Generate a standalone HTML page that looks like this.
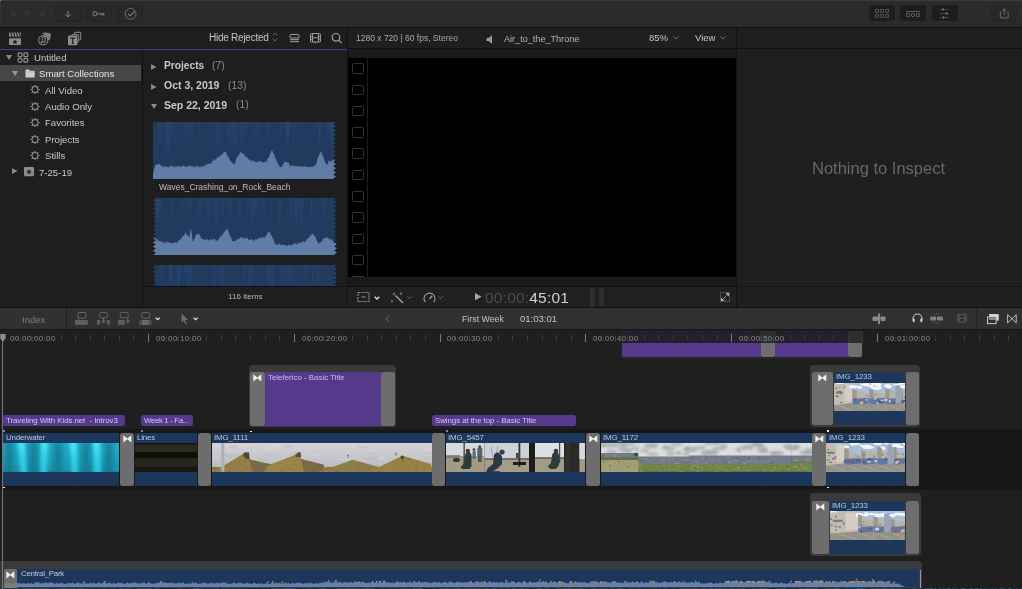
<!DOCTYPE html>
<html><head><meta charset="utf-8">
<style>
*{margin:0;padding:0;box-sizing:border-box}
html,body{width:1022px;height:589px;overflow:hidden;background:#1e1e1e;font-family:"Liberation Sans",sans-serif;color:#c8c8c8}
.a{position:absolute}
.t{position:absolute;white-space:nowrap;line-height:1;will-change:transform}
svg{position:absolute;overflow:visible}
</style></head><body>

<div class="a" style="left:0px;top:0px;width:1022px;height:27px;background:#2b2b2b;border-top:1px solid #3a3a3a"></div>
<div class="a" style="left:0px;top:27px;width:1022px;height:1px;background:#0e0e0e;"></div>
<div class="a" style="left:0px;top:0px;width:1px;height:27px;background:#333;"></div>
<div class="a" style="left:0px;top:0px;width:1px;height:1px;background:#8a70d8;"></div>
<div class="a" style="left:9px;top:9px;width:9px;height:9px;background:#333;border-radius:50%;border:1px solid #282828"></div>
<div class="a" style="left:23px;top:9px;width:9px;height:9px;background:#333;border-radius:50%;border:1px solid #282828"></div>
<div class="a" style="left:37.5px;top:9px;width:9px;height:9px;background:#333;border-radius:50%;border:1px solid #282828"></div>
<div class="a" style="left:55px;top:5px;width:26px;height:17px;background:#282828;border-radius:3px;border:1px solid #232323"></div>
<div class="a" style="left:86px;top:5px;width:26px;height:17px;background:#282828;border-radius:3px;border:1px solid #232323"></div>
<div class="a" style="left:117px;top:5px;width:26px;height:17px;background:#282828;border-radius:3px;border:1px solid #232323"></div>
<svg style="left:55px;top:5px;" width="26" height="17" viewBox="0 0 26 17"><path d="M13 6v6M10.3 9.4l2.7 2.7 2.7-2.7" stroke="#858585" stroke-width="1" fill="none"/></svg>
<svg style="left:86px;top:5px;" width="26" height="17" viewBox="0 0 26 17"><circle cx="9" cy="8.8" r="2.1" stroke="#858585" stroke-width="1" fill="none"/><path d="M11.1 8.8h7.2M15.3 8.8v2M17.8 8.8v2" stroke="#858585" stroke-width="1" fill="none"/></svg>
<svg style="left:117px;top:5px;" width="26" height="17" viewBox="0 0 26 17"><circle cx="13.6" cy="8.8" r="5.4" stroke="#6e6e6e" stroke-width="1" fill="none"/><path d="M11.2 8.8l2 2 4.3-4.3" stroke="#858585" stroke-width="1.1" fill="none"/></svg>
<div class="a" style="left:869px;top:5px;width:26px;height:16px;background:#1d1d1d;border-radius:3px"></div>
<div class="a" style="left:900px;top:5px;width:26px;height:16px;background:#1d1d1d;border-radius:3px"></div>
<div class="a" style="left:932px;top:5px;width:26px;height:16px;background:#1d1d1d;border-radius:3px"></div>
<div class="a" style="left:991px;top:5px;width:26px;height:17px;background:#282828;border-radius:3px;border:1px solid #232323"></div>
<svg style="left:869px;top:5px;" width="26" height="16" viewBox="0 0 26 16"><g fill="none" stroke="#5c5c5c" stroke-width="1"><rect x="6.5" y="4.5" width="3" height="3" rx=".6"/><rect x="11.5" y="4.5" width="3" height="3" rx=".6"/><rect x="16.5" y="4.5" width="3" height="3" rx=".6"/><rect x="6.5" y="9.5" width="3" height="3" rx=".6"/><rect x="11.5" y="9.5" width="3" height="3" rx=".6"/><rect x="16.5" y="9.5" width="3" height="3" rx=".6"/></g></svg>
<svg style="left:900px;top:5px;" width="26" height="16" viewBox="0 0 26 16"><g fill="none" stroke="#5c5c5c" stroke-width="1"><path d="M6 6.5h14"/><rect x="6.5" y="8.5" width="3" height="3" rx=".5"/><rect x="11.5" y="8.5" width="3" height="3" rx=".5"/><rect x="16.5" y="8.5" width="3" height="3" rx=".5"/></g></svg>
<svg style="left:932px;top:5px;" width="26" height="16" viewBox="0 0 26 16"><g fill="none" stroke="#474747" stroke-width="1"><path d="M8 4.5h9M8 8.5h9M8 12.5h9"/></g><g fill="#6a6a6a"><rect x="10.5" y="3" width="1.2" height="3"/><rect x="14" y="7" width="1.2" height="3"/><rect x="11" y="11" width="1.2" height="3"/></g></svg>
<svg style="left:991px;top:5px;" width="26" height="17" viewBox="0 0 26 17"><path d="M10.5 7H9.3v5.9h7.9V7H16M13.2 3.8v6.2M11.3 5.7l1.9-1.9 1.9 1.9" stroke="#6a6a6a" stroke-width="1" fill="none"/></svg>
<div class="a" style="left:0px;top:28px;width:347px;height:21px;background:#1e1e1e;"></div>
<div class="a" style="left:0px;top:49px;width:347px;height:1px;background:#3c3f8a;"></div>
<svg style="left:8px;top:31px;" width="14" height="15" viewBox="0 0 14 15"><rect x="1" y="1.6" width="12" height="4" fill="#8c8c8c"/><path d="M2.6 1.6l1.4 4M5.4 1.6l1.4 4M8.2 1.6l1.4 4M11 1.6l1.4 4" stroke="#1e1e1e" stroke-width="1.1"/><rect x="1" y="7.2" width="12" height="6.9" rx=".8" fill="#8c8c8c"/><path d="M7 8.3l.8 1.65 1.8.22-1.33 1.2.36 1.78L7 12.3l-1.63.85.36-1.78L4.4 10.17l1.8-.22z" fill="#1e1e1e"/></svg>
<svg style="left:37px;top:31px;" width="15" height="15" viewBox="0 0 15 15"><rect x="6.6" y="1.8" width="7" height="7" rx="1.3" fill="#7c7c7c" transform="rotate(12 10.1 5.3)"/><path d="M5.2 2.6h3" stroke="#7c7c7c" stroke-width="1"/><circle cx="6.2" cy="9.2" r="5" fill="#1e1e1e"/><circle cx="6.2" cy="9.2" r="4.6" fill="none" stroke="#8c8c8c" stroke-width="1.1"/><path d="M5.3 11.3V6.5l2.8-.7v4.9" stroke="#8c8c8c" stroke-width=".9" fill="none"/><ellipse cx="4.6" cy="11.4" rx="1.1" ry=".9" fill="#8c8c8c"/><ellipse cx="7.4" cy="10.8" rx="1.1" ry=".9" fill="#8c8c8c"/></svg>
<svg style="left:67px;top:31px;" width="15" height="15" viewBox="0 0 15 15"><path d="M7.3 3.2V2.4a1 1 0 0 1 1-1h4.4a1 1 0 0 1 1 1v5.4a1 1 0 0 1-1 1h-.8" fill="none" stroke="#7c7c7c" stroke-width="1.1"/><path d="M5 5.4V4.6a1 1 0 0 1 1-1h4.6a1 1 0 0 1 1 1v5.4a1 1 0 0 1-1 1H10" fill="none" stroke="#7c7c7c" stroke-width="1.1"/><rect x="1" y="4.6" width="9.4" height="9.6" rx="1.3" fill="#8c8c8c"/><path d="M3.2 7.1h5M5.7 7.1v5.2M4.7 12.3h2" stroke="#1e1e1e" stroke-width="1.2" fill="none"/></svg>
<div class="t" style="left:208.6px;top:32.73px;font-size:10px;color:#c4c4c4;font-weight:normal;letter-spacing:-0.25px;">Hide Rejected</div>
<svg style="left:271px;top:31px;" width="8" height="11" viewBox="0 0 8 11"><path d="M1.6 4.4L4 2l2.4 2.4M1.6 7.6L4 10l2.4-2.4" stroke="#666" stroke-width=".9" fill="none"/></svg>
<svg style="left:289px;top:33px;" width="11" height="10" viewBox="0 0 11 10"><rect x="1" y="1.5" width="9" height="3.5" rx=".8" fill="none" stroke="#9a9a9a" stroke-width="1"/><rect x="1" y="6" width="9" height="1.2" fill="#8a8a8a"/><rect x="1" y="8" width="9" height="1.2" fill="#8a8a8a"/></svg>
<svg style="left:309px;top:32px;" width="13" height="12" viewBox="0 0 13 12"><rect x="1.5" y="1.5" width="10" height="8.5" rx="1" fill="none" stroke="#9a9a9a" stroke-width="1"/><path d="M3.5 1.5v8.5M9.5 1.5v8.5M1.5 4.3h2M1.5 7.2h2M9.5 4.3h2M9.5 7.2h2M3.5 5.75h6" stroke="#9a9a9a" stroke-width="1"/><path d="M5.5 10.5h2l-1 1.2z" fill="#9a9a9a"/></svg>
<svg style="left:331px;top:32px;" width="12" height="13" viewBox="0 0 12 13"><circle cx="5" cy="5.3" r="3.8" fill="none" stroke="#a0a0a0" stroke-width="1.2"/><path d="M7.8 8.1l3 3" stroke="#a0a0a0" stroke-width="1.3"/></svg>
<div class="a" style="left:0px;top:50px;width:142px;height:257px;background:#1e1e1e;"></div>
<div class="a" style="left:0px;top:65px;width:141px;height:16px;background:#474747;"></div>
<div class="a" style="left:142px;top:50px;width:1px;height:257px;background:#121212;"></div>
<svg style="left:6px;top:54.6px;" width="6" height="5" viewBox="0 0 6 5"><path d="M0 0h6l-3 5z" fill="#8a8a8a"/></svg>
<svg style="left:17px;top:52px;" width="12" height="11" viewBox="0 0 12 11"><g fill="none" stroke="#8e8e8e" stroke-width="1.2"><rect x="1.1" y="0.9" width="3.8" height="3.8" rx="1"/><rect x="6.9" y="0.9" width="3.8" height="3.8" rx="1"/><rect x="1.1" y="6.4" width="3.8" height="3.8" rx="1"/><rect x="6.9" y="6.4" width="3.8" height="3.8" rx="1"/></g></svg>
<div class="t" style="left:33.7px;top:52.77px;font-size:9.6px;color:#c8c8c8;font-weight:normal;letter-spacing:0px;">Untitled</div>
<svg style="left:11.5px;top:71px;" width="6" height="5" viewBox="0 0 6 5"><path d="M0 0h6l-3 5z" fill="#9a9a9a"/></svg>
<svg style="left:24.5px;top:68.5px;" width="10" height="9" viewBox="0 0 10 9"><path d="M0.5 1.2a.6.6 0 0 1 .6-.6h2.8l1 1.2h4.2a.6.6 0 0 1 .6.6V8a.6.6 0 0 1-.6.6H1.1A.6.6 0 0 1 .5 8z" fill="#d0d0d0"/><path d="M0.5 3h9.2" stroke="#a8a8a8" stroke-width=".6"/></svg>
<div class="t" style="left:39.3px;top:69.27px;font-size:9.6px;color:#e6e6e6;font-weight:normal;letter-spacing:0px;">Smart Collections</div>
<svg style="left:30px;top:85.4px;" width="10" height="9" viewBox="0 0 10 9"><path d="M8.20 4.50L9.60 4.50" stroke="#9a9a9a" stroke-width="1.1"/><path d="M7.26 6.76L8.25 7.75" stroke="#9a9a9a" stroke-width="1.1"/><path d="M5.00 7.70L5.00 9.10" stroke="#9a9a9a" stroke-width="1.1"/><path d="M2.74 6.76L1.75 7.75" stroke="#9a9a9a" stroke-width="1.1"/><path d="M1.80 4.50L0.40 4.50" stroke="#9a9a9a" stroke-width="1.1"/><path d="M2.74 2.24L1.75 1.25" stroke="#9a9a9a" stroke-width="1.1"/><path d="M5.00 1.30L5.00 -0.10" stroke="#9a9a9a" stroke-width="1.1"/><path d="M7.26 2.24L8.25 1.25" stroke="#9a9a9a" stroke-width="1.1"/><circle cx="5" cy="4.5" r="3" fill="none" stroke="#9a9a9a" stroke-width="1"/></svg>
<div class="t" style="left:45.2px;top:85.57px;font-size:9.6px;color:#c8c8c8;font-weight:normal;letter-spacing:0px;">All Video</div>
<svg style="left:30px;top:101.8px;" width="10" height="9" viewBox="0 0 10 9"><path d="M8.20 4.50L9.60 4.50" stroke="#9a9a9a" stroke-width="1.1"/><path d="M7.26 6.76L8.25 7.75" stroke="#9a9a9a" stroke-width="1.1"/><path d="M5.00 7.70L5.00 9.10" stroke="#9a9a9a" stroke-width="1.1"/><path d="M2.74 6.76L1.75 7.75" stroke="#9a9a9a" stroke-width="1.1"/><path d="M1.80 4.50L0.40 4.50" stroke="#9a9a9a" stroke-width="1.1"/><path d="M2.74 2.24L1.75 1.25" stroke="#9a9a9a" stroke-width="1.1"/><path d="M5.00 1.30L5.00 -0.10" stroke="#9a9a9a" stroke-width="1.1"/><path d="M7.26 2.24L8.25 1.25" stroke="#9a9a9a" stroke-width="1.1"/><circle cx="5" cy="4.5" r="3" fill="none" stroke="#9a9a9a" stroke-width="1"/></svg>
<div class="t" style="left:45.2px;top:101.97px;font-size:9.6px;color:#c8c8c8;font-weight:normal;letter-spacing:0px;">Audio Only</div>
<svg style="left:30px;top:118.2px;" width="10" height="9" viewBox="0 0 10 9"><path d="M8.20 4.50L9.60 4.50" stroke="#9a9a9a" stroke-width="1.1"/><path d="M7.26 6.76L8.25 7.75" stroke="#9a9a9a" stroke-width="1.1"/><path d="M5.00 7.70L5.00 9.10" stroke="#9a9a9a" stroke-width="1.1"/><path d="M2.74 6.76L1.75 7.75" stroke="#9a9a9a" stroke-width="1.1"/><path d="M1.80 4.50L0.40 4.50" stroke="#9a9a9a" stroke-width="1.1"/><path d="M2.74 2.24L1.75 1.25" stroke="#9a9a9a" stroke-width="1.1"/><path d="M5.00 1.30L5.00 -0.10" stroke="#9a9a9a" stroke-width="1.1"/><path d="M7.26 2.24L8.25 1.25" stroke="#9a9a9a" stroke-width="1.1"/><circle cx="5" cy="4.5" r="3" fill="none" stroke="#9a9a9a" stroke-width="1"/></svg>
<div class="t" style="left:45.2px;top:118.37px;font-size:9.6px;color:#c8c8c8;font-weight:normal;letter-spacing:0px;">Favorites</div>
<svg style="left:30px;top:134.6px;" width="10" height="9" viewBox="0 0 10 9"><path d="M8.20 4.50L9.60 4.50" stroke="#9a9a9a" stroke-width="1.1"/><path d="M7.26 6.76L8.25 7.75" stroke="#9a9a9a" stroke-width="1.1"/><path d="M5.00 7.70L5.00 9.10" stroke="#9a9a9a" stroke-width="1.1"/><path d="M2.74 6.76L1.75 7.75" stroke="#9a9a9a" stroke-width="1.1"/><path d="M1.80 4.50L0.40 4.50" stroke="#9a9a9a" stroke-width="1.1"/><path d="M2.74 2.24L1.75 1.25" stroke="#9a9a9a" stroke-width="1.1"/><path d="M5.00 1.30L5.00 -0.10" stroke="#9a9a9a" stroke-width="1.1"/><path d="M7.26 2.24L8.25 1.25" stroke="#9a9a9a" stroke-width="1.1"/><circle cx="5" cy="4.5" r="3" fill="none" stroke="#9a9a9a" stroke-width="1"/></svg>
<div class="t" style="left:45.2px;top:134.77px;font-size:9.6px;color:#c8c8c8;font-weight:normal;letter-spacing:0px;">Projects</div>
<svg style="left:30px;top:151.0px;" width="10" height="9" viewBox="0 0 10 9"><path d="M8.20 4.50L9.60 4.50" stroke="#9a9a9a" stroke-width="1.1"/><path d="M7.26 6.76L8.25 7.75" stroke="#9a9a9a" stroke-width="1.1"/><path d="M5.00 7.70L5.00 9.10" stroke="#9a9a9a" stroke-width="1.1"/><path d="M2.74 6.76L1.75 7.75" stroke="#9a9a9a" stroke-width="1.1"/><path d="M1.80 4.50L0.40 4.50" stroke="#9a9a9a" stroke-width="1.1"/><path d="M2.74 2.24L1.75 1.25" stroke="#9a9a9a" stroke-width="1.1"/><path d="M5.00 1.30L5.00 -0.10" stroke="#9a9a9a" stroke-width="1.1"/><path d="M7.26 2.24L8.25 1.25" stroke="#9a9a9a" stroke-width="1.1"/><circle cx="5" cy="4.5" r="3" fill="none" stroke="#9a9a9a" stroke-width="1"/></svg>
<div class="t" style="left:45.2px;top:151.17px;font-size:9.6px;color:#c8c8c8;font-weight:normal;letter-spacing:0px;">Stills</div>
<svg style="left:11.5px;top:168.4px;" width="6" height="6" viewBox="0 0 6 6"><path d="M0 0v6l5.5-3z" fill="#8a8a8a"/></svg>
<svg style="left:24px;top:166.8px;" width="10" height="9.5" viewBox="0 0 10 9.5"><rect x="0" y="0" width="10" height="9.3" rx="1.2" fill="#8a8a8a"/><path d="M5 1.9l.85 1.85 2 .2-1.5 1.35.42 2L5 6.3 3.23 7.3l.42-2-1.5-1.35 2-.2z" fill="#2a2a2a"/></svg>
<div class="t" style="left:39px;top:167.57px;font-size:9.6px;color:#c8c8c8;font-weight:normal;letter-spacing:0px;">7-25-19</div>
<div class="a" style="left:143px;top:50px;width:204px;height:257px;background:#1e1e1e;"></div>
<div class="a" style="left:143px;top:286px;width:204px;height:1px;background:#111;"></div>
<div class="a" style="left:347px;top:28px;width:1px;height:279px;background:#111;"></div>
<svg style="left:151.2px;top:63.8px;" width="6" height="6" viewBox="0 0 6 6"><path d="M0 0v6l5.5-3z" fill="#8a8a8a"/></svg>
<div class="t" style="left:164.4px;top:60.67px;font-size:10.2px;color:#c8c8c8;font-weight:bold;letter-spacing:0px;">Projects</div>
<div class="t" style="left:212.2px;top:60.58px;font-size:10.3px;color:#8a8a8a;font-weight:normal;letter-spacing:0px;">(7)</div>
<svg style="left:151.2px;top:83.5px;" width="6" height="6" viewBox="0 0 6 6"><path d="M0 0v6l5.5-3z" fill="#8a8a8a"/></svg>
<div class="t" style="left:164.4px;top:80.41px;font-size:10.5px;color:#c8c8c8;font-weight:bold;letter-spacing:0px;">Oct 3, 2019</div>
<div class="t" style="left:227.8px;top:80.58px;font-size:10.3px;color:#8a8a8a;font-weight:normal;letter-spacing:0px;">(13)</div>
<svg style="left:151px;top:104px;" width="6" height="5" viewBox="0 0 6 5"><path d="M0 0h6l-3 5z" fill="#8a8a8a"/></svg>
<div class="t" style="left:164.4px;top:100.11px;font-size:10.5px;color:#c8c8c8;font-weight:bold;letter-spacing:0px;">Sep 22, 2019</div>
<div class="t" style="left:235.7px;top:100.28px;font-size:10.3px;color:#8a8a8a;font-weight:normal;letter-spacing:0px;">(1)</div>
<svg style="left:153px;top:122px;overflow:hidden" width="183" height="57" viewBox="0 0 183 57"><defs><clipPath id="w1"><path d="M0.0 0.0 L183.0 0.0 L180.0 2.1 L183.0 4.2 L180.0 6.3 L183.0 8.4 L180.0 10.5 L183.0 12.6 L180.0 14.7 L183.0 16.8 L180.0 18.9 L183.0 21.0 L180.0 23.1 L183.0 25.2 L180.0 27.3 L183.0 29.4 L180.0 31.5 L183.0 33.6 L180.0 35.7 L183.0 37.8 L180.0 39.9 L183.0 42.0 L180.0 44.1 L183.0 46.2 L180.0 48.3 L183.0 50.4 L180.0 52.5 L183.0 54.6 L180.0 56.7 L183.0 58.8 L183.0 57.0 L0.0 57.0Z"/></clipPath></defs><g clip-path="url(#w1)"><rect width="183" height="57" fill="#213a5e"/><path d="M80.8 0L84.8 0L82.8 43.4Z" fill="#29466e" opacity="0.41"/><path d="M90.8 0L95.0 0L92.9 22.4Z" fill="#29466e" opacity="0.43"/><path d="M112.7 0L117.8 0L115.3 19.8Z" fill="#29466e" opacity="0.36"/><path d="M14.0 0L19.2 0L16.6 36.9Z" fill="#29466e" opacity="0.26"/><path d="M176.8 0L182.7 0L179.7 35.7Z" fill="#29466e" opacity="0.47"/><path d="M28.0 0L29.7 0L28.8 32.2Z" fill="#29466e" opacity="0.27"/><path d="M33.5 0L36.1 0L34.8 18.0Z" fill="#29466e" opacity="0.41"/><path d="M78.0 0L83.3 0L80.6 31.9Z" fill="#29466e" opacity="0.47"/><path d="M89.2 0L93.7 0L91.5 30.1Z" fill="#29466e" opacity="0.35"/><path d="M179.6 0L185.6 0L182.6 41.0Z" fill="#29466e" opacity="0.50"/><path d="M56.4 0L59.0 0L57.7 25.3Z" fill="#29466e" opacity="0.27"/><path d="M138.5 0L141.9 0L140.2 41.2Z" fill="#29466e" opacity="0.39"/><path d="M172.7 0L178.0 0L175.3 17.1Z" fill="#29466e" opacity="0.32"/><path d="M164.7 0L168.4 0L166.6 45.0Z" fill="#29466e" opacity="0.39"/><path d="M11.2 0L15.6 0L13.4 39.3Z" fill="#29466e" opacity="0.34"/><path d="M14.4 0L17.5 0L15.9 44.6Z" fill="#29466e" opacity="0.52"/><path d="M20.3 0L22.9 0L21.6 20.0Z" fill="#29466e" opacity="0.27"/><path d="M144.7 0L147.0 0L145.9 33.0Z" fill="#29466e" opacity="0.41"/><path d="M32.5 0L37.3 0L34.9 20.8Z" fill="#29466e" opacity="0.48"/><path d="M19.6 0L23.0 0L21.3 23.2Z" fill="#29466e" opacity="0.34"/><path d="M175.1 0L180.2 0L177.7 25.8Z" fill="#29466e" opacity="0.56"/><path d="M36.9 0L40.2 0L38.6 41.4Z" fill="#29466e" opacity="0.47"/><path d="M15.4 0L21.3 0L18.4 23.2Z" fill="#29466e" opacity="0.34"/><path d="M139.9 0L142.9 0L141.4 25.5Z" fill="#29466e" opacity="0.28"/><path d="M14.4 0L18.6 0L16.5 24.0Z" fill="#29466e" opacity="0.46"/><path d="M66.2 0L69.8 0L68.0 44.4Z" fill="#29466e" opacity="0.42"/><path d="M102.4 0L107.9 0L105.1 22.3Z" fill="#29466e" opacity="0.30"/><path d="M163.6 0L168.8 0L166.2 24.2Z" fill="#29466e" opacity="0.32"/><path d="M132.4 0L138.2 0L135.3 22.7Z" fill="#29466e" opacity="0.58"/><path d="M159.3 0L163.6 0L161.4 29.1Z" fill="#29466e" opacity="0.29"/><path d="M4.2 0L10.0 0L7.1 23.9Z" fill="#29466e" opacity="0.50"/><path d="M44.4 0L49.6 0L47.0 34.1Z" fill="#29466e" opacity="0.35"/><path d="M29.7 0L34.5 0L32.1 19.1Z" fill="#29466e" opacity="0.33"/><path d="M99.7 0L105.0 0L102.4 34.6Z" fill="#29466e" opacity="0.35"/><path d="M166.6 0L169.1 0L167.9 17.6Z" fill="#29466e" opacity="0.34"/><path d="M80.6 0L82.5 0L81.6 22.1Z" fill="#29466e" opacity="0.38"/><path d="M103.6 0L105.8 0L104.7 27.4Z" fill="#29466e" opacity="0.56"/><path d="M177.2 0L181.7 0L179.4 36.8Z" fill="#29466e" opacity="0.45"/><path d="M24.8 0L26.6 0L25.7 17.6Z" fill="#29466e" opacity="0.57"/><path d="M125.4 0L131.2 0L128.3 17.7Z" fill="#29466e" opacity="0.47"/><path d="M85.8 0L90.7 0L88.2 26.2Z" fill="#29466e" opacity="0.60"/><path d="M11.8 0L15.8 0L13.8 38.1Z" fill="#29466e" opacity="0.57"/><path d="M132.5 0L137.2 0L134.9 39.7Z" fill="#29466e" opacity="0.57"/><path d="M62.1 0L66.7 0L64.4 42.8Z" fill="#29466e" opacity="0.55"/><path d="M73.8 0L78.9 0L76.3 41.7Z" fill="#29466e" opacity="0.45"/><path d="M0 57 L0.0 52.3 L0.7 48.9 L1.4 46.6 L2.1 44.2 L2.8 42.2 L3.5 42.8 L4.2 43.0 L4.9 42.0 L5.6 42.0 L6.3 41.8 L7.0 43.2 L7.7 43.4 L8.4 43.6 L9.1 45.1 L9.8 43.8 L10.5 45.6 L11.2 43.8 L11.9 45.1 L12.6 44.8 L13.3 44.2 L14.0 45.3 L14.7 44.8 L15.4 45.0 L16.1 45.7 L16.8 44.1 L17.5 43.5 L18.2 44.1 L18.9 45.0 L19.6 43.8 L20.3 43.7 L21.0 45.4 L21.7 44.8 L22.4 44.2 L23.1 45.3 L23.8 43.9 L24.5 44.7 L25.2 43.5 L25.9 44.0 L26.6 44.9 L27.3 45.1 L28.0 45.0 L28.7 43.8 L29.4 44.2 L30.1 43.6 L30.8 43.2 L31.5 44.1 L32.2 44.9 L32.9 45.0 L33.6 44.7 L34.3 45.3 L35.0 43.7 L35.7 43.5 L36.4 44.2 L37.1 43.8 L37.8 43.7 L38.5 44.2 L39.2 44.8 L39.9 44.5 L40.6 44.1 L41.3 45.4 L42.0 45.8 L42.7 44.5 L43.4 43.6 L44.1 43.6 L44.8 45.6 L45.5 43.7 L46.2 45.3 L46.9 45.0 L47.6 44.4 L48.3 45.6 L49.0 43.8 L49.7 44.1 L50.4 44.7 L51.1 43.2 L51.8 44.7 L52.5 42.9 L53.2 42.3 L53.9 41.6 L54.6 42.6 L55.3 41.8 L56.0 41.8 L56.7 41.5 L57.4 41.4 L58.1 41.4 L58.8 40.3 L59.5 38.7 L60.2 39.0 L60.9 37.9 L61.6 37.1 L62.3 37.7 L63.0 37.7 L63.7 35.8 L64.4 35.5 L65.1 35.0 L65.8 35.3 L66.5 34.3 L67.2 33.9 L67.9 33.7 L68.6 32.1 L69.3 32.4 L70.0 32.0 L70.7 29.3 L71.4 30.6 L72.1 29.7 L72.8 29.5 L73.5 31.5 L74.2 33.2 L74.9 35.1 L75.6 35.0 L76.3 36.6 L77.0 38.3 L77.7 39.1 L78.4 40.4 L79.1 40.3 L79.8 41.7 L80.5 41.6 L81.2 43.0 L81.9 41.5 L82.6 39.3 L83.3 37.8 L84.0 34.8 L84.7 34.7 L85.4 33.6 L86.1 32.7 L86.8 30.7 L87.5 30.4 L88.2 28.8 L88.9 31.1 L89.6 31.9 L90.3 31.5 L91.0 31.7 L91.7 33.5 L92.4 34.5 L93.1 35.6 L93.8 35.5 L94.5 35.0 L95.2 37.4 L95.9 36.2 L96.6 38.6 L97.3 37.6 L98.0 38.6 L98.7 39.7 L99.4 38.2 L100.1 38.3 L100.8 39.2 L101.5 39.8 L102.2 40.1 L102.9 39.8 L103.6 40.4 L104.3 39.4 L105.0 40.5 L105.7 38.5 L106.4 38.9 L107.1 39.7 L107.8 39.1 L108.5 40.2 L109.2 40.1 L109.9 39.8 L110.6 40.7 L111.3 40.0 L112.0 39.5 L112.7 39.7 L113.4 40.0 L114.1 38.8 L114.8 35.7 L115.5 35.8 L116.2 34.7 L116.9 32.3 L117.6 31.0 L118.3 28.7 L119.0 28.1 L119.7 29.6 L120.4 31.5 L121.1 31.8 L121.8 35.7 L122.5 36.1 L123.2 37.4 L123.9 39.9 L124.6 40.9 L125.3 42.2 L126.0 44.3 L126.7 44.3 L127.4 45.6 L128.1 44.5 L128.8 45.0 L129.5 44.1 L130.2 41.7 L130.9 41.4 L131.6 39.7 L132.3 39.7 L133.0 39.8 L133.7 40.7 L134.4 40.3 L135.1 40.7 L135.8 41.1 L136.5 42.8 L137.2 44.2 L137.9 43.0 L138.6 44.7 L139.3 43.0 L140.0 43.4 L140.7 43.6 L141.4 44.7 L142.1 43.9 L142.8 44.1 L143.5 44.7 L144.2 43.6 L144.9 45.1 L145.6 43.7 L146.3 44.7 L147.0 44.2 L147.7 44.1 L148.4 44.9 L149.1 44.8 L149.8 44.7 L150.5 44.8 L151.2 45.0 L151.9 44.0 L152.6 44.1 L153.3 45.0 L154.0 45.0 L154.7 44.7 L155.4 45.4 L156.1 44.8 L156.8 45.3 L157.5 43.7 L158.2 44.9 L158.9 45.0 L159.6 45.2 L160.3 43.7 L161.0 43.6 L161.7 45.0 L162.4 42.3 L163.1 42.3 L163.8 40.1 L164.5 36.5 L165.2 34.9 L165.9 34.4 L166.6 31.7 L167.3 29.7 L168.0 29.8 L168.7 30.7 L169.4 33.4 L170.1 33.7 L170.8 36.2 L171.5 38.9 L172.2 39.4 L172.9 42.0 L173.6 42.6 L174.3 42.3 L175.0 41.5 L175.7 38.5 L176.4 39.0 L177.1 39.6 L177.8 39.0 L178.5 39.4 L179.2 38.3 L179.9 38.0 L180.6 38.1 L181.3 37.9 L182.0 39.1 L182.7 39.0 L183 57Z" fill="#5f7da6"/></g></svg>
<div class="t" style="left:158.7px;top:183.10px;font-size:8.5px;color:#bdbdbd;font-weight:normal;letter-spacing:0px;">Waves_Crashing_on_Rock_Beach</div>
<svg style="left:153px;top:198px;overflow:hidden" width="184" height="57" viewBox="0 0 184 57"><defs><clipPath id="w2"><path d="M0.0 0.0 L184.0 0.0 L181.0 2.1 L184.0 4.2 L181.0 6.3 L184.0 8.4 L181.0 10.5 L184.0 12.6 L181.0 14.7 L184.0 16.8 L181.0 18.9 L184.0 21.0 L181.0 23.1 L184.0 25.2 L181.0 27.3 L184.0 29.4 L181.0 31.5 L184.0 33.6 L181.0 35.7 L184.0 37.8 L181.0 39.9 L184.0 42.0 L181.0 44.1 L184.0 46.2 L181.0 48.3 L184.0 50.4 L181.0 52.5 L184.0 54.6 L181.0 56.7 L184.0 58.8 L184.0 57.0 L0.0 57.0 L3.0 54.9 L0.0 52.8 L3.0 50.7 L0.0 48.6 L3.0 46.5 L0.0 44.4 L3.0 42.3 L0.0 40.2 L3.0 38.1 L0.0 36.0 L3.0 33.9 L0.0 31.8 L3.0 29.7 L0.0 27.6 L3.0 25.5 L0.0 23.4 L3.0 21.3 L0.0 19.2 L3.0 17.1 L0.0 15.0 L3.0 12.9 L0.0 10.8 L3.0 8.7 L0.0 6.6 L3.0 4.5 L0.0 2.4 L3.0 0.3 L0.0 -1.8Z"/></clipPath></defs><g clip-path="url(#w2)"><rect width="184" height="57" fill="#213a5e"/><path d="M167.3 0L173.1 0L170.2 42.5Z" fill="#29466e" opacity="0.28"/><path d="M107.2 0L110.7 0L108.9 32.2Z" fill="#29466e" opacity="0.30"/><path d="M33.5 0L37.1 0L35.3 23.4Z" fill="#29466e" opacity="0.41"/><path d="M3.6 0L5.5 0L4.6 37.3Z" fill="#29466e" opacity="0.40"/><path d="M91.9 0L96.7 0L94.3 27.3Z" fill="#29466e" opacity="0.27"/><path d="M142.0 0L146.2 0L144.1 35.9Z" fill="#29466e" opacity="0.47"/><path d="M177.0 0L180.2 0L178.6 38.8Z" fill="#29466e" opacity="0.38"/><path d="M103.0 0L107.5 0L105.3 26.1Z" fill="#29466e" opacity="0.28"/><path d="M84.8 0L89.6 0L87.2 33.9Z" fill="#29466e" opacity="0.41"/><path d="M117.0 0L119.4 0L118.2 22.2Z" fill="#29466e" opacity="0.36"/><path d="M148.9 0L151.4 0L150.1 20.4Z" fill="#29466e" opacity="0.28"/><path d="M5.8 0L8.6 0L7.2 33.4Z" fill="#29466e" opacity="0.54"/><path d="M59.3 0L62.5 0L60.9 25.3Z" fill="#29466e" opacity="0.36"/><path d="M141.1 0L145.1 0L143.1 24.5Z" fill="#29466e" opacity="0.29"/><path d="M141.9 0L146.6 0L144.2 40.7Z" fill="#29466e" opacity="0.33"/><path d="M97.5 0L103.2 0L100.4 34.0Z" fill="#29466e" opacity="0.58"/><path d="M27.8 0L33.7 0L30.8 18.7Z" fill="#29466e" opacity="0.40"/><path d="M1.7 0L6.9 0L4.3 36.7Z" fill="#29466e" opacity="0.59"/><path d="M145.2 0L151.0 0L148.1 32.4Z" fill="#29466e" opacity="0.60"/><path d="M136.3 0L139.4 0L137.8 44.9Z" fill="#29466e" opacity="0.38"/><path d="M34.6 0L36.5 0L35.6 30.4Z" fill="#29466e" opacity="0.32"/><path d="M168.9 0L174.7 0L171.8 23.3Z" fill="#29466e" opacity="0.29"/><path d="M96.2 0L98.5 0L97.3 32.6Z" fill="#29466e" opacity="0.53"/><path d="M44.8 0L48.3 0L46.6 42.8Z" fill="#29466e" opacity="0.41"/><path d="M60.3 0L65.8 0L63.1 40.3Z" fill="#29466e" opacity="0.56"/><path d="M124.8 0L128.3 0L126.5 36.9Z" fill="#29466e" opacity="0.54"/><path d="M116.3 0L119.0 0L117.7 25.5Z" fill="#29466e" opacity="0.39"/><path d="M140.0 0L144.0 0L142.0 32.8Z" fill="#29466e" opacity="0.54"/><path d="M17.8 0L22.1 0L20.0 26.6Z" fill="#29466e" opacity="0.45"/><path d="M152.4 0L155.1 0L153.7 44.2Z" fill="#29466e" opacity="0.28"/><path d="M101.4 0L105.4 0L103.4 23.8Z" fill="#29466e" opacity="0.45"/><path d="M84.8 0L88.4 0L86.6 37.6Z" fill="#29466e" opacity="0.25"/><path d="M66.9 0L71.9 0L69.4 21.1Z" fill="#29466e" opacity="0.55"/><path d="M35.2 0L39.8 0L37.5 22.0Z" fill="#29466e" opacity="0.41"/><path d="M76.8 0L78.7 0L77.7 37.0Z" fill="#29466e" opacity="0.42"/><path d="M124.8 0L128.8 0L126.8 32.9Z" fill="#29466e" opacity="0.43"/><path d="M52.0 0L57.6 0L54.8 19.6Z" fill="#29466e" opacity="0.56"/><path d="M157.0 0L160.8 0L158.9 39.2Z" fill="#29466e" opacity="0.49"/><path d="M109.9 0L112.8 0L111.3 26.2Z" fill="#29466e" opacity="0.37"/><path d="M52.7 0L58.5 0L55.6 26.8Z" fill="#29466e" opacity="0.39"/><path d="M74.6 0L79.8 0L77.2 30.7Z" fill="#29466e" opacity="0.44"/><path d="M45.6 0L48.4 0L47.0 19.6Z" fill="#29466e" opacity="0.33"/><path d="M45.9 0L51.2 0L48.6 31.4Z" fill="#29466e" opacity="0.29"/><path d="M84.1 0L86.2 0L85.1 33.2Z" fill="#29466e" opacity="0.40"/><path d="M156.6 0L159.3 0L157.9 41.3Z" fill="#29466e" opacity="0.34"/><path d="M0 57 L0.0 40.2 L0.7 39.8 L1.4 38.8 L2.1 41.0 L2.8 40.2 L3.5 40.9 L4.2 40.8 L4.9 42.9 L5.6 41.5 L6.3 43.5 L7.0 43.1 L7.7 44.2 L8.4 43.5 L9.1 43.1 L9.8 45.1 L10.5 44.5 L11.2 43.4 L11.9 45.4 L12.6 45.3 L13.3 43.6 L14.0 43.2 L14.7 44.7 L15.4 43.6 L16.1 45.1 L16.8 44.5 L17.5 45.1 L18.2 44.8 L18.9 45.3 L19.6 45.5 L20.3 45.0 L21.0 45.0 L21.7 44.4 L22.4 44.0 L23.1 44.0 L23.8 45.8 L24.5 43.7 L25.2 43.4 L25.9 42.3 L26.6 42.2 L27.3 41.1 L28.0 41.1 L28.7 39.2 L29.4 38.2 L30.1 38.0 L30.8 37.3 L31.5 36.9 L32.2 34.5 L32.9 35.1 L33.6 36.4 L34.3 37.8 L35.0 37.1 L35.7 39.1 L36.4 38.7 L37.1 35.3 L37.8 29.9 L38.5 33.2 L39.2 38.9 L39.9 43.9 L40.6 42.9 L41.3 40.7 L42.0 39.8 L42.7 37.5 L43.4 36.8 L44.1 35.7 L44.8 36.0 L45.5 36.0 L46.2 36.6 L46.9 37.2 L47.6 38.5 L48.3 40.4 L49.0 40.9 L49.7 40.3 L50.4 41.9 L51.1 41.3 L51.8 42.3 L52.5 41.3 L53.2 41.6 L53.9 41.1 L54.6 41.6 L55.3 42.4 L56.0 42.6 L56.7 41.9 L57.4 41.4 L58.1 40.5 L58.8 42.4 L59.5 41.4 L60.2 41.4 L60.9 40.7 L61.6 40.7 L62.3 41.6 L63.0 43.0 L63.7 42.5 L64.4 42.5 L65.1 42.3 L65.8 40.5 L66.5 39.5 L67.2 39.7 L67.9 37.6 L68.6 38.0 L69.3 37.0 L70.0 36.3 L70.7 34.4 L71.4 33.4 L72.1 33.4 L72.8 31.6 L73.5 31.8 L74.2 30.0 L74.9 31.6 L75.6 34.1 L76.3 36.0 L77.0 38.1 L77.7 38.7 L78.4 40.4 L79.1 43.3 L79.8 43.0 L80.5 43.2 L81.2 43.2 L81.9 42.9 L82.6 43.1 L83.3 41.4 L84.0 42.6 L84.7 39.9 L85.4 41.3 L86.1 40.4 L86.8 40.7 L87.5 38.5 L88.2 39.5 L88.9 40.3 L89.6 39.8 L90.3 38.6 L91.0 40.8 L91.7 41.1 L92.4 39.2 L93.1 41.1 L93.8 39.4 L94.5 39.6 L95.2 41.5 L95.9 41.5 L96.6 42.2 L97.3 41.6 L98.0 41.5 L98.7 41.1 L99.4 42.0 L100.1 43.2 L100.8 42.2 L101.5 42.5 L102.2 40.7 L102.9 41.8 L103.6 41.7 L104.3 39.9 L105.0 41.5 L105.7 39.8 L106.4 39.7 L107.1 39.2 L107.8 40.4 L108.5 39.0 L109.2 40.8 L109.9 38.3 L110.6 40.1 L111.3 39.8 L112.0 39.2 L112.7 38.1 L113.4 37.6 L114.1 36.2 L114.8 33.9 L115.5 34.5 L116.2 33.0 L116.9 34.7 L117.6 35.7 L118.3 37.8 L119.0 37.8 L119.7 40.7 L120.4 40.7 L121.1 43.2 L121.8 45.9 L122.5 46.3 L123.2 46.9 L123.9 45.4 L124.6 46.9 L125.3 47.0 L126.0 45.5 L126.7 45.5 L127.4 46.6 L128.1 47.6 L128.8 46.8 L129.5 46.4 L130.2 46.6 L130.9 47.4 L131.6 46.8 L132.3 46.9 L133.0 47.1 L133.7 47.9 L134.4 47.7 L135.1 47.8 L135.8 46.3 L136.5 47.0 L137.2 47.4 L137.9 47.0 L138.6 47.4 L139.3 47.2 L140.0 45.2 L140.7 46.0 L141.4 45.5 L142.1 45.0 L142.8 45.5 L143.5 46.6 L144.2 45.9 L144.9 44.2 L145.6 44.4 L146.3 44.6 L147.0 45.7 L147.7 44.5 L148.4 43.7 L149.1 44.5 L149.8 43.6 L150.5 43.0 L151.2 44.0 L151.9 44.3 L152.6 43.1 L153.3 42.3 L154.0 40.2 L154.7 40.4 L155.4 39.9 L156.1 39.5 L156.8 38.1 L157.5 36.4 L158.2 37.8 L158.9 35.5 L159.6 36.0 L160.3 35.5 L161.0 37.7 L161.7 38.0 L162.4 38.8 L163.1 41.0 L163.8 42.3 L164.5 44.2 L165.2 44.4 L165.9 46.2 L166.6 45.0 L167.3 45.0 L168.0 42.8 L168.7 43.7 L169.4 43.0 L170.1 39.9 L170.8 41.1 L171.5 40.5 L172.2 40.2 L172.9 38.6 L173.6 39.9 L174.3 39.8 L175.0 39.3 L175.7 40.7 L176.4 41.2 L177.1 41.0 L177.8 42.3 L178.5 40.9 L179.2 41.9 L179.9 43.0 L180.6 43.5 L181.3 45.1 L182.0 44.8 L182.7 45.3 L183.4 45.8 L184 57Z" fill="#5f7da6"/></g></svg>
<svg style="left:153px;top:265px;overflow:hidden" width="184" height="21" viewBox="0 0 184 21"><defs><clipPath id="w3"><path d="M0.0 0.0 L184.0 0.0 L181.0 2.1 L184.0 4.2 L181.0 6.3 L184.0 8.4 L181.0 10.5 L184.0 12.6 L181.0 14.7 L184.0 16.8 L181.0 18.9 L184.0 21.0 L181.0 23.1 L184.0 25.2 L181.0 27.3 L184.0 29.4 L181.0 31.5 L184.0 33.6 L181.0 35.7 L184.0 37.8 L181.0 39.9 L184.0 42.0 L181.0 44.1 L184.0 46.2 L181.0 48.3 L184.0 50.4 L181.0 52.5 L184.0 54.6 L181.0 56.7 L184.0 58.8 L184.0 57.0 L0.0 57.0 L3.0 54.9 L0.0 52.8 L3.0 50.7 L0.0 48.6 L3.0 46.5 L0.0 44.4 L3.0 42.3 L0.0 40.2 L3.0 38.1 L0.0 36.0 L3.0 33.9 L0.0 31.8 L3.0 29.7 L0.0 27.6 L3.0 25.5 L0.0 23.4 L3.0 21.3 L0.0 19.2 L3.0 17.1 L0.0 15.0 L3.0 12.9 L0.0 10.8 L3.0 8.7 L0.0 6.6 L3.0 4.5 L0.0 2.4 L3.0 0.3 L0.0 -1.8Z"/></clipPath></defs><g clip-path="url(#w3)"><rect width="184" height="57" fill="#213a5e"/><path d="M1.2 0L3.3 0L2.3 28.3Z" fill="#29466e" opacity="0.49"/><path d="M24.5 0L26.6 0L25.5 23.7Z" fill="#29466e" opacity="0.52"/><path d="M24.7 0L29.6 0L27.1 36.0Z" fill="#29466e" opacity="0.30"/><path d="M96.8 0L100.3 0L98.6 28.9Z" fill="#29466e" opacity="0.60"/><path d="M16.3 0L18.0 0L17.1 43.9Z" fill="#29466e" opacity="0.39"/><path d="M35.0 0L38.1 0L36.5 27.5Z" fill="#29466e" opacity="0.58"/><path d="M37.4 0L40.0 0L38.7 33.8Z" fill="#29466e" opacity="0.44"/><path d="M172.8 0L178.1 0L175.5 27.2Z" fill="#29466e" opacity="0.32"/><path d="M150.9 0L156.9 0L153.9 18.0Z" fill="#29466e" opacity="0.51"/><path d="M157.5 0L162.0 0L159.8 23.3Z" fill="#29466e" opacity="0.53"/><path d="M133.1 0L135.5 0L134.3 35.4Z" fill="#29466e" opacity="0.33"/><path d="M6.1 0L9.2 0L7.6 26.6Z" fill="#29466e" opacity="0.39"/><path d="M116.4 0L121.6 0L119.0 44.5Z" fill="#29466e" opacity="0.59"/><path d="M180.3 0L185.3 0L182.8 25.8Z" fill="#29466e" opacity="0.31"/><path d="M112.8 0L116.8 0L114.8 36.3Z" fill="#29466e" opacity="0.28"/><path d="M32.6 0L38.3 0L35.5 34.2Z" fill="#29466e" opacity="0.49"/><path d="M15.9 0L19.3 0L17.6 43.0Z" fill="#29466e" opacity="0.48"/><path d="M181.2 0L183.7 0L182.5 30.1Z" fill="#29466e" opacity="0.53"/><path d="M79.3 0L84.4 0L81.8 33.1Z" fill="#29466e" opacity="0.29"/><path d="M15.2 0L21.2 0L18.2 20.5Z" fill="#29466e" opacity="0.32"/><path d="M59.3 0L64.0 0L61.7 41.4Z" fill="#29466e" opacity="0.42"/><path d="M89.1 0L94.2 0L91.7 25.0Z" fill="#29466e" opacity="0.38"/><path d="M110.5 0L114.9 0L112.7 18.2Z" fill="#29466e" opacity="0.29"/><path d="M23.0 0L27.8 0L25.4 36.8Z" fill="#29466e" opacity="0.59"/><path d="M139.9 0L142.6 0L141.2 38.9Z" fill="#29466e" opacity="0.59"/><path d="M63.3 0L65.0 0L64.2 27.8Z" fill="#29466e" opacity="0.35"/><path d="M31.5 0L33.3 0L32.4 20.7Z" fill="#29466e" opacity="0.55"/><path d="M7.0 0L11.3 0L9.2 23.0Z" fill="#29466e" opacity="0.32"/><path d="M149.6 0L152.5 0L151.0 22.3Z" fill="#29466e" opacity="0.41"/><path d="M125.9 0L129.8 0L127.9 41.6Z" fill="#29466e" opacity="0.39"/><path d="M94.0 0L98.8 0L96.4 30.3Z" fill="#29466e" opacity="0.50"/><path d="M84.8 0L87.0 0L85.9 20.6Z" fill="#29466e" opacity="0.52"/><path d="M134.2 0L139.9 0L137.1 36.8Z" fill="#29466e" opacity="0.45"/><path d="M27.9 0L33.3 0L30.6 20.5Z" fill="#29466e" opacity="0.40"/><path d="M24.2 0L27.5 0L25.9 25.9Z" fill="#29466e" opacity="0.40"/><path d="M128.8 0L132.8 0L130.8 24.0Z" fill="#29466e" opacity="0.52"/><path d="M132.6 0L137.9 0L135.3 18.0Z" fill="#29466e" opacity="0.47"/><path d="M163.4 0L166.1 0L164.8 22.9Z" fill="#29466e" opacity="0.53"/><path d="M65.3 0L68.6 0L67.0 40.4Z" fill="#29466e" opacity="0.38"/><path d="M35.2 0L37.8 0L36.5 26.9Z" fill="#29466e" opacity="0.49"/><path d="M65.3 0L70.3 0L67.8 19.0Z" fill="#29466e" opacity="0.34"/><path d="M113.1 0L116.8 0L115.0 31.3Z" fill="#29466e" opacity="0.58"/><path d="M49.8 0L52.2 0L51.0 18.1Z" fill="#29466e" opacity="0.42"/><path d="M52.8 0L56.5 0L54.7 17.3Z" fill="#29466e" opacity="0.25"/><path d="M67.4 0L72.3 0L69.9 25.7Z" fill="#29466e" opacity="0.57"/><path d="M0 57 L0.0 40.2 L0.7 39.8 L1.4 40.7 L2.1 39.4 L2.8 40.3 L3.5 40.8 L4.2 40.1 L4.9 39.6 L5.6 39.0 L6.3 40.2 L7.0 39.3 L7.7 39.7 L8.4 40.1 L9.1 41.1 L9.8 40.4 L10.5 40.0 L11.2 40.9 L11.9 39.5 L12.6 39.7 L13.3 40.4 L14.0 40.1 L14.7 39.3 L15.4 39.8 L16.1 40.8 L16.8 39.4 L17.5 40.5 L18.2 38.9 L18.9 41.1 L19.6 40.4 L20.3 39.6 L21.0 41.2 L21.7 40.7 L22.4 38.9 L23.1 39.4 L23.8 40.0 L24.5 41.2 L25.2 39.1 L25.9 38.9 L26.6 39.6 L27.3 38.9 L28.0 39.8 L28.7 40.1 L29.4 39.9 L30.1 39.1 L30.8 38.9 L31.5 40.7 L32.2 39.9 L32.9 40.0 L33.6 39.9 L34.3 40.4 L35.0 41.0 L35.7 40.8 L36.4 40.5 L37.1 39.6 L37.8 39.2 L38.5 39.0 L39.2 40.9 L39.9 38.9 L40.6 40.2 L41.3 41.0 L42.0 39.6 L42.7 39.7 L43.4 39.8 L44.1 41.1 L44.8 40.4 L45.5 40.8 L46.2 38.9 L46.9 40.6 L47.6 39.9 L48.3 39.8 L49.0 40.8 L49.7 40.6 L50.4 41.0 L51.1 40.6 L51.8 41.0 L52.5 39.8 L53.2 40.1 L53.9 40.7 L54.6 39.9 L55.3 39.1 L56.0 40.2 L56.7 40.9 L57.4 40.9 L58.1 39.1 L58.8 39.7 L59.5 39.3 L60.2 39.6 L60.9 41.1 L61.6 39.8 L62.3 39.6 L63.0 39.5 L63.7 39.9 L64.4 40.4 L65.1 39.6 L65.8 39.2 L66.5 39.3 L67.2 39.4 L67.9 41.0 L68.6 39.2 L69.3 40.6 L70.0 39.1 L70.7 40.7 L71.4 39.4 L72.1 40.7 L72.8 39.8 L73.5 39.0 L74.2 39.0 L74.9 40.7 L75.6 40.1 L76.3 40.0 L77.0 39.6 L77.7 40.5 L78.4 40.0 L79.1 38.9 L79.8 40.2 L80.5 39.6 L81.2 40.8 L81.9 40.1 L82.6 40.7 L83.3 39.1 L84.0 40.5 L84.7 40.3 L85.4 40.8 L86.1 40.9 L86.8 40.1 L87.5 40.2 L88.2 40.6 L88.9 39.4 L89.6 40.1 L90.3 40.7 L91.0 40.2 L91.7 40.1 L92.4 40.9 L93.1 41.1 L93.8 39.4 L94.5 39.0 L95.2 40.3 L95.9 39.2 L96.6 41.1 L97.3 39.9 L98.0 40.1 L98.7 40.8 L99.4 40.9 L100.1 39.1 L100.8 39.9 L101.5 39.2 L102.2 39.9 L102.9 39.1 L103.6 40.9 L104.3 39.7 L105.0 39.7 L105.7 41.0 L106.4 40.8 L107.1 39.6 L107.8 40.0 L108.5 40.4 L109.2 39.3 L109.9 39.1 L110.6 40.9 L111.3 39.2 L112.0 40.5 L112.7 40.6 L113.4 40.2 L114.1 39.6 L114.8 40.9 L115.5 40.7 L116.2 39.0 L116.9 41.0 L117.6 40.3 L118.3 39.5 L119.0 39.2 L119.7 39.0 L120.4 40.7 L121.1 40.8 L121.8 39.6 L122.5 39.2 L123.2 39.0 L123.9 39.8 L124.6 39.5 L125.3 38.9 L126.0 39.5 L126.7 40.8 L127.4 39.0 L128.1 39.8 L128.8 40.0 L129.5 39.2 L130.2 38.9 L130.9 39.0 L131.6 39.1 L132.3 41.1 L133.0 40.9 L133.7 40.5 L134.4 41.0 L135.1 39.6 L135.8 39.4 L136.5 40.9 L137.2 40.3 L137.9 41.0 L138.6 39.7 L139.3 39.8 L140.0 40.5 L140.7 40.9 L141.4 39.2 L142.1 39.4 L142.8 38.8 L143.5 40.1 L144.2 41.0 L144.9 40.2 L145.6 39.2 L146.3 40.5 L147.0 40.4 L147.7 39.1 L148.4 41.0 L149.1 40.4 L149.8 40.0 L150.5 39.6 L151.2 39.2 L151.9 39.9 L152.6 39.7 L153.3 39.4 L154.0 40.4 L154.7 40.4 L155.4 41.1 L156.1 41.1 L156.8 39.9 L157.5 40.5 L158.2 39.7 L158.9 39.8 L159.6 40.2 L160.3 41.2 L161.0 38.9 L161.7 39.9 L162.4 39.6 L163.1 40.7 L163.8 41.1 L164.5 39.9 L165.2 39.0 L165.9 40.2 L166.6 40.2 L167.3 40.4 L168.0 40.7 L168.7 39.9 L169.4 40.1 L170.1 40.6 L170.8 38.9 L171.5 39.4 L172.2 40.5 L172.9 41.1 L173.6 41.1 L174.3 39.5 L175.0 41.1 L175.7 39.5 L176.4 39.9 L177.1 39.2 L177.8 40.2 L178.5 39.7 L179.2 40.4 L179.9 41.1 L180.6 39.1 L181.3 40.4 L182.0 40.2 L182.7 39.5 L183.4 38.9 L184 57Z" fill="#5f7da6"/></g></svg>
<div class="t" style="left:227.5px;top:293.14px;font-size:8.1px;color:#b8b8b8;font-weight:normal;letter-spacing:0px;">116 items</div>
<div class="a" style="left:348px;top:28px;width:388px;height:20px;background:#1f1f1f;"></div>
<div class="a" style="left:348px;top:48px;width:388px;height:1px;background:#111;"></div>
<div class="a" style="left:348px;top:49px;width:388px;height:9px;background:#1a1a1a;"></div>
<div class="a" style="left:348px;top:58px;width:388px;height:219px;background:#000;"></div>
<div class="a" style="left:367px;top:58px;width:1px;height:219px;background:#1e1e1e;"></div>
<div class="a" style="left:352px;top:63.2px;width:12px;height:10.5px;background:transparent;border:1px solid #303030;border-radius:1.5px"></div>
<div class="a" style="left:352px;top:84.5px;width:12px;height:10.5px;background:transparent;border:1px solid #303030;border-radius:1.5px"></div>
<div class="a" style="left:352px;top:105.80000000000001px;width:12px;height:10.5px;background:transparent;border:1px solid #303030;border-radius:1.5px"></div>
<div class="a" style="left:352px;top:127.10000000000001px;width:12px;height:10.5px;background:transparent;border:1px solid #303030;border-radius:1.5px"></div>
<div class="a" style="left:352px;top:148.4px;width:12px;height:10.5px;background:transparent;border:1px solid #303030;border-radius:1.5px"></div>
<div class="a" style="left:352px;top:169.7px;width:12px;height:10.5px;background:transparent;border:1px solid #303030;border-radius:1.5px"></div>
<div class="a" style="left:352px;top:191.0px;width:12px;height:10.5px;background:transparent;border:1px solid #303030;border-radius:1.5px"></div>
<div class="a" style="left:352px;top:212.3px;width:12px;height:10.5px;background:transparent;border:1px solid #303030;border-radius:1.5px"></div>
<div class="a" style="left:352px;top:233.60000000000002px;width:12px;height:10.5px;background:transparent;border:1px solid #303030;border-radius:1.5px"></div>
<div class="a" style="left:352px;top:254.90000000000003px;width:12px;height:10.5px;background:transparent;border:1px solid #303030;border-radius:1.5px"></div>
<div class="a" style="left:352px;top:276.2px;width:12px;height:0.8000000000000114px;background:transparent;border:1px solid #303030;border-radius:1.5px;border-bottom:none"></div>
<div class="a" style="left:348px;top:277px;width:388px;height:9px;background:#191919;"></div>
<div class="a" style="left:348px;top:286px;width:388px;height:1px;background:#111;"></div>
<div class="a" style="left:348px;top:287px;width:388px;height:20px;background:#202020;"></div>
<div class="a" style="left:736px;top:28px;width:1px;height:279px;background:#111;"></div>
<div class="t" style="left:356.4px;top:34.20px;font-size:8.5px;color:#aaaaaa;font-weight:normal;letter-spacing:0px;">1280 x 720 | 60 fps, Stereo</div>
<svg style="left:485.5px;top:35px;" width="7" height="9" viewBox="0 0 7 9"><path d="M0.5 3h2l3.5-2.8v8.6L2.5 6h-2z" fill="#9a9a9a"/></svg>
<div class="t" style="left:504.1px;top:34.60px;font-size:9.1px;color:#b4b4b4;font-weight:normal;letter-spacing:0px;">Air_to_the_Throne</div>
<div class="t" style="left:648.6px;top:33.16px;font-size:9.5px;color:#c8c8c8;font-weight:normal;letter-spacing:0px;">85%</div>
<svg style="left:672.5px;top:36px;" width="6" height="4" viewBox="0 0 6 4"><path d="M.5 .5l2.5 2.5 2.5-2.5" stroke="#6a6a6a" stroke-width="1" fill="none"/></svg>
<div class="t" style="left:694.6px;top:33.16px;font-size:9.5px;color:#c8c8c8;font-weight:normal;letter-spacing:0px;">View</div>
<svg style="left:720.2px;top:36px;" width="6" height="4" viewBox="0 0 6 4"><path d="M.5 .5l2.5 2.5 2.5-2.5" stroke="#6a6a6a" stroke-width="1" fill="none"/></svg>
<svg style="left:357px;top:291px;" width="13" height="12" viewBox="0 0 13 12"><rect x="1" y="1.5" width="11" height="9" fill="none" stroke="#8a8a8a" stroke-width="1.2" stroke-dasharray="2 .8"/><path d="M4.5 6h4" stroke="#9a9a9a" stroke-width="1"/></svg>
<svg style="left:373.5px;top:295.5px;" width="6" height="4" viewBox="0 0 6 4"><path d="M.7 .7l2.3 2.3 2.3-2.3" stroke="#e0e0e0" stroke-width="1.3" fill="none"/></svg>
<svg style="left:391px;top:292px;" width="13" height="11" viewBox="0 0 13 11"><path d="M4.5 3.5l7.5 7.5" stroke="#9a9a9a" stroke-width="1.6"/><path d="M3 .5v3M1.5 2h3M10 .5v2.4M8.8 1.7h2.4M1 8v2.4M-.2 9.2h2.4" stroke="#8a8a8a" stroke-width=".8"/></svg>
<svg style="left:406.5px;top:296px;" width="5" height="3" viewBox="0 0 5 3"><path d="M.3 .3l2.2 2.2 2.2-2.2" stroke="#6a6a6a" stroke-width=".9" fill="none"/></svg>
<svg style="left:422.5px;top:292px;" width="13" height="11" viewBox="0 0 13 11"><path d="M2.3 10.2A5.5 5.5 0 1 1 10.7 10.2" fill="none" stroke="#9a9a9a" stroke-width="1.1"/><path d="M6.5 6.8l2.7-2.9" stroke="#9a9a9a" stroke-width="1.4"/></svg>
<svg style="left:437.8px;top:296px;" width="5" height="3" viewBox="0 0 5 3"><path d="M.3 .3l2.2 2.2 2.2-2.2" stroke="#6a6a6a" stroke-width=".9" fill="none"/></svg>
<svg style="left:474.5px;top:293.3px;" width="7" height="7.5" viewBox="0 0 7 7.5"><path d="M0 0v7.3l6.6-3.65z" fill="#a8a8a8"/></svg>
<div class="t" style="left:484.8px;top:289.68px;font-size:15.5px;letter-spacing:0.2px;color:#4c4c4c">00:00:<span style="color:#cfcfcf">45:01</span></div>
<div class="a" style="left:589.5px;top:288px;width:5.4px;height:18.5px;background:#2e2e2e;"></div>
<div class="a" style="left:598.6px;top:288px;width:5.5px;height:18.5px;background:#2e2e2e;"></div>
<svg style="left:720px;top:292px;" width="10" height="10" viewBox="0 0 10 10"><rect x=".5" y=".5" width="9" height="9" fill="none" stroke="#4a4a4a" stroke-width="1"/><path d="M2 8l6-6" stroke="#9a9a9a" stroke-width=".9" fill="none"/><path d="M5.5 1h3.5v3.5zM1 5.5V9h3.5z" fill="#b0b0b0"/></svg>
<div class="a" style="left:737px;top:28px;width:285px;height:279px;background:#1f1f1f;"></div>
<div class="a" style="left:737px;top:48px;width:285px;height:1px;background:#111;"></div>
<div class="a" style="left:737px;top:286px;width:285px;height:1px;background:#141414;"></div>
<div class="t" style="left:811.6px;top:159.83px;font-size:16.5px;color:#686868;font-weight:normal;letter-spacing:0px;">Nothing to Inspect</div>
<div class="a" style="left:0px;top:307px;width:1022px;height:1px;background:#111;"></div>
<div class="a" style="left:0px;top:308px;width:1022px;height:21px;background:#303030;"></div>
<div class="a" style="left:0px;top:308px;width:66px;height:21px;background:#313131;"></div>
<div class="a" style="left:66px;top:308px;width:1px;height:21px;background:#1f1f1f;"></div>
<div class="a" style="left:0px;top:329px;width:1022px;height:1px;background:#141414;"></div>
<div class="t" style="left:21.6px;top:314.56px;font-size:9.5px;color:#7c7c7c;font-weight:normal;letter-spacing:0px;">Index</div>
<svg style="left:75px;top:312px;" width="13" height="13" viewBox="0 0 13 13"><path d="M3 6.2V1a.5.5 0 0 1 .5-.5h6.8a.5.5 0 0 1 .5.5v4.6a.5.5 0 0 1-.5.5H3" fill="none" stroke="#666" stroke-width="1"/><path d="M3 6v2.2" stroke="#666" stroke-width="1"/><rect x="0" y="8" width="12.8" height="4.8" fill="#5e5e5e"/></svg>
<svg style="left:96.5px;top:312px;" width="13" height="13" viewBox="0 0 13 13"><rect x="2.6" y=".6" width="7.8" height="5.2" rx="1" fill="none" stroke="#666" stroke-width="1"/><path d="M6.5 6v4.5M4.6 8.6l1.9 1.9 1.9-1.9" stroke="#666" stroke-width="1.1" fill="none"/><rect x="0" y="8" width="3" height="4.8" fill="#5e5e5e"/><rect x="9.8" y="8" width="3" height="4.8" fill="#5e5e5e"/></svg>
<svg style="left:118px;top:312px;" width="13" height="13" viewBox="0 0 13 13"><rect x="2.2" y=".6" width="8" height="5.2" rx="1" fill="none" stroke="#666" stroke-width="1"/><path d="M9.8 6v4.5M8 8.7l1.8 1.8 1.8-1.8" stroke="#666" stroke-width="1.1" fill="none"/><rect x="0" y="8" width="6.7" height="4.8" fill="#5e5e5e"/></svg>
<svg style="left:139px;top:312px;" width="13" height="13" viewBox="0 0 13 13"><rect x="2.6" y=".6" width="8.2" height="5.6" rx="1.4" fill="none" stroke="#666" stroke-width="1"/><rect x="0" y="8" width="12.8" height="5" fill="#4a4a4a"/><rect x="3" y="8" width="6.8" height="5" fill="#6a6a6a"/></svg>
<svg style="left:155px;top:317.3px;" width="6" height="4" viewBox="0 0 6 4"><path d="M.7 .7l2 2 2-2" stroke="#e0e0e0" stroke-width="1.3" fill="none"/></svg>
<svg style="left:180.5px;top:312.5px;" width="8" height="12" viewBox="0 0 8 12"><path d="M.5 .5l6.5 6.3-3 .2 1.8 3.8-1.2.6-1.8-3.8L.5 9.6z" fill="#6e6e6e"/></svg>
<svg style="left:193.3px;top:317.3px;" width="6" height="4" viewBox="0 0 6 4"><path d="M.7 .7l2 2 2-2" stroke="#e0e0e0" stroke-width="1.3" fill="none"/></svg>
<svg style="left:384.5px;top:315px;" width="5" height="8" viewBox="0 0 5 8"><path d="M4 .5L1 3.8 4 7" stroke="#6a6a6a" stroke-width="1" fill="none"/></svg>
<div class="t" style="left:462.4px;top:314.55px;font-size:8.8px;color:#c8c8c8;font-weight:normal;letter-spacing:0px;">First Week</div>
<div class="t" style="left:519.7px;top:313.96px;font-size:9.5px;color:#c4c4c4;font-weight:normal;letter-spacing:0px;">01:03:01</div>
<svg style="left:634px;top:315px;" width="5" height="8" viewBox="0 0 5 8"><path d="M1 .5L4 3.8 1 7" stroke="#3e3e3e" stroke-width="1" fill="none"/></svg>
<svg style="left:871.5px;top:312.5px;" width="14" height="12" viewBox="0 0 14 12"><rect x=".5" y="3.5" width="5.5" height="4.4" rx=".8" fill="#8a8a8a"/><rect x="8.4" y="3.5" width="5.1" height="4.4" rx=".8" fill="#8a8a8a"/><path d="M7 .5v10.5" stroke="#cfcfcf" stroke-width="1.1"/></svg>
<svg style="left:911.5px;top:313px;" width="11" height="10" viewBox="0 0 11 10"><path d="M1 8V5.5a4.5 4.5 0 0 1 9 0V8" fill="none" stroke="#c8c8c8" stroke-width="1.1"/><rect x="1" y="5.6" width="1.6" height="3.6" rx=".6" fill="#d8d8d8"/><rect x="8.4" y="5.6" width="1.6" height="3.6" rx=".6" fill="#d8d8d8"/></svg>
<svg style="left:929.5px;top:313px;" width="14" height="11" viewBox="0 0 14 11"><rect x=".2" y="3.4" width="6" height="4.2" rx=".8" fill="#7e7e7e"/><rect x="7" y="3.4" width="6" height="4.2" rx=".8" fill="#7e7e7e"/><g fill="#7a7a7a"><rect x="3.8" y=".8" width=".9" height=".9"/><rect x="6.1" y=".3" width=".9" height=".9"/><rect x="8.4" y=".8" width=".9" height=".9"/><rect x="3.8" y="9.3" width=".9" height=".9"/><rect x="6.1" y="9.8" width=".9" height=".9"/><rect x="8.4" y="9.3" width=".9" height=".9"/></g></svg>
<svg style="left:956.5px;top:314px;" width="10" height="10" viewBox="0 0 10 10"><rect x=".5" y=".5" width="9" height="7.5" rx=".8" fill="none" stroke="#555" stroke-width="1"/><path d="M2.3 .5v7.5M7.7 .5v7.5M.5 3h1.8M.5 5.5h1.8M7.7 3h1.8M7.7 5.5h1.8M2.3 4.25h5.4" stroke="#555" stroke-width="1"/><path d="M4 8.3h2L5 9.4z" fill="#555"/></svg>
<div class="a" style="left:976px;top:308px;width:1px;height:21px;background:#232323;"></div>
<svg style="left:986.5px;top:313.5px;" width="12" height="10" viewBox="0 0 12 10"><rect x="2.5" y=".5" width="8.7" height="5.6" fill="#d8d8d8" stroke="#cfcfcf" stroke-width="1"/><rect x=".5" y="3" width="8.7" height="6.6" fill="#2f2f2f" stroke="#c8c8c8" stroke-width="1"/><rect x="2" y="4" width="7" height="2" fill="#8c8c8c"/></svg>
<svg style="left:1006.5px;top:313.5px;" width="10" height="10" viewBox="0 0 10 10"><path d="M.6 .6v8.3L9.2 .6v8.3z" fill="none" stroke="#bdbdbd" stroke-width="1"/></svg>
<div class="a" style="left:0px;top:330px;width:1022px;height:259px;background:#1f1f1f;"></div>
<div class="a" style="left:621.5px;top:331px;width:241px;height:12px;background:#24212c;"></div>
<div class="a" style="left:621px;top:331px;width:242px;height:28px;background:#262626;border-radius:3px"></div>
<div class="a" style="left:621.5px;top:331px;width:241px;height:12px;background:#24212c;"></div>
<div class="a" style="left:760.5px;top:331px;width:15px;height:12px;background:#2e2e2e;"></div>
<div class="a" style="left:848px;top:331px;width:14.5px;height:12px;background:#2e2e2e;"></div>
<div class="a" style="left:2px;top:334px;width:1px;height:8px;background:#7a7a7a;"></div>
<div class="a" style="left:17px;top:335px;width:1px;height:6px;background:#3a3a3a;"></div>
<div class="a" style="left:31px;top:335px;width:1px;height:6px;background:#3a3a3a;"></div>
<div class="a" style="left:46px;top:335px;width:1px;height:6px;background:#3a3a3a;"></div>
<div class="a" style="left:61px;top:335px;width:1px;height:6px;background:#3a3a3a;"></div>
<div class="a" style="left:75px;top:335px;width:1px;height:6px;background:#3a3a3a;"></div>
<div class="a" style="left:90px;top:335px;width:1px;height:6px;background:#3a3a3a;"></div>
<div class="a" style="left:104px;top:335px;width:1px;height:6px;background:#3a3a3a;"></div>
<div class="a" style="left:119px;top:335px;width:1px;height:6px;background:#3a3a3a;"></div>
<div class="a" style="left:133px;top:335px;width:1px;height:6px;background:#3a3a3a;"></div>
<div class="a" style="left:148px;top:334px;width:1px;height:8px;background:#7a7a7a;"></div>
<div class="a" style="left:163px;top:335px;width:1px;height:6px;background:#3a3a3a;"></div>
<div class="a" style="left:177px;top:335px;width:1px;height:6px;background:#3a3a3a;"></div>
<div class="a" style="left:192px;top:335px;width:1px;height:6px;background:#3a3a3a;"></div>
<div class="a" style="left:206px;top:335px;width:1px;height:6px;background:#3a3a3a;"></div>
<div class="a" style="left:221px;top:335px;width:1px;height:6px;background:#3a3a3a;"></div>
<div class="a" style="left:235px;top:335px;width:1px;height:6px;background:#3a3a3a;"></div>
<div class="a" style="left:250px;top:335px;width:1px;height:6px;background:#3a3a3a;"></div>
<div class="a" style="left:265px;top:335px;width:1px;height:6px;background:#3a3a3a;"></div>
<div class="a" style="left:279px;top:335px;width:1px;height:6px;background:#3a3a3a;"></div>
<div class="a" style="left:294px;top:334px;width:1px;height:8px;background:#7a7a7a;"></div>
<div class="a" style="left:308px;top:335px;width:1px;height:6px;background:#3a3a3a;"></div>
<div class="a" style="left:323px;top:335px;width:1px;height:6px;background:#3a3a3a;"></div>
<div class="a" style="left:338px;top:335px;width:1px;height:6px;background:#3a3a3a;"></div>
<div class="a" style="left:352px;top:335px;width:1px;height:6px;background:#3a3a3a;"></div>
<div class="a" style="left:367px;top:335px;width:1px;height:6px;background:#3a3a3a;"></div>
<div class="a" style="left:381px;top:335px;width:1px;height:6px;background:#3a3a3a;"></div>
<div class="a" style="left:396px;top:335px;width:1px;height:6px;background:#3a3a3a;"></div>
<div class="a" style="left:410px;top:335px;width:1px;height:6px;background:#3a3a3a;"></div>
<div class="a" style="left:425px;top:335px;width:1px;height:6px;background:#3a3a3a;"></div>
<div class="a" style="left:440px;top:334px;width:1px;height:8px;background:#7a7a7a;"></div>
<div class="a" style="left:454px;top:335px;width:1px;height:6px;background:#3a3a3a;"></div>
<div class="a" style="left:469px;top:335px;width:1px;height:6px;background:#3a3a3a;"></div>
<div class="a" style="left:483px;top:335px;width:1px;height:6px;background:#3a3a3a;"></div>
<div class="a" style="left:498px;top:335px;width:1px;height:6px;background:#3a3a3a;"></div>
<div class="a" style="left:512px;top:335px;width:1px;height:6px;background:#3a3a3a;"></div>
<div class="a" style="left:527px;top:335px;width:1px;height:6px;background:#3a3a3a;"></div>
<div class="a" style="left:542px;top:335px;width:1px;height:6px;background:#3a3a3a;"></div>
<div class="a" style="left:556px;top:335px;width:1px;height:6px;background:#3a3a3a;"></div>
<div class="a" style="left:571px;top:335px;width:1px;height:6px;background:#3a3a3a;"></div>
<div class="a" style="left:585px;top:334px;width:1px;height:8px;background:#7a7a7a;"></div>
<div class="a" style="left:600px;top:335px;width:1px;height:6px;background:#3a3a3a;"></div>
<div class="a" style="left:615px;top:335px;width:1px;height:6px;background:#3a3a3a;"></div>
<div class="a" style="left:629px;top:335px;width:1px;height:6px;background:#3a3a3a;"></div>
<div class="a" style="left:644px;top:335px;width:1px;height:6px;background:#3a3a3a;"></div>
<div class="a" style="left:658px;top:335px;width:1px;height:6px;background:#3a3a3a;"></div>
<div class="a" style="left:673px;top:335px;width:1px;height:6px;background:#3a3a3a;"></div>
<div class="a" style="left:687px;top:335px;width:1px;height:6px;background:#3a3a3a;"></div>
<div class="a" style="left:702px;top:335px;width:1px;height:6px;background:#3a3a3a;"></div>
<div class="a" style="left:717px;top:335px;width:1px;height:6px;background:#3a3a3a;"></div>
<div class="a" style="left:731px;top:334px;width:1px;height:8px;background:#7a7a7a;"></div>
<div class="a" style="left:746px;top:335px;width:1px;height:6px;background:#3a3a3a;"></div>
<div class="a" style="left:760px;top:335px;width:1px;height:6px;background:#3a3a3a;"></div>
<div class="a" style="left:775px;top:335px;width:1px;height:6px;background:#3a3a3a;"></div>
<div class="a" style="left:790px;top:335px;width:1px;height:6px;background:#3a3a3a;"></div>
<div class="a" style="left:804px;top:335px;width:1px;height:6px;background:#3a3a3a;"></div>
<div class="a" style="left:819px;top:335px;width:1px;height:6px;background:#3a3a3a;"></div>
<div class="a" style="left:833px;top:335px;width:1px;height:6px;background:#3a3a3a;"></div>
<div class="a" style="left:848px;top:335px;width:1px;height:6px;background:#3a3a3a;"></div>
<div class="a" style="left:862px;top:335px;width:1px;height:6px;background:#3a3a3a;"></div>
<div class="a" style="left:877px;top:334px;width:1px;height:8px;background:#7a7a7a;"></div>
<div class="a" style="left:892px;top:335px;width:1px;height:6px;background:#3a3a3a;"></div>
<div class="a" style="left:906px;top:335px;width:1px;height:6px;background:#3a3a3a;"></div>
<div class="a" style="left:921px;top:335px;width:1px;height:6px;background:#3a3a3a;"></div>
<div class="a" style="left:935px;top:335px;width:1px;height:6px;background:#3a3a3a;"></div>
<div class="a" style="left:950px;top:335px;width:1px;height:6px;background:#3a3a3a;"></div>
<div class="a" style="left:964px;top:335px;width:1px;height:6px;background:#3a3a3a;"></div>
<div class="a" style="left:979px;top:335px;width:1px;height:6px;background:#3a3a3a;"></div>
<div class="a" style="left:994px;top:335px;width:1px;height:6px;background:#3a3a3a;"></div>
<div class="a" style="left:1008px;top:335px;width:1px;height:6px;background:#3a3a3a;"></div>
<div class="t" style="left:10px;top:334.51px;font-size:7.9px;color:#8a8a8a;font-weight:normal;letter-spacing:0.35px;">00:00:00:00</div>
<div class="t" style="left:155.8px;top:334.51px;font-size:7.9px;color:#8a8a8a;font-weight:normal;letter-spacing:0.35px;">00:00:10:00</div>
<div class="t" style="left:301.6px;top:334.51px;font-size:7.9px;color:#8a8a8a;font-weight:normal;letter-spacing:0.35px;">00:00:20:00</div>
<div class="t" style="left:447.40000000000003px;top:334.51px;font-size:7.9px;color:#8a8a8a;font-weight:normal;letter-spacing:0.35px;">00:00:30:00</div>
<div class="t" style="left:593.2px;top:334.51px;font-size:7.9px;color:#8a8a8a;font-weight:normal;letter-spacing:0.35px;">00:00:40:00</div>
<div class="t" style="left:739.0px;top:334.51px;font-size:7.9px;color:#8a8a8a;font-weight:normal;letter-spacing:0.35px;">00:00:50:00</div>
<div class="t" style="left:884.8000000000001px;top:334.51px;font-size:7.9px;color:#8a8a8a;font-weight:normal;letter-spacing:0.35px;">00:01:00:00</div>
<div class="a" style="left:622.2px;top:342.7px;width:138.4px;height:14.7px;background:#553a8c;border-radius:0 0 0 2px"></div>
<div class="a" style="left:775.4px;top:342.7px;width:72.5px;height:14.7px;background:#553a8c;"></div>
<div class="a" style="left:760.6px;top:342.7px;width:14.6px;height:14.7px;background:#6e6e6e;border-radius:0 0 2.5px 2.5px"></div>
<div class="a" style="left:848px;top:342.7px;width:14.2px;height:14.7px;background:#6e6e6e;border-radius:0 0 2.5px 2.5px"></div>
<div class="a" style="left:0px;top:428.5px;width:1022px;height:61px;background:#181818;"></div>
<div class="a" style="left:248.7px;top:364.5px;width:147.7px;height:62px;background:#3a3a3a;border-radius:4px"></div>
<div class="a" style="left:250px;top:371.6px;width:14.5px;height:54.099999999999966px;background:#6d6d6d;border-radius:2.5px"></div>
<svg style="left:252.95px;top:373.90000000000003px;" width="9" height="8" viewBox="0 0 9 8"><path d="M.3 .3L4.3 3.6 8.3 .3v7.2L4.3 4.2.3 7.5z" fill="#f0f0f0"/></svg>
<div class="a" style="left:264.5px;top:371.6px;width:116.9px;height:54.1px;background:#55398b;"></div>
<div class="a" style="left:381.4px;top:371.6px;width:13.600000000000023px;height:54.099999999999966px;background:#6d6d6d;border-radius:2.5px"></div>
<div class="t" style="left:267.5px;top:373.81px;font-size:7.9px;color:#cbbfea;font-weight:normal;letter-spacing:0px;">Teleferico - Basic Title</div>
<div class="a" style="left:3.2px;top:415.2px;width:122.3px;height:10.4px;background:#553a8c;border-radius:2.5px"></div>
<div class="t" style="left:6.0px;top:416.61px;font-size:7.9px;color:#d0c8ee;font-weight:normal;letter-spacing:-0.07px;">Traveling With Kids.net&nbsp; - Introv3</div>
<div class="a" style="left:141px;top:415.2px;width:52.099999999999994px;height:10.4px;background:#553a8c;border-radius:2.5px"></div>
<div class="t" style="left:143.8px;top:416.61px;font-size:7.9px;color:#d0c8ee;font-weight:normal;letter-spacing:-0.37px;">Week 1 - Fa...</div>
<div class="a" style="left:432.2px;top:415.2px;width:144.3px;height:10.4px;background:#553a8c;border-radius:2.5px"></div>
<div class="t" style="left:435.0px;top:416.61px;font-size:7.9px;color:#d0c8ee;font-weight:normal;letter-spacing:-0.07px;">Swings at the top - Basic Title</div>
<div class="a" style="left:3.4px;top:432.7px;width:116.1px;height:53.0px;background:#1d365b;"></div>
<svg style="left:3.4px;top:471.8px;overflow:hidden" width="116.1" height="13.899999999999977" viewBox="0 0 116.1 13.899999999999977"><path d="M0.0 13.9V12.0M2.0 13.9V7.8M3.3 13.9V9.6M4.9 13.9V8.6M6.8 13.9V12.3M7.8 13.9V7.3M9.4 13.9V7.8M10.4 13.9V9.9M12.2 13.9V11.4M14.4 13.9V6.9M15.4 13.9V12.7M17.1 13.9V6.7M18.5 13.9V11.5M20.0 13.9V12.7M21.3 13.9V10.0M22.9 13.9V11.4M24.2 13.9V11.4M25.7 13.9V11.0M26.7 13.9V7.3M28.4 13.9V8.6M29.6 13.9V6.3M31.7 13.9V12.1M33.1 13.9V8.1M34.9 13.9V6.7M36.4 13.9V7.4M38.2 13.9V10.9M39.9 13.9V7.0M41.9 13.9V9.5M43.6 13.9V12.7M44.9 13.9V7.6M46.4 13.9V11.8M48.1 13.9V8.2M49.9 13.9V10.4M51.4 13.9V9.5M53.4 13.9V9.4M54.8 13.9V9.6M55.9 13.9V12.6M57.7 13.9V6.4M59.4 13.9V10.3M60.6 13.9V9.6M62.8 13.9V7.8M64.5 13.9V7.2M65.7 13.9V9.5M67.9 13.9V9.1M69.4 13.9V11.1M71.1 13.9V6.5M72.1 13.9V7.7M74.1 13.9V7.0M76.0 13.9V7.5M77.6 13.9V9.2M79.1 13.9V12.5M81.1 13.9V9.1M82.4 13.9V9.5M84.0 13.9V10.5M85.4 13.9V9.3M87.1 13.9V8.8M88.7 13.9V12.7M90.0 13.9V11.7M91.7 13.9V7.2M93.6 13.9V7.6M95.6 13.9V11.2M97.6 13.9V8.4M98.7 13.9V12.8M99.7 13.9V7.9M101.0 13.9V12.2M102.8 13.9V10.6M103.9 13.9V11.8M105.5 13.9V11.8M106.8 13.9V8.2M108.4 13.9V10.8M109.9 13.9V12.7M111.4 13.9V10.1M112.6 13.9V12.2M114.7 13.9V9.5" stroke="#22406a" stroke-width="1" fill="none" opacity=".15"/></svg>
<svg style="left:3.4px;top:443px;overflow:hidden" width="116.1" height="28.80000000000001" viewBox="0 0 116.1 28.80000000000001"><defs><linearGradient id="uwv" x1="0" y1="0" x2="0" y2="1"><stop offset="0" stop-color="#22afcb"/><stop offset="1" stop-color="#1894ad"/></linearGradient><linearGradient id="beam" x1="0" y1="0" x2="0" y2="1"><stop offset="0" stop-color="#45efff"/><stop offset=".5" stop-color="#33cde6"/><stop offset="1" stop-color="#2cc0db"/></linearGradient><filter id="uwb" x="-50%" y="-50%" width="200%" height="200%"><feGaussianBlur stdDeviation="1.8"/></filter><filter id="uwb2" x="-50%" y="-50%" width="200%" height="200%"><feGaussianBlur stdDeviation="2.5"/></filter></defs><rect width="116.1" height="28.8" fill="url(#uwv)"/><g filter="url(#uwb2)"><path d="M2 -2 L10 -2 L10 30.8 L2 30.8Z" fill="#0e6f86" opacity=".7"/><path d="M26.5 -2 L34.5 -2 L34.5 30.8 L26.5 30.8Z" fill="#0e6f86" opacity=".7"/><path d="M51 -2 L59 -2 L59 30.8 L51 30.8Z" fill="#0e6f86" opacity=".7"/><path d="M79 -2 L87 -2 L87 30.8 L79 30.8Z" fill="#0e6f86" opacity=".7"/><path d="M102 -2 L110 -2 L110 30.8 L102 30.8Z" fill="#0e6f86" opacity=".7"/></g><g filter="url(#uwb)"><path d="M14.5 -3 L21.5 -3 L24.5 31.8 L17.5 31.8Z" fill="url(#beam)"/><path d="M38.0 -3 L45.0 -3 L44.0 31.8 L37.0 31.8Z" fill="url(#beam)"/><path d="M66.5 -3 L73.5 -3 L75.5 31.8 L68.5 31.8Z" fill="url(#beam)"/><path d="M90.0 -3 L97.0 -3 L98.0 31.8 L91.0 31.8Z" fill="url(#beam)"/></g></svg>
<div class="t" style="left:5.699999999999999px;top:433.91px;font-size:7.9px;color:#b9c8df;font-weight:normal;letter-spacing:-0.15px;">Underwater</div>
<div class="a" style="left:119.8px;top:432.7px;width:14.299999999999997px;height:53.0px;background:#6d6d6d;border-radius:2.5px"></div>
<svg style="left:122.64999999999999px;top:435.0px;" width="9" height="8" viewBox="0 0 9 8"><path d="M.3 .3L4.3 3.6 8.3 .3v7.2L4.3 4.2.3 7.5z" fill="#f0f0f0"/></svg>
<div class="a" style="left:134.6px;top:432.7px;width:62.70000000000002px;height:53.0px;background:#1d365b;"></div>
<svg style="left:134.6px;top:471.8px;overflow:hidden" width="62.70000000000002" height="13.899999999999977" viewBox="0 0 62.70000000000002 13.899999999999977"><path d="M0.0 13.9V6.5M2.1 13.9V12.5M3.2 13.9V7.3M5.1 13.9V8.4M6.5 13.9V8.9M8.2 13.9V9.0M9.4 13.9V10.0M10.9 13.9V8.1M13.1 13.9V6.6M14.7 13.9V9.9M16.1 13.9V12.7M17.1 13.9V9.8M18.5 13.9V10.4M20.5 13.9V9.4M22.2 13.9V11.3M23.2 13.9V10.7M24.4 13.9V9.5M26.6 13.9V8.4M27.8 13.9V7.0M29.8 13.9V8.0M31.9 13.9V7.8M33.8 13.9V10.5M36.0 13.9V6.5M37.2 13.9V7.9M39.0 13.9V9.8M40.7 13.9V9.6M42.8 13.9V9.6M44.8 13.9V10.5M46.8 13.9V6.9M48.4 13.9V9.1M50.5 13.9V8.1M52.1 13.9V11.4M53.5 13.9V8.3M54.7 13.9V6.9M56.0 13.9V6.8M57.4 13.9V6.5M59.2 13.9V9.5M60.8 13.9V8.6" stroke="#22406a" stroke-width="1" fill="none" opacity=".15"/></svg>
<svg style="left:134.6px;top:443px;overflow:hidden" width="62.70000000000002" height="28.80000000000001" viewBox="0 0 62.70000000000002 28.80000000000001"><rect width="62.7" height="28.8" fill="#202018"/><rect y="0" width="62.7" height="1.2" fill="#121210"/><rect y="1.5" width="62.7" height="7.5" fill="#2a2a20"/><rect y="9" width="62.7" height="6" fill="#0e0e09"/><rect y="15" width="62.7" height="9" fill="#26261d"/><rect y="24" width="62.7" height="4.8" fill="#17170f"/></svg>
<div class="t" style="left:136.9px;top:433.91px;font-size:7.9px;color:#b9c8df;font-weight:normal;letter-spacing:-0.15px;">Lines</div>
<div class="a" style="left:197.6px;top:432.7px;width:13.400000000000006px;height:53.0px;background:#6d6d6d;border-radius:2.5px"></div>
<div class="a" style="left:211.5px;top:432.7px;width:220.0px;height:53.0px;background:#1d365b;"></div>
<svg style="left:211.5px;top:471.8px;overflow:hidden" width="220.0" height="13.899999999999977" viewBox="0 0 220.0 13.899999999999977"><path d="M0.0 13.9V11.3M1.7 13.9V10.4M3.4 13.9V8.7M4.5 13.9V12.8M6.5 13.9V11.2M7.7 13.9V6.3M9.3 13.9V7.3M10.9 13.9V8.7M12.1 13.9V8.7M14.1 13.9V9.4M16.0 13.9V8.4M17.1 13.9V7.9M18.8 13.9V10.9M19.8 13.9V7.1M21.4 13.9V8.1M23.4 13.9V8.2M25.5 13.9V10.3M27.5 13.9V9.9M29.6 13.9V7.1M30.7 13.9V12.0M32.0 13.9V6.5M33.5 13.9V8.7M34.9 13.9V9.5M36.3 13.9V10.6M38.1 13.9V9.0M40.1 13.9V8.4M42.3 13.9V7.2M44.4 13.9V8.4M45.6 13.9V7.2M47.8 13.9V6.9M49.5 13.9V8.2M50.7 13.9V7.4M52.4 13.9V11.0M53.5 13.9V7.2M55.7 13.9V12.3M57.6 13.9V10.2M58.8 13.9V10.9M60.7 13.9V7.1M61.8 13.9V8.8M62.9 13.9V8.1M64.3 13.9V7.0M66.4 13.9V9.5M68.6 13.9V10.8M69.7 13.9V8.9M70.8 13.9V11.6M72.2 13.9V8.8M73.4 13.9V12.6M75.5 13.9V10.8M77.6 13.9V6.9M79.1 13.9V9.8M80.7 13.9V8.6M82.4 13.9V9.2M84.2 13.9V6.6M85.8 13.9V10.0M87.6 13.9V11.3M89.0 13.9V6.4M90.6 13.9V9.3M91.6 13.9V10.1M93.3 13.9V12.8M95.1 13.9V8.7M96.1 13.9V8.7M97.7 13.9V8.4M99.1 13.9V8.2M101.0 13.9V12.8M102.1 13.9V8.4M104.2 13.9V11.2M105.8 13.9V9.0M107.2 13.9V10.5M108.5 13.9V10.4M110.3 13.9V10.9M111.7 13.9V7.8M112.7 13.9V9.1M114.6 13.9V10.8M115.9 13.9V7.6M117.2 13.9V11.7M118.7 13.9V8.3M119.8 13.9V10.8M121.2 13.9V7.4M122.8 13.9V7.2M124.0 13.9V10.7M125.7 13.9V7.0M127.3 13.9V11.4M128.4 13.9V9.4M129.7 13.9V7.5M131.7 13.9V11.7M133.0 13.9V7.5M134.8 13.9V7.5M136.2 13.9V12.0M137.5 13.9V7.6M138.9 13.9V10.6M140.4 13.9V10.1M141.8 13.9V6.8M143.0 13.9V12.9M145.2 13.9V7.1M147.3 13.9V10.0M149.5 13.9V6.7M150.8 13.9V7.9M152.8 13.9V8.5M154.4 13.9V11.0M155.8 13.9V11.4M156.9 13.9V9.0M158.2 13.9V7.5M159.3 13.9V6.9M161.1 13.9V6.8M163.2 13.9V6.9M164.9 13.9V12.8M166.8 13.9V11.8M168.1 13.9V8.5M169.8 13.9V10.2M171.9 13.9V8.8M173.3 13.9V11.2M175.3 13.9V9.7M177.3 13.9V10.6M178.5 13.9V9.3M180.5 13.9V11.8M182.4 13.9V6.8M184.4 13.9V7.4M185.4 13.9V8.7M187.4 13.9V12.6M188.8 13.9V11.1M190.4 13.9V10.1M192.0 13.9V7.7M193.0 13.9V12.5M194.1 13.9V12.1M195.2 13.9V6.4M197.2 13.9V12.3M198.8 13.9V10.8M200.2 13.9V10.6M202.0 13.9V9.0M203.4 13.9V11.6M204.8 13.9V12.1M206.5 13.9V8.1M207.9 13.9V12.4M209.2 13.9V10.4M210.9 13.9V7.7M212.3 13.9V7.6M214.1 13.9V10.0M215.5 13.9V9.6M217.4 13.9V10.1" stroke="#22406a" stroke-width="1" fill="none" opacity=".15"/></svg>
<svg style="left:211.5px;top:443px;overflow:hidden" width="220.0" height="28.80000000000001" viewBox="0 0 220.0 28.80000000000001"><defs><linearGradient id="sky1" x1="0" y1="0" x2="0" y2="1"><stop offset="0" stop-color="#d8d2d6"/><stop offset=".6" stop-color="#c2c4ca"/><stop offset="1" stop-color="#aeb4be"/></linearGradient><filter id="hb" x="-5%" y="-5%" width="110%" height="110%"><feGaussianBlur stdDeviation=".45"/></filter></defs><g filter="url(#hb)"><rect width="220" height="28.8" fill="url(#sky1)"/><ellipse cx="52.4" cy="10.3" rx="5.2" ry="1.5" fill="#cacace" opacity=".35"/><ellipse cx="127.8" cy="11.3" rx="8.5" ry="1.4" fill="#cacace" opacity=".35"/><ellipse cx="51.6" cy="17.2" rx="5.8" ry="1.8" fill="#b4b8c0" opacity=".35"/><ellipse cx="87.4" cy="15.2" rx="4.4" ry="1.0" fill="#cacace" opacity=".35"/><ellipse cx="85.8" cy="2.2" rx="7.7" ry="1.0" fill="#cacace" opacity=".35"/><ellipse cx="9.4" cy="13.9" rx="7.9" ry="1.1" fill="#cacace" opacity=".35"/><ellipse cx="158.1" cy="15.4" rx="7.3" ry="1.9" fill="#b4b8c0" opacity=".35"/><ellipse cx="160.2" cy="10.8" rx="8.8" ry="1.0" fill="#b4b8c0" opacity=".35"/><ellipse cx="21.4" cy="4.1" rx="4.3" ry="2.0" fill="#b4b8c0" opacity=".35"/><ellipse cx="171.4" cy="15.1" rx="5.5" ry="1.8" fill="#cacace" opacity=".35"/><ellipse cx="77.2" cy="10.9" rx="6.5" ry="1.9" fill="#cacace" opacity=".35"/><ellipse cx="201.5" cy="2.4" rx="4.7" ry="1.5" fill="#cacace" opacity=".35"/><ellipse cx="35.9" cy="15.2" rx="8.8" ry="1.9" fill="#cacace" opacity=".35"/><ellipse cx="22.9" cy="12.0" rx="6.8" ry="2.0" fill="#b4b8c0" opacity=".35"/><ellipse cx="62.7" cy="3.0" rx="8.1" ry="2.0" fill="#e2dee2" opacity=".35"/><ellipse cx="75.7" cy="3.0" rx="8.4" ry="0.8" fill="#b4b8c0" opacity=".35"/><ellipse cx="169.1" cy="15.3" rx="3.3" ry="1.5" fill="#e2dee2" opacity=".35"/><ellipse cx="83.1" cy="11.0" rx="6.3" ry="1.9" fill="#b4b8c0" opacity=".35"/><ellipse cx="111.2" cy="17.3" rx="4.9" ry="0.9" fill="#cacace" opacity=".35"/><ellipse cx="117.8" cy="16.5" rx="8.8" ry="1.1" fill="#b4b8c0" opacity=".35"/><ellipse cx="34.4" cy="2.6" rx="8.2" ry="1.2" fill="#e2dee2" opacity=".35"/><ellipse cx="197.3" cy="7.8" rx="5.8" ry="1.4" fill="#cacace" opacity=".35"/><ellipse cx="190.7" cy="12.4" rx="3.6" ry="2.0" fill="#cacace" opacity=".35"/><ellipse cx="59.7" cy="11.7" rx="7.3" ry="1.9" fill="#b4b8c0" opacity=".35"/><ellipse cx="215.1" cy="10.0" rx="6.3" ry="0.8" fill="#b4b8c0" opacity=".35"/><ellipse cx="217.2" cy="6.8" rx="5.3" ry="1.5" fill="#e2dee2" opacity=".35"/><ellipse cx="13.2" cy="11.6" rx="5.8" ry="1.6" fill="#b4b8c0" opacity=".35"/><ellipse cx="134.0" cy="6.3" rx="5.9" ry="1.5" fill="#cacace" opacity=".35"/><ellipse cx="4.7" cy="7.6" rx="6.8" ry="1.2" fill="#cacace" opacity=".35"/><ellipse cx="70.4" cy="7.6" rx="4.9" ry="1.2" fill="#cacace" opacity=".35"/><ellipse cx="58.1" cy="14.0" rx="3.6" ry="1.8" fill="#cacace" opacity=".35"/><ellipse cx="150.4" cy="4.0" rx="6.0" ry="1.6" fill="#b4b8c0" opacity=".35"/><ellipse cx="52.5" cy="4.9" rx="5.6" ry="1.6" fill="#e2dee2" opacity=".35"/><ellipse cx="132.2" cy="16.5" rx="7.0" ry="1.1" fill="#e2dee2" opacity=".35"/><ellipse cx="17.6" cy="13.3" rx="4.3" ry="1.5" fill="#b4b8c0" opacity=".35"/><ellipse cx="49.5" cy="3.8" rx="6.2" ry="1.0" fill="#cacace" opacity=".35"/><ellipse cx="40.4" cy="6.3" rx="7.8" ry="1.6" fill="#cacace" opacity=".35"/><ellipse cx="76.0" cy="4.0" rx="4.8" ry="1.8" fill="#b4b8c0" opacity=".35"/><ellipse cx="102.2" cy="11.7" rx="4.7" ry="1.5" fill="#e2dee2" opacity=".35"/><ellipse cx="202.5" cy="4.4" rx="3.0" ry="1.9" fill="#cacace" opacity=".35"/><rect x="0" y="24" width="220" height="5" fill="#8c7a44"/><path d="M5 29L12 22.5L31 11L33 9.5L37 9.5L37.5 16.5L50 19.5L63 22L63 29Z" fill="#937e44"/><path d="M37.5 16.5L50 19.5L63 22L63 29L40 29Z" fill="#7a6a45"/><path d="M31 11L33 9.5L37 9.5L37.5 16.5L33 15Z" fill="#4f4431"/><path d="M52 29L57 22L83 12L86 9.5L88.5 9.5L89 16L112 22L112 29Z" fill="#998546"/><path d="M89 16L112 22L112 29L92 29Z" fill="#7b6b46"/><path d="M83 12L86 9.5L88.5 9.5L89 14L85 14Z" fill="#54473a"/><path d="M105 29L113 27L140.5 16.7L167 24L167 29Z" fill="#8d7b45"/><path d="M160 29L161 27L190.5 12.8L219 21L220 29Z" fill="#968245"/><path d="M188 14L190.5 12.3L192 13.5L191 17Z" fill="#4f4431"/><path d="M136 15v-3M135 12.3h2M184 13v-3M183 10.3h2" stroke="#555" stroke-width=".6"/><clipPath id="hclip"><path d="M5 29L12 22.5L31 11L33 9.5L37 9.5L37.5 16.5L50 19.5L63 22L63 29Z"/><path d="M52 29L57 22L83 12L86 9.5L88.5 9.5L89 16L112 22L112 29Z"/><path d="M105 29L113 27L140.5 16.7L167 24L167 29Z"/><path d="M160 29L161 27L190.5 12.8L219 21L220 29Z"/><rect x="0" y="24" width="220" height="5"/></clipPath><g clip-path="url(#hclip)"><rect x="217.1" y="17.7" width="2.9" height="1.3" fill="#5e5030" opacity=".35"/><rect x="7.1" y="18.1" width="2.5" height="1.2" fill="#b0a070" opacity=".35"/><rect x="119.6" y="26.8" width="2.7" height="1.3" fill="#b0a070" opacity=".35"/><rect x="26.4" y="13.9" width="1.1" height="1.2" fill="#6f6a55" opacity=".35"/><rect x="203.2" y="26.9" width="2.8" height="1.1" fill="#5e5030" opacity=".35"/><rect x="105.8" y="11.4" width="2.0" height="0.8" fill="#5e5030" opacity=".35"/><rect x="115.5" y="17.3" width="2.9" height="1.1" fill="#b0a070" opacity=".35"/><rect x="27.6" y="28.4" width="2.1" height="1.2" fill="#5e5030" opacity=".35"/><rect x="77.4" y="12.9" width="2.1" height="1.3" fill="#5e5030" opacity=".35"/><rect x="52.7" y="14.5" width="2.8" height="0.7" fill="#5e5030" opacity=".35"/><rect x="107.3" y="20.4" width="1.8" height="1.2" fill="#5e5030" opacity=".35"/><rect x="59.1" y="19.5" width="1.8" height="1.0" fill="#5e5030" opacity=".35"/><rect x="188.5" y="24.5" width="1.1" height="0.6" fill="#b0a070" opacity=".35"/><rect x="214.4" y="26.1" width="1.2" height="1.0" fill="#b0a070" opacity=".35"/><rect x="34.5" y="10.4" width="1.8" height="0.9" fill="#b0a070" opacity=".35"/><rect x="79.4" y="12.8" width="1.7" height="0.7" fill="#6f6a55" opacity=".35"/><rect x="0.8" y="23.5" width="2.6" height="1.1" fill="#5e5030" opacity=".35"/><rect x="82.1" y="21.1" width="2.6" height="0.9" fill="#5e5030" opacity=".35"/><rect x="137.0" y="17.6" width="1.7" height="1.0" fill="#6f6a55" opacity=".35"/><rect x="69.3" y="28.0" width="1.8" height="0.6" fill="#5e5030" opacity=".35"/><rect x="117.9" y="22.9" width="1.1" height="0.9" fill="#b0a070" opacity=".35"/><rect x="28.7" y="9.6" width="1.7" height="1.4" fill="#6f6a55" opacity=".35"/><rect x="174.0" y="14.2" width="1.9" height="0.7" fill="#6f6a55" opacity=".35"/><rect x="145.7" y="26.7" width="2.6" height="1.1" fill="#6f6a55" opacity=".35"/><rect x="70.0" y="19.6" width="2.6" height="1.2" fill="#b0a070" opacity=".35"/><rect x="31.6" y="24.5" width="1.1" height="0.7" fill="#5e5030" opacity=".35"/><rect x="145.0" y="16.5" width="2.6" height="0.9" fill="#5e5030" opacity=".35"/><rect x="5.6" y="11.3" width="2.0" height="1.2" fill="#b0a070" opacity=".35"/><rect x="127.4" y="25.0" width="1.1" height="1.2" fill="#6f6a55" opacity=".35"/><rect x="116.4" y="13.8" width="2.1" height="0.7" fill="#6f6a55" opacity=".35"/><rect x="13.5" y="15.5" width="2.1" height="1.3" fill="#5e5030" opacity=".35"/><rect x="219.6" y="21.9" width="1.9" height="1.2" fill="#b0a070" opacity=".35"/><rect x="55.6" y="21.0" width="2.9" height="1.0" fill="#5e5030" opacity=".35"/><rect x="82.6" y="13.7" width="2.9" height="1.3" fill="#5e5030" opacity=".35"/><rect x="91.4" y="20.4" width="2.2" height="1.3" fill="#6f6a55" opacity=".35"/><rect x="106.4" y="21.9" width="2.8" height="0.7" fill="#5e5030" opacity=".35"/><rect x="109.6" y="18.7" width="2.4" height="1.4" fill="#6f6a55" opacity=".35"/><rect x="158.2" y="12.7" width="1.5" height="0.8" fill="#6f6a55" opacity=".35"/><rect x="113.4" y="27.7" width="2.7" height="1.0" fill="#b0a070" opacity=".35"/><rect x="147.7" y="26.1" width="2.2" height="1.1" fill="#b0a070" opacity=".35"/><rect x="195.7" y="15.1" width="1.5" height="1.2" fill="#5e5030" opacity=".35"/><rect x="37.9" y="16.2" width="1.6" height="1.2" fill="#5e5030" opacity=".35"/><rect x="92.1" y="23.0" width="2.4" height="0.8" fill="#6f6a55" opacity=".35"/><rect x="183.6" y="25.4" width="2.1" height="1.0" fill="#6f6a55" opacity=".35"/><rect x="15.9" y="28.0" width="2.6" height="1.3" fill="#5e5030" opacity=".35"/><rect x="102.8" y="13.6" width="1.5" height="1.2" fill="#6f6a55" opacity=".35"/><rect x="15.2" y="13.3" width="1.5" height="1.3" fill="#b0a070" opacity=".35"/><rect x="30.2" y="21.4" width="2.4" height="0.6" fill="#b0a070" opacity=".35"/><rect x="37.3" y="9.9" width="1.4" height="0.7" fill="#5e5030" opacity=".35"/><rect x="26.0" y="14.3" width="2.8" height="0.6" fill="#b0a070" opacity=".35"/><rect x="127.7" y="22.5" width="1.0" height="0.9" fill="#b0a070" opacity=".35"/><rect x="83.5" y="10.6" width="2.3" height="1.2" fill="#b0a070" opacity=".35"/><rect x="86.0" y="19.9" width="1.2" height="0.8" fill="#6f6a55" opacity=".35"/><rect x="95.2" y="17.8" width="2.1" height="0.8" fill="#6f6a55" opacity=".35"/><rect x="207.1" y="16.5" width="2.5" height="1.2" fill="#b0a070" opacity=".35"/><rect x="145.8" y="22.4" width="2.9" height="1.3" fill="#5e5030" opacity=".35"/><rect x="165.9" y="28.2" width="2.3" height="1.0" fill="#5e5030" opacity=".35"/><rect x="146.7" y="19.2" width="1.1" height="0.8" fill="#6f6a55" opacity=".35"/><rect x="124.6" y="12.6" width="2.3" height="1.1" fill="#5e5030" opacity=".35"/><rect x="81.6" y="27.4" width="1.9" height="0.7" fill="#6f6a55" opacity=".35"/><rect x="31.1" y="15.6" width="2.4" height="1.1" fill="#6f6a55" opacity=".35"/><rect x="66.1" y="12.7" width="2.0" height="1.2" fill="#6f6a55" opacity=".35"/><rect x="15.1" y="23.3" width="2.5" height="1.0" fill="#6f6a55" opacity=".35"/><rect x="86.2" y="11.0" width="1.5" height="0.6" fill="#5e5030" opacity=".35"/><rect x="9.3" y="19.1" width="1.5" height="1.2" fill="#b0a070" opacity=".35"/><rect x="192.6" y="27.9" width="1.9" height="1.2" fill="#5e5030" opacity=".35"/><rect x="77.6" y="25.9" width="1.2" height="0.8" fill="#5e5030" opacity=".35"/><rect x="149.9" y="20.3" width="2.8" height="0.7" fill="#6f6a55" opacity=".35"/><rect x="41.6" y="17.3" width="2.5" height="1.3" fill="#6f6a55" opacity=".35"/><rect x="28.3" y="21.2" width="2.7" height="1.2" fill="#6f6a55" opacity=".35"/><rect x="116.1" y="20.4" width="1.4" height="0.8" fill="#b0a070" opacity=".35"/><rect x="6.6" y="25.1" width="2.8" height="1.4" fill="#b0a070" opacity=".35"/><rect x="69.5" y="27.1" width="1.6" height="1.0" fill="#6f6a55" opacity=".35"/><rect x="151.1" y="15.0" width="2.7" height="1.0" fill="#6f6a55" opacity=".35"/><rect x="41.9" y="21.7" width="1.2" height="1.2" fill="#5e5030" opacity=".35"/><rect x="108.2" y="19.5" width="1.9" height="0.8" fill="#6f6a55" opacity=".35"/><rect x="46.6" y="25.3" width="2.9" height="1.4" fill="#5e5030" opacity=".35"/><rect x="124.5" y="28.2" width="2.8" height="0.7" fill="#5e5030" opacity=".35"/><rect x="137.1" y="10.0" width="1.7" height="0.8" fill="#5e5030" opacity=".35"/><rect x="109.7" y="9.4" width="1.7" height="0.9" fill="#b0a070" opacity=".35"/><rect x="152.8" y="11.7" width="2.7" height="1.1" fill="#5e5030" opacity=".35"/><rect x="157.5" y="23.8" width="1.7" height="1.2" fill="#5e5030" opacity=".35"/><rect x="189.5" y="17.7" width="2.5" height="1.0" fill="#5e5030" opacity=".35"/><rect x="173.1" y="17.2" width="2.7" height="1.2" fill="#b0a070" opacity=".35"/><rect x="109.4" y="23.0" width="2.1" height="0.9" fill="#6f6a55" opacity=".35"/><rect x="107.6" y="9.5" width="1.9" height="1.2" fill="#b0a070" opacity=".35"/><rect x="39.7" y="27.0" width="2.4" height="0.9" fill="#b0a070" opacity=".35"/><rect x="98.5" y="16.2" width="1.8" height="1.4" fill="#5e5030" opacity=".35"/><rect x="56.9" y="16.4" width="2.7" height="1.0" fill="#5e5030" opacity=".35"/><rect x="46.0" y="12.4" width="1.8" height="0.7" fill="#5e5030" opacity=".35"/><rect x="30.6" y="21.2" width="1.9" height="0.7" fill="#5e5030" opacity=".35"/><rect x="88.7" y="15.4" width="1.1" height="1.2" fill="#5e5030" opacity=".35"/><rect x="88.7" y="16.9" width="1.1" height="1.4" fill="#5e5030" opacity=".35"/><rect x="53.1" y="16.8" width="1.4" height="0.9" fill="#5e5030" opacity=".35"/><rect x="76.2" y="11.5" width="1.1" height="1.2" fill="#b0a070" opacity=".35"/><rect x="215.9" y="27.8" width="2.6" height="1.4" fill="#b0a070" opacity=".35"/><rect x="55.0" y="14.3" width="2.6" height="1.1" fill="#b0a070" opacity=".35"/><rect x="69.7" y="10.1" width="1.9" height="0.7" fill="#6f6a55" opacity=".35"/><rect x="0.8" y="9.6" width="1.2" height="0.7" fill="#5e5030" opacity=".35"/><rect x="106.0" y="12.8" width="2.0" height="0.9" fill="#b0a070" opacity=".35"/><rect x="74.8" y="18.6" width="1.7" height="1.1" fill="#b0a070" opacity=".35"/><rect x="67.0" y="21.1" width="2.9" height="0.7" fill="#b0a070" opacity=".35"/><rect x="40.5" y="17.3" width="2.0" height="1.0" fill="#6f6a55" opacity=".35"/><rect x="149.6" y="27.6" width="1.3" height="1.2" fill="#6f6a55" opacity=".35"/><rect x="84.9" y="27.8" width="1.7" height="0.7" fill="#b0a070" opacity=".35"/><rect x="96.5" y="17.9" width="2.4" height="0.9" fill="#5e5030" opacity=".35"/><rect x="111.6" y="24.1" width="2.8" height="1.2" fill="#b0a070" opacity=".35"/><rect x="9.4" y="12.4" width="2.5" height="1.3" fill="#5e5030" opacity=".35"/><rect x="166.9" y="22.5" width="1.2" height="0.8" fill="#6f6a55" opacity=".35"/><rect x="12.4" y="21.2" width="1.1" height="1.0" fill="#6f6a55" opacity=".35"/><rect x="142.3" y="28.9" width="1.0" height="0.8" fill="#5e5030" opacity=".35"/><rect x="74.5" y="15.2" width="1.9" height="1.3" fill="#5e5030" opacity=".35"/><rect x="53.0" y="10.0" width="1.3" height="1.1" fill="#6f6a55" opacity=".35"/><rect x="216.8" y="11.2" width="1.6" height="0.8" fill="#6f6a55" opacity=".35"/><rect x="113.4" y="19.1" width="2.8" height="0.9" fill="#6f6a55" opacity=".35"/><rect x="172.1" y="18.3" width="2.2" height="0.6" fill="#5e5030" opacity=".35"/><rect x="131.6" y="26.2" width="1.2" height="1.4" fill="#b0a070" opacity=".35"/><rect x="18.9" y="18.3" width="1.4" height="1.3" fill="#6f6a55" opacity=".35"/><rect x="23.9" y="18.7" width="2.3" height="1.2" fill="#b0a070" opacity=".35"/><rect x="132.7" y="17.9" width="1.2" height="1.3" fill="#6f6a55" opacity=".35"/><rect x="97.6" y="16.6" width="1.2" height="0.6" fill="#b0a070" opacity=".35"/><rect x="160.2" y="10.5" width="1.7" height="1.0" fill="#5e5030" opacity=".35"/><rect x="203.3" y="22.7" width="1.7" height="1.2" fill="#5e5030" opacity=".35"/><rect x="133.3" y="13.3" width="1.7" height="1.4" fill="#b0a070" opacity=".35"/><rect x="52.0" y="17.8" width="1.5" height="0.9" fill="#6f6a55" opacity=".35"/><rect x="204.8" y="23.5" width="2.7" height="1.4" fill="#6f6a55" opacity=".35"/><rect x="102.0" y="23.2" width="2.7" height="0.9" fill="#5e5030" opacity=".35"/><rect x="198.7" y="28.0" width="2.0" height="1.2" fill="#b0a070" opacity=".35"/><rect x="103.3" y="20.8" width="1.1" height="1.4" fill="#5e5030" opacity=".35"/><rect x="40.6" y="10.9" width="2.4" height="0.8" fill="#6f6a55" opacity=".35"/><rect x="13.5" y="18.4" width="1.4" height="0.8" fill="#b0a070" opacity=".35"/><rect x="95.1" y="15.9" width="2.5" height="1.2" fill="#b0a070" opacity=".35"/><rect x="31.5" y="17.9" width="2.8" height="1.0" fill="#5e5030" opacity=".35"/><rect x="33.7" y="24.3" width="2.4" height="1.4" fill="#6f6a55" opacity=".35"/><rect x="82.0" y="12.2" width="1.6" height="1.0" fill="#6f6a55" opacity=".35"/><rect x="219.7" y="13.5" width="2.9" height="0.8" fill="#5e5030" opacity=".35"/><rect x="101.9" y="26.7" width="2.6" height="0.8" fill="#5e5030" opacity=".35"/><rect x="204.6" y="19.4" width="1.0" height="1.1" fill="#5e5030" opacity=".35"/><rect x="117.9" y="12.3" width="1.1" height="0.8" fill="#b0a070" opacity=".35"/><rect x="78.1" y="28.3" width="1.7" height="1.0" fill="#b0a070" opacity=".35"/><rect x="40.7" y="9.3" width="1.9" height="0.9" fill="#5e5030" opacity=".35"/><rect x="132.8" y="25.2" width="1.9" height="0.8" fill="#6f6a55" opacity=".35"/><rect x="176.5" y="17.4" width="1.5" height="0.6" fill="#b0a070" opacity=".35"/><rect x="8.2" y="28.9" width="1.3" height="1.2" fill="#6f6a55" opacity=".35"/><rect x="54.4" y="11.7" width="2.5" height="1.2" fill="#6f6a55" opacity=".35"/><rect x="165.1" y="15.7" width="1.3" height="0.6" fill="#5e5030" opacity=".35"/><rect x="3.8" y="21.9" width="2.8" height="1.3" fill="#b0a070" opacity=".35"/><rect x="114.6" y="24.1" width="2.7" height="1.4" fill="#6f6a55" opacity=".35"/><rect x="91.2" y="19.4" width="1.3" height="0.7" fill="#6f6a55" opacity=".35"/><rect x="30.7" y="25.6" width="1.2" height="1.2" fill="#b0a070" opacity=".35"/><rect x="100.1" y="25.1" width="1.9" height="1.4" fill="#5e5030" opacity=".35"/><rect x="127.0" y="11.8" width="1.1" height="1.0" fill="#5e5030" opacity=".35"/><rect x="182.1" y="27.6" width="2.2" height="0.6" fill="#6f6a55" opacity=".35"/><rect x="131.5" y="11.3" width="1.3" height="1.2" fill="#b0a070" opacity=".35"/><rect x="22.5" y="22.4" width="1.7" height="1.0" fill="#6f6a55" opacity=".35"/><rect x="98.5" y="15.2" width="1.7" height="1.1" fill="#b0a070" opacity=".35"/><rect x="69.6" y="14.4" width="2.9" height="1.4" fill="#b0a070" opacity=".35"/><rect x="134.3" y="20.1" width="1.1" height="0.9" fill="#b0a070" opacity=".35"/><rect x="215.6" y="10.6" width="1.5" height="0.8" fill="#5e5030" opacity=".35"/><rect x="153.6" y="11.3" width="2.3" height="0.7" fill="#5e5030" opacity=".35"/></g><rect x="9.3" y="0" width="3" height="28.8" fill="#adb0b4"/></g></svg>
<div class="t" style="left:213.8px;top:433.91px;font-size:7.9px;color:#b9c8df;font-weight:normal;letter-spacing:-0.15px;">IMG_1111</div>
<div class="a" style="left:432px;top:432.7px;width:13px;height:53.0px;background:#6d6d6d;border-radius:2.5px"></div>
<div class="a" style="left:445.6px;top:432.7px;width:139.79999999999995px;height:53.0px;background:#1d365b;"></div>
<svg style="left:445.6px;top:471.8px;overflow:hidden" width="139.79999999999995" height="13.899999999999977" viewBox="0 0 139.79999999999995 13.899999999999977"><path d="M0.0 13.9V11.3M1.1 13.9V10.3M2.3 13.9V12.5M3.8 13.9V6.8M5.8 13.9V7.8M7.0 13.9V9.3M8.4 13.9V11.8M9.5 13.9V11.5M11.6 13.9V7.4M13.6 13.9V7.6M14.8 13.9V10.8M16.5 13.9V8.0M18.6 13.9V7.1M19.7 13.9V8.9M21.5 13.9V9.5M22.7 13.9V9.8M23.8 13.9V6.7M25.8 13.9V9.3M27.2 13.9V6.9M28.9 13.9V7.0M30.9 13.9V9.5M32.4 13.9V8.9M33.9 13.9V11.8M35.3 13.9V7.5M36.3 13.9V12.6M38.1 13.9V11.0M39.7 13.9V9.8M41.1 13.9V6.3M42.4 13.9V10.2M43.6 13.9V8.7M44.9 13.9V10.5M46.8 13.9V10.8M48.5 13.9V6.9M49.6 13.9V12.5M50.9 13.9V7.8M52.6 13.9V11.3M54.0 13.9V11.7M55.6 13.9V12.6M57.4 13.9V6.9M59.6 13.9V8.0M61.7 13.9V12.8M63.1 13.9V6.5M65.0 13.9V10.2M67.1 13.9V8.8M69.1 13.9V11.0M70.4 13.9V9.9M71.5 13.9V10.4M73.7 13.9V10.7M74.7 13.9V12.6M75.9 13.9V7.7M77.3 13.9V11.0M78.4 13.9V6.4M79.9 13.9V11.5M81.0 13.9V12.5M82.2 13.9V8.4M83.4 13.9V12.6M85.0 13.9V11.2M87.2 13.9V12.1M88.8 13.9V7.8M90.3 13.9V6.3M91.9 13.9V11.3M93.4 13.9V12.7M94.9 13.9V11.2M96.9 13.9V7.4M98.5 13.9V12.7M99.9 13.9V11.3M101.1 13.9V11.4M103.1 13.9V12.0M104.2 13.9V6.7M105.9 13.9V6.3M107.4 13.9V6.9M109.2 13.9V7.6M111.0 13.9V9.6M112.2 13.9V11.5M114.2 13.9V6.9M116.3 13.9V10.7M118.1 13.9V7.6M119.9 13.9V7.5M121.5 13.9V8.5M123.3 13.9V11.1M125.4 13.9V6.5M126.5 13.9V6.4M128.7 13.9V8.5M129.7 13.9V6.9M130.9 13.9V6.5M132.7 13.9V12.5M133.9 13.9V8.7M135.6 13.9V7.9M137.7 13.9V11.4M138.7 13.9V6.8" stroke="#22406a" stroke-width="1" fill="none" opacity=".15"/></svg>
<svg style="left:445.6px;top:443px;overflow:hidden" width="139.79999999999995" height="28.80000000000001" viewBox="0 0 139.79999999999995 28.80000000000001"><defs><filter id="sb" x="-20%" y="-20%" width="140%" height="140%"><feGaussianBlur stdDeviation=".45"/></filter></defs><g filter="url(#sb)"><rect x="0" y="0" width="38.5" height="14" fill="#d6d9dd"/><rect x="0" y="13" width="38.5" height="16" fill="#a39a86"/><rect x="0" y="12" width="14" height="3" fill="#6d6d64" opacity=".7"/><ellipse cx="10.5" cy="17" rx="3.5" ry="2" fill="#2e3430"/><rect x="17.5" y="0" width="1.3" height="24" fill="#3a3a38"/><path d="M19 13c0-3 2-4 3.5-4s3 1 3 4v10l-2 3h-7l-2-2 3-3z" fill="#2d3b36"/><circle cx="21.8" cy="8" r="2.2" fill="#3a3833"/><rect x="26.5" y="8" width="3.3" height="8" rx="1" fill="#4a6f98"/><circle cx="28" cy="6.6" r="1.4" fill="#45403a"/><rect x="31.3" y="5" width="5" height="9" rx="1.2" fill="#5c6266"/><rect x="32" y="13" width="3.6" height="6" fill="#4e5356"/><circle cx="33.8" cy="3.8" r="1.5" fill="#4a4540"/><rect x="38.5" y="0" width="50.5" height="17" fill="#cdd2d9"/><rect x="38.5" y="16" width="50.5" height="13" fill="#a69d89"/><rect x="38.5" y="15" width="50.5" height="2" fill="#5d5e58" opacity=".8"/><path d="M45 4l2 10M52 3l-2 9" stroke="#6a6a6a" stroke-width=".5"/><path d="M48 12c1-2 3-3 5-2l3 3v8l-4 4-6 4h-6l2-4 5-4z" fill="#2c3942"/><circle cx="56" cy="9" r="2.6" fill="#3b3f44"/><path d="M45 28h10l-2 1h-9z" fill="#4a4540"/><rect x="72.5" y="0" width="1.8" height="24" fill="#333"/><rect x="70" y="10" width="4" height="5" fill="#4a4a4a"/><path d="M67 19h13v3h-13z" fill="#1e1e1e"/><rect x="83" y="0" width="6" height="29" fill="#1f1f1d"/><rect x="89" y="0" width="50" height="16" fill="#dde0e4"/><rect x="89" y="15" width="50" height="14" fill="#a49b87"/><rect x="89" y="14" width="30" height="2" fill="#606058" opacity=".8"/><path d="M106 13c0-3 2-4 4-4s3 2 3 4v9l-3 4h-6l-2-3 3-3z" fill="#2c3d3a"/><circle cx="110" cy="8" r="2.3" fill="#3a3833"/><rect x="113" y="0" width="1.2" height="20" fill="#444"/><rect x="118" y="0" width="15.5" height="29" fill="#2b2b28"/><rect x="120" y="0" width="4" height="29" fill="#33332f"/><rect x="133.5" y="0" width="5.5" height="16" fill="#d5d8dc"/></g></svg>
<div class="t" style="left:447.90000000000003px;top:433.91px;font-size:7.9px;color:#b9c8df;font-weight:normal;letter-spacing:-0.15px;">IMG_5457</div>
<div class="a" style="left:586px;top:432.7px;width:13.700000000000045px;height:53.0px;background:#6d6d6d;border-radius:2.5px"></div>
<svg style="left:588.5500000000001px;top:435.0px;" width="9" height="8" viewBox="0 0 9 8"><path d="M.3 .3L4.3 3.6 8.3 .3v7.2L4.3 4.2.3 7.5z" fill="#f0f0f0"/></svg>
<div class="a" style="left:600.5px;top:432.7px;width:211.10000000000002px;height:53.0px;background:#1d365b;"></div>
<svg style="left:600.5px;top:471.8px;overflow:hidden" width="211.10000000000002" height="13.899999999999977" viewBox="0 0 211.10000000000002 13.899999999999977"><path d="M0.0 13.9V8.8M1.9 13.9V7.6M4.0 13.9V8.0M6.1 13.9V12.7M7.7 13.9V6.6M9.5 13.9V6.9M10.6 13.9V9.8M11.9 13.9V9.3M13.6 13.9V12.8M14.8 13.9V11.0M16.9 13.9V7.8M18.1 13.9V7.6M19.3 13.9V8.8M20.5 13.9V12.9M22.5 13.9V11.5M23.8 13.9V6.4M25.8 13.9V11.0M28.0 13.9V9.3M29.8 13.9V11.5M31.9 13.9V8.3M34.1 13.9V7.0M35.4 13.9V10.5M36.6 13.9V11.9M37.7 13.9V10.9M39.4 13.9V12.9M41.2 13.9V10.7M42.6 13.9V7.5M44.2 13.9V10.8M45.8 13.9V8.2M46.8 13.9V6.4M47.9 13.9V7.9M49.9 13.9V12.8M51.8 13.9V10.5M53.5 13.9V12.8M54.6 13.9V11.7M56.7 13.9V11.6M58.6 13.9V6.7M60.8 13.9V10.6M62.2 13.9V9.4M64.1 13.9V12.2M66.0 13.9V7.6M68.0 13.9V12.7M70.2 13.9V12.3M71.6 13.9V8.8M73.7 13.9V10.6M75.8 13.9V9.3M77.2 13.9V10.8M78.4 13.9V12.4M79.6 13.9V8.3M81.8 13.9V11.8M82.8 13.9V6.3M84.5 13.9V10.2M85.7 13.9V9.0M87.7 13.9V9.9M89.2 13.9V12.5M91.3 13.9V12.7M92.9 13.9V7.3M94.1 13.9V8.0M96.2 13.9V8.7M98.2 13.9V12.2M99.7 13.9V11.9M101.7 13.9V10.9M103.2 13.9V6.3M105.3 13.9V6.4M106.8 13.9V9.7M108.7 13.9V9.7M110.0 13.9V10.2M111.2 13.9V10.4M113.4 13.9V6.5M115.2 13.9V9.6M116.6 13.9V12.3M117.9 13.9V7.7M119.9 13.9V10.5M121.9 13.9V7.8M123.7 13.9V8.5M125.6 13.9V10.5M127.5 13.9V11.0M129.0 13.9V7.8M130.9 13.9V10.9M133.0 13.9V8.6M134.7 13.9V12.8M136.4 13.9V11.2M138.2 13.9V9.8M140.1 13.9V8.6M142.1 13.9V10.6M143.9 13.9V8.0M145.9 13.9V10.6M147.9 13.9V7.1M149.7 13.9V6.4M151.9 13.9V9.5M153.5 13.9V11.8M155.5 13.9V6.7M157.1 13.9V8.3M158.9 13.9V8.0M160.1 13.9V7.7M161.8 13.9V8.5M163.3 13.9V8.8M165.3 13.9V8.7M167.1 13.9V12.7M168.3 13.9V10.0M170.1 13.9V11.4M171.9 13.9V8.7M173.0 13.9V9.8M174.3 13.9V12.5M175.4 13.9V10.8M176.6 13.9V11.6M177.7 13.9V9.8M179.1 13.9V8.8M180.8 13.9V11.3M182.9 13.9V12.9M184.4 13.9V11.0M185.9 13.9V12.1M187.9 13.9V10.4M188.9 13.9V8.8M190.1 13.9V9.3M191.5 13.9V9.0M193.6 13.9V7.5M195.1 13.9V7.5M196.9 13.9V10.4M198.1 13.9V8.9M199.7 13.9V6.5M201.9 13.9V8.9M203.3 13.9V7.0M204.3 13.9V12.2M206.0 13.9V8.8M207.2 13.9V8.7M209.2 13.9V10.4" stroke="#22406a" stroke-width="1" fill="none" opacity=".15"/></svg>
<svg style="left:600.5px;top:443px;overflow:hidden" width="211.10000000000002" height="28.80000000000001" viewBox="0 0 211.10000000000002 28.80000000000001"><defs><filter id="fb" x="-10%" y="-10%" width="120%" height="120%"><feGaussianBlur stdDeviation=".55"/></filter><filter id="fcb" x="-30%" y="-30%" width="160%" height="160%"><feGaussianBlur stdDeviation="1.3"/></filter></defs><svg x="0" y="0" width="37.8" height="28.8" overflow="hidden"><rect x="0" y="0" width="37.8" height="10.5" fill="#dcdde0"/><g filter="url(#fcb)"><ellipse cx="23.5" cy="6.7" rx="6.2" ry="2.9" fill="#a6a9ae" opacity=".7"/><ellipse cx="28.0" cy="8.3" rx="3.1" ry="2.2" fill="#a6a9ae" opacity=".7"/><ellipse cx="35.7" cy="5.8" rx="6.6" ry="1.7" fill="#a6a9ae" opacity=".7"/><ellipse cx="17.7" cy="2.2" rx="5.2" ry="2.4" fill="#a6a9ae" opacity=".7"/><ellipse cx="0.5" cy="2.0" rx="4.1" ry="2.9" fill="#a6a9ae" opacity=".7"/><ellipse cx="28.9" cy="1.4" rx="6.2" ry="1.7" fill="#a6a9ae" opacity=".7"/><ellipse cx="23.3" cy="1.1" rx="3.0" ry="2.8" fill="#a6a9ae" opacity=".7"/><ellipse cx="7.9" cy="1.9" rx="6.9" ry="2.8" fill="#a6a9ae" opacity=".7"/><ellipse cx="10.9" cy="8.7" rx="5.2" ry="2.5" fill="#a6a9ae" opacity=".7"/></g><g filter="url(#fb)"><rect x="0" y="10" width="37.8" height="4.8" fill="#747b85"/><rect x="7.7" y="13.4" width="3.1" height="1.6" fill="#5a6a88" opacity=".6"/><rect x="11.3" y="11.9" width="1.5" height="0.7" fill="#9ba1aa" opacity=".6"/><rect x="12.5" y="13.0" width="2.8" height="1.2" fill="#8a9099" opacity=".6"/><rect x="2.5" y="11.9" width="1.9" height="1.3" fill="#5a5f66" opacity=".6"/><rect x="18.2" y="12.8" width="1.2" height="1.6" fill="#9ba1aa" opacity=".6"/><rect x="35.9" y="11.9" width="2.2" height="1.1" fill="#5a6a88" opacity=".6"/><rect x="13.8" y="12.4" width="1.0" height="0.6" fill="#5a5f66" opacity=".6"/><rect x="23.6" y="13.4" width="1.4" height="0.8" fill="#5a6a88" opacity=".6"/><rect x="13.0" y="11.9" width="2.6" height="1.4" fill="#9ba1aa" opacity=".6"/><rect x="22.3" y="13.0" width="2.1" height="0.9" fill="#5a6a88" opacity=".6"/><rect x="35.8" y="11.2" width="2.0" height="1.2" fill="#5a5f66" opacity=".6"/><rect x="12.9" y="13.3" width="2.6" height="0.9" fill="#8a9099" opacity=".6"/><rect x="11.6" y="13.0" width="2.9" height="1.3" fill="#8a9099" opacity=".6"/><rect x="37.7" y="11.4" width="1.1" height="1.6" fill="#5a6a88" opacity=".6"/><rect x="1.2" y="12.9" width="2.0" height="0.9" fill="#5a6a88" opacity=".6"/><rect x="5.5" y="13.4" width="2.9" height="1.4" fill="#8a9099" opacity=".6"/><rect x="31.7" y="11.3" width="3.2" height="1.5" fill="#5a6a88" opacity=".6"/><rect x="4.0" y="12.1" width="1.4" height="1.4" fill="#8a9099" opacity=".6"/><rect x="0" y="14.5" width="37.8" height="14.3" fill="#71864a"/><rect x="5.3" y="27.7" width="2.6" height="1.0" fill="#64783f" opacity=".75"/><rect x="17.1" y="21.5" width="2.8" height="1.3" fill="#a8946a" opacity=".75"/><rect x="17.8" y="27.4" width="1.3" height="1.6" fill="#64783f" opacity=".75"/><rect x="36.3" y="23.5" width="2.2" height="1.1" fill="#9a8a5a" opacity=".75"/><rect x="18.6" y="21.9" width="2.4" height="1.3" fill="#9a8a5a" opacity=".75"/><rect x="29.7" y="25.6" width="2.7" height="1.5" fill="#a8946a" opacity=".75"/><rect x="13.7" y="24.6" width="1.7" height="1.3" fill="#a8946a" opacity=".75"/><rect x="36.2" y="19.4" width="1.4" height="1.7" fill="#82944f" opacity=".75"/><rect x="20.7" y="18.1" width="2.7" height="1.3" fill="#64783f" opacity=".75"/><rect x="24.5" y="25.9" width="1.9" height="1.4" fill="#82944f" opacity=".75"/><rect x="13.2" y="26.6" width="3.2" height="1.5" fill="#a8946a" opacity=".75"/><rect x="36.2" y="21.9" width="2.3" height="1.0" fill="#a8946a" opacity=".75"/><rect x="35.4" y="21.3" width="2.7" height="1.5" fill="#82944f" opacity=".75"/><rect x="6.5" y="25.7" width="2.5" height="1.5" fill="#82944f" opacity=".75"/><rect x="11.4" y="22.4" width="3.2" height="1.1" fill="#9a8a5a" opacity=".75"/><rect x="7.4" y="22.9" width="2.6" height="1.0" fill="#5f7a3f" opacity=".75"/><rect x="23.8" y="15.1" width="2.2" height="1.0" fill="#9a8a5a" opacity=".75"/><rect x="33.7" y="16.1" width="3.4" height="1.3" fill="#64783f" opacity=".75"/><rect x="1.3" y="21.2" width="2.0" height="1.4" fill="#64783f" opacity=".75"/><rect x="7.7" y="24.8" width="1.9" height="1.2" fill="#a8946a" opacity=".75"/><rect x="32.4" y="26.9" width="2.7" height="1.3" fill="#9a8a5a" opacity=".75"/><rect x="20.8" y="18.8" width="1.7" height="1.3" fill="#64783f" opacity=".75"/><rect x="11.1" y="19.5" width="1.3" height="1.2" fill="#64783f" opacity=".75"/><rect x="24.3" y="19.8" width="1.4" height="1.4" fill="#64783f" opacity=".75"/><rect x="18.0" y="17.3" width="1.3" height="0.9" fill="#9a8a5a" opacity=".75"/><rect x="14.4" y="19.2" width="3.3" height="1.3" fill="#a8946a" opacity=".75"/></g></svg><svg x="37.5" y="0" width="51.099999999999994" height="28.8" overflow="hidden"><rect x="0" y="0" width="51.099999999999994" height="14.0" fill="#dcdde0"/><g filter="url(#fcb)"><ellipse cx="32.2" cy="10.8" rx="4.5" ry="2.1" fill="#a6a9ae" opacity=".7"/><ellipse cx="11.6" cy="3.5" rx="6.9" ry="2.1" fill="#a6a9ae" opacity=".7"/><ellipse cx="49.1" cy="11.1" rx="5.4" ry="1.9" fill="#a6a9ae" opacity=".7"/><ellipse cx="50.1" cy="6.0" rx="4.7" ry="2.0" fill="#a6a9ae" opacity=".7"/><ellipse cx="50.3" cy="6.0" rx="4.1" ry="2.2" fill="#a6a9ae" opacity=".7"/><ellipse cx="6.2" cy="7.6" rx="4.8" ry="1.9" fill="#a6a9ae" opacity=".7"/><ellipse cx="39.9" cy="10.0" rx="3.1" ry="2.3" fill="#a6a9ae" opacity=".7"/><ellipse cx="14.0" cy="11.4" rx="6.1" ry="1.9" fill="#a6a9ae" opacity=".7"/><ellipse cx="13.7" cy="1.9" rx="7.0" ry="1.9" fill="#a6a9ae" opacity=".7"/><ellipse cx="31.1" cy="5.8" rx="5.6" ry="2.4" fill="#a6a9ae" opacity=".7"/><ellipse cx="38.0" cy="1.4" rx="6.0" ry="2.0" fill="#a6a9ae" opacity=".7"/><ellipse cx="27.3" cy="4.1" rx="4.2" ry="2.3" fill="#a6a9ae" opacity=".7"/></g><g filter="url(#fb)"><rect x="0" y="13.5" width="51.099999999999994" height="7.8" fill="#747b85"/><rect x="23.7" y="16.5" width="3.2" height="1.2" fill="#9ba1aa" opacity=".6"/><rect x="0.1" y="17.5" width="3.1" height="0.7" fill="#5a5f66" opacity=".6"/><rect x="0.7" y="18.8" width="2.3" height="1.2" fill="#5a6a88" opacity=".6"/><rect x="43.9" y="19.1" width="2.4" height="1.3" fill="#5a5f66" opacity=".6"/><rect x="45.9" y="17.1" width="3.3" height="0.9" fill="#9ba1aa" opacity=".6"/><rect x="35.5" y="16.9" width="1.9" height="1.4" fill="#8a9099" opacity=".6"/><rect x="7.3" y="17.1" width="2.6" height="1.1" fill="#8a9099" opacity=".6"/><rect x="27.5" y="16.8" width="2.6" height="0.6" fill="#5a5f66" opacity=".6"/><rect x="13.7" y="15.0" width="1.2" height="1.5" fill="#8a9099" opacity=".6"/><rect x="36.9" y="19.9" width="4.0" height="1.3" fill="#9ba1aa" opacity=".6"/><rect x="6.3" y="15.2" width="2.8" height="1.4" fill="#9ba1aa" opacity=".6"/><rect x="36.4" y="15.2" width="1.9" height="1.5" fill="#5a5f66" opacity=".6"/><rect x="9.4" y="15.5" width="3.4" height="0.7" fill="#5a5f66" opacity=".6"/><rect x="2.2" y="15.1" width="2.1" height="0.7" fill="#9ba1aa" opacity=".6"/><rect x="29.2" y="15.2" width="2.2" height="1.2" fill="#9ba1aa" opacity=".6"/><rect x="22.1" y="16.2" width="2.8" height="1.1" fill="#8a9099" opacity=".6"/><rect x="46.7" y="15.3" width="1.9" height="1.2" fill="#8a9099" opacity=".6"/><rect x="46.5" y="17.6" width="2.9" height="0.9" fill="#5a5f66" opacity=".6"/><rect x="13.0" y="18.6" width="2.6" height="0.7" fill="#5a5f66" opacity=".6"/><rect x="44.1" y="17.0" width="2.2" height="0.7" fill="#9ba1aa" opacity=".6"/><rect x="33.5" y="15.0" width="3.0" height="0.7" fill="#9ba1aa" opacity=".6"/><rect x="25.9" y="17.0" width="2.2" height="1.1" fill="#8a9099" opacity=".6"/><rect x="5.5" y="17.4" width="2.6" height="1.0" fill="#5a5f66" opacity=".6"/><rect x="48.3" y="16.9" width="3.4" height="1.3" fill="#9ba1aa" opacity=".6"/><rect x="49.7" y="18.2" width="3.5" height="0.7" fill="#5a6a88" opacity=".6"/><rect x="0" y="21" width="51.099999999999994" height="7.800000000000001" fill="#71864a"/><rect x="18.1" y="22.8" width="1.8" height="1.4" fill="#a8946a" opacity=".75"/><rect x="40.7" y="23.9" width="2.8" height="1.2" fill="#a8946a" opacity=".75"/><rect x="41.1" y="24.4" width="3.1" height="1.3" fill="#64783f" opacity=".75"/><rect x="50.7" y="22.7" width="1.5" height="0.9" fill="#9a8a5a" opacity=".75"/><rect x="1.7" y="22.6" width="1.1" height="1.7" fill="#82944f" opacity=".75"/><rect x="33.8" y="23.7" width="2.1" height="1.1" fill="#64783f" opacity=".75"/><rect x="47.1" y="23.5" width="2.2" height="1.0" fill="#5f7a3f" opacity=".75"/><rect x="3.6" y="27.8" width="3.2" height="1.3" fill="#64783f" opacity=".75"/><rect x="13.0" y="23.2" width="1.4" height="1.1" fill="#5f7a3f" opacity=".75"/><rect x="1.7" y="28.0" width="1.9" height="1.6" fill="#a8946a" opacity=".75"/><rect x="47.9" y="26.4" width="2.7" height="1.3" fill="#5f7a3f" opacity=".75"/><rect x="6.0" y="26.2" width="1.7" height="1.5" fill="#5f7a3f" opacity=".75"/><rect x="1.7" y="26.6" width="2.4" height="1.5" fill="#64783f" opacity=".75"/><rect x="20.5" y="28.6" width="1.9" height="1.1" fill="#82944f" opacity=".75"/><rect x="18.5" y="21.5" width="3.5" height="1.3" fill="#5f7a3f" opacity=".75"/><rect x="9.0" y="22.6" width="1.1" height="1.4" fill="#a8946a" opacity=".75"/><rect x="0.3" y="21.5" width="2.9" height="1.2" fill="#9a8a5a" opacity=".75"/><rect x="1.7" y="27.5" width="3.1" height="1.4" fill="#9a8a5a" opacity=".75"/><rect x="36.6" y="22.8" width="3.0" height="0.9" fill="#82944f" opacity=".75"/><rect x="2.7" y="22.9" width="1.1" height="1.2" fill="#9a8a5a" opacity=".75"/><rect x="2.4" y="27.5" width="2.1" height="1.4" fill="#9a8a5a" opacity=".75"/><rect x="48.6" y="22.5" width="2.7" height="1.4" fill="#5f7a3f" opacity=".75"/><rect x="27.1" y="21.7" width="1.8" height="0.9" fill="#64783f" opacity=".75"/><rect x="50.3" y="22.3" width="1.2" height="1.5" fill="#64783f" opacity=".75"/><rect x="0.9" y="25.2" width="2.2" height="1.4" fill="#82944f" opacity=".75"/><rect x="26.7" y="22.0" width="1.0" height="1.6" fill="#82944f" opacity=".75"/><rect x="45.6" y="28.8" width="2.4" height="0.9" fill="#82944f" opacity=".75"/><rect x="4.5" y="27.0" width="3.0" height="1.1" fill="#5f7a3f" opacity=".75"/><rect x="27.4" y="24.7" width="2.7" height="1.6" fill="#64783f" opacity=".75"/><rect x="34.0" y="23.2" width="2.2" height="1.0" fill="#5f7a3f" opacity=".75"/><rect x="40.7" y="27.9" width="3.2" height="0.9" fill="#a8946a" opacity=".75"/><rect x="19.4" y="27.0" width="1.0" height="1.1" fill="#5f7a3f" opacity=".75"/><rect x="29.4" y="24.4" width="3.0" height="1.5" fill="#9a8a5a" opacity=".75"/><rect x="37.2" y="26.5" width="1.7" height="1.6" fill="#82944f" opacity=".75"/><rect x="28.7" y="23.5" width="1.8" height="0.9" fill="#82944f" opacity=".75"/></g></svg><svg x="88.3" y="0" width="51.30000000000001" height="28.8" overflow="hidden"><rect x="0" y="0" width="51.30000000000001" height="13.0" fill="#dcdde0"/><g filter="url(#fcb)"><ellipse cx="34.7" cy="3.2" rx="3.3" ry="2.6" fill="#a6a9ae" opacity=".7"/><ellipse cx="28.6" cy="0.3" rx="3.2" ry="1.7" fill="#a6a9ae" opacity=".7"/><ellipse cx="18.3" cy="9.7" rx="6.8" ry="2.4" fill="#a6a9ae" opacity=".7"/><ellipse cx="11.9" cy="4.8" rx="4.4" ry="2.0" fill="#a6a9ae" opacity=".7"/><ellipse cx="0.6" cy="6.6" rx="6.3" ry="2.6" fill="#a6a9ae" opacity=".7"/><ellipse cx="4.9" cy="6.0" rx="3.7" ry="2.6" fill="#a6a9ae" opacity=".7"/><ellipse cx="22.9" cy="10.6" rx="6.2" ry="1.7" fill="#a6a9ae" opacity=".7"/><ellipse cx="16.3" cy="10.3" rx="4.8" ry="2.2" fill="#a6a9ae" opacity=".7"/><ellipse cx="22.6" cy="8.6" rx="6.7" ry="2.3" fill="#a6a9ae" opacity=".7"/><ellipse cx="49.7" cy="6.7" rx="3.4" ry="2.7" fill="#a6a9ae" opacity=".7"/><ellipse cx="21.5" cy="0.6" rx="6.9" ry="1.5" fill="#a6a9ae" opacity=".7"/><ellipse cx="29.6" cy="5.4" rx="6.5" ry="2.1" fill="#a6a9ae" opacity=".7"/></g><g filter="url(#fb)"><rect x="0" y="12.5" width="51.30000000000001" height="8.8" fill="#747b85"/><rect x="11.1" y="15.3" width="1.6" height="1.2" fill="#8a9099" opacity=".6"/><rect x="39.2" y="18.6" width="2.1" height="1.4" fill="#9ba1aa" opacity=".6"/><rect x="31.7" y="16.1" width="1.4" height="1.4" fill="#5a6a88" opacity=".6"/><rect x="19.6" y="14.1" width="2.2" height="1.4" fill="#8a9099" opacity=".6"/><rect x="46.2" y="14.8" width="3.4" height="0.9" fill="#5a6a88" opacity=".6"/><rect x="44.3" y="17.6" width="3.4" height="1.0" fill="#9ba1aa" opacity=".6"/><rect x="5.3" y="17.4" width="2.9" height="1.4" fill="#9ba1aa" opacity=".6"/><rect x="16.3" y="13.7" width="1.9" height="1.0" fill="#5a6a88" opacity=".6"/><rect x="28.0" y="18.0" width="2.3" height="1.4" fill="#9ba1aa" opacity=".6"/><rect x="27.5" y="18.7" width="2.1" height="1.2" fill="#5a5f66" opacity=".6"/><rect x="14.6" y="14.0" width="1.3" height="1.0" fill="#5a6a88" opacity=".6"/><rect x="15.7" y="19.5" width="1.8" height="1.3" fill="#9ba1aa" opacity=".6"/><rect x="1.9" y="14.1" width="3.9" height="0.9" fill="#8a9099" opacity=".6"/><rect x="35.3" y="18.9" width="3.2" height="1.2" fill="#5a5f66" opacity=".6"/><rect x="24.8" y="14.1" width="1.4" height="0.9" fill="#5a6a88" opacity=".6"/><rect x="20.2" y="13.5" width="2.2" height="0.8" fill="#5a5f66" opacity=".6"/><rect x="46.7" y="17.5" width="2.2" height="0.7" fill="#8a9099" opacity=".6"/><rect x="12.8" y="14.2" width="1.9" height="1.4" fill="#9ba1aa" opacity=".6"/><rect x="46.0" y="14.6" width="2.9" height="1.4" fill="#5a5f66" opacity=".6"/><rect x="33.6" y="17.2" width="2.9" height="1.2" fill="#5a6a88" opacity=".6"/><rect x="21.4" y="16.3" width="2.6" height="1.5" fill="#8a9099" opacity=".6"/><rect x="21.5" y="14.0" width="3.7" height="0.9" fill="#5a6a88" opacity=".6"/><rect x="1.6" y="14.3" width="2.7" height="1.2" fill="#5a5f66" opacity=".6"/><rect x="22.3" y="15.6" width="1.3" height="1.4" fill="#8a9099" opacity=".6"/><rect x="37.4" y="13.9" width="2.5" height="1.4" fill="#9ba1aa" opacity=".6"/><rect x="0" y="21" width="51.30000000000001" height="7.800000000000001" fill="#71864a"/><rect x="16.3" y="27.6" width="2.6" height="1.7" fill="#5f7a3f" opacity=".75"/><rect x="45.8" y="25.8" width="3.0" height="1.6" fill="#9a8a5a" opacity=".75"/><rect x="9.9" y="22.2" width="1.2" height="1.0" fill="#64783f" opacity=".75"/><rect x="39.0" y="25.5" width="2.1" height="1.1" fill="#5f7a3f" opacity=".75"/><rect x="36.6" y="28.2" width="3.4" height="1.4" fill="#9a8a5a" opacity=".75"/><rect x="18.7" y="27.4" width="1.5" height="1.1" fill="#5f7a3f" opacity=".75"/><rect x="23.5" y="26.3" width="2.9" height="0.9" fill="#82944f" opacity=".75"/><rect x="48.3" y="24.6" width="1.0" height="1.8" fill="#a8946a" opacity=".75"/><rect x="6.8" y="21.0" width="2.0" height="1.1" fill="#9a8a5a" opacity=".75"/><rect x="25.2" y="28.3" width="2.8" height="0.8" fill="#82944f" opacity=".75"/><rect x="51.3" y="26.9" width="1.5" height="1.1" fill="#5f7a3f" opacity=".75"/><rect x="14.9" y="24.9" width="2.7" height="1.6" fill="#64783f" opacity=".75"/><rect x="5.6" y="24.2" width="3.4" height="0.9" fill="#82944f" opacity=".75"/><rect x="2.6" y="24.3" width="1.6" height="1.5" fill="#9a8a5a" opacity=".75"/><rect x="7.5" y="28.5" width="2.4" height="1.2" fill="#5f7a3f" opacity=".75"/><rect x="27.8" y="24.0" width="3.3" height="0.9" fill="#a8946a" opacity=".75"/><rect x="6.6" y="21.7" width="3.0" height="0.9" fill="#9a8a5a" opacity=".75"/><rect x="1.1" y="25.4" width="3.4" height="1.7" fill="#9a8a5a" opacity=".75"/><rect x="2.7" y="22.7" width="3.4" height="1.2" fill="#82944f" opacity=".75"/><rect x="26.6" y="28.5" width="2.5" height="1.6" fill="#82944f" opacity=".75"/><rect x="26.1" y="21.4" width="2.0" height="1.6" fill="#82944f" opacity=".75"/><rect x="44.1" y="28.3" width="2.7" height="1.4" fill="#64783f" opacity=".75"/><rect x="1.8" y="21.2" width="2.9" height="1.2" fill="#82944f" opacity=".75"/><rect x="47.0" y="24.0" width="3.5" height="1.6" fill="#a8946a" opacity=".75"/><rect x="7.6" y="27.1" width="2.1" height="1.8" fill="#a8946a" opacity=".75"/><rect x="11.1" y="24.3" width="1.7" height="1.3" fill="#a8946a" opacity=".75"/><rect x="0.1" y="25.9" width="2.9" height="1.6" fill="#9a8a5a" opacity=".75"/><rect x="3.8" y="24.0" width="3.2" height="1.7" fill="#5f7a3f" opacity=".75"/><rect x="33.3" y="26.8" width="2.2" height="1.1" fill="#82944f" opacity=".75"/><rect x="7.0" y="22.8" width="3.3" height="1.7" fill="#9a8a5a" opacity=".75"/><rect x="0.7" y="27.3" width="1.2" height="0.9" fill="#a8946a" opacity=".75"/><rect x="17.1" y="22.7" width="1.7" height="1.7" fill="#64783f" opacity=".75"/><rect x="4.6" y="21.9" width="2.6" height="1.2" fill="#a8946a" opacity=".75"/><rect x="46.5" y="25.3" width="2.1" height="1.7" fill="#64783f" opacity=".75"/><rect x="7.2" y="21.1" width="1.0" height="1.2" fill="#5f7a3f" opacity=".75"/></g></svg><svg x="139.3" y="0" width="51.39999999999999" height="28.8" overflow="hidden"><rect x="0" y="0" width="51.39999999999999" height="13.0" fill="#dcdde0"/><g filter="url(#fcb)"><ellipse cx="24.7" cy="7.9" rx="3.0" ry="2.7" fill="#a6a9ae" opacity=".7"/><ellipse cx="21.5" cy="5.7" rx="5.4" ry="2.7" fill="#a6a9ae" opacity=".7"/><ellipse cx="2.9" cy="5.6" rx="3.2" ry="2.1" fill="#a6a9ae" opacity=".7"/><ellipse cx="17.8" cy="0.2" rx="4.2" ry="2.2" fill="#a6a9ae" opacity=".7"/><ellipse cx="33.7" cy="10.4" rx="4.5" ry="2.3" fill="#a6a9ae" opacity=".7"/><ellipse cx="36.7" cy="10.5" rx="6.8" ry="3.0" fill="#a6a9ae" opacity=".7"/><ellipse cx="15.5" cy="1.9" rx="6.7" ry="1.6" fill="#a6a9ae" opacity=".7"/><ellipse cx="23.1" cy="8.3" rx="5.1" ry="2.1" fill="#a6a9ae" opacity=".7"/><ellipse cx="47.5" cy="3.4" rx="5.2" ry="2.7" fill="#a6a9ae" opacity=".7"/><ellipse cx="7.1" cy="3.9" rx="5.0" ry="2.3" fill="#a6a9ae" opacity=".7"/><ellipse cx="10.7" cy="5.1" rx="3.2" ry="1.6" fill="#a6a9ae" opacity=".7"/><ellipse cx="17.6" cy="1.6" rx="6.9" ry="1.9" fill="#a6a9ae" opacity=".7"/></g><g filter="url(#fb)"><rect x="0" y="12.5" width="51.39999999999999" height="8.8" fill="#747b85"/><rect x="14.2" y="18.6" width="3.2" height="0.9" fill="#9ba1aa" opacity=".6"/><rect x="32.2" y="16.0" width="2.9" height="0.8" fill="#8a9099" opacity=".6"/><rect x="30.4" y="19.2" width="3.7" height="1.4" fill="#5a5f66" opacity=".6"/><rect x="29.1" y="19.4" width="2.1" height="0.7" fill="#5a6a88" opacity=".6"/><rect x="2.2" y="18.9" width="2.5" height="1.5" fill="#9ba1aa" opacity=".6"/><rect x="1.3" y="16.2" width="2.2" height="1.1" fill="#5a6a88" opacity=".6"/><rect x="31.5" y="14.9" width="3.8" height="0.7" fill="#9ba1aa" opacity=".6"/><rect x="37.0" y="17.3" width="1.1" height="1.3" fill="#8a9099" opacity=".6"/><rect x="33.4" y="19.3" width="3.2" height="0.7" fill="#8a9099" opacity=".6"/><rect x="6.2" y="18.4" width="1.8" height="0.9" fill="#9ba1aa" opacity=".6"/><rect x="45.2" y="15.6" width="3.0" height="1.1" fill="#5a6a88" opacity=".6"/><rect x="8.0" y="14.9" width="1.8" height="1.5" fill="#5a5f66" opacity=".6"/><rect x="23.5" y="14.5" width="4.0" height="1.2" fill="#5a6a88" opacity=".6"/><rect x="32.0" y="17.7" width="1.5" height="0.7" fill="#5a6a88" opacity=".6"/><rect x="8.7" y="16.8" width="3.8" height="0.9" fill="#9ba1aa" opacity=".6"/><rect x="7.5" y="15.2" width="2.5" height="1.1" fill="#5a5f66" opacity=".6"/><rect x="28.5" y="17.8" width="2.3" height="1.4" fill="#8a9099" opacity=".6"/><rect x="15.1" y="14.2" width="1.8" height="1.0" fill="#8a9099" opacity=".6"/><rect x="25.0" y="18.1" width="1.3" height="1.4" fill="#9ba1aa" opacity=".6"/><rect x="17.3" y="14.2" width="2.9" height="1.4" fill="#5a5f66" opacity=".6"/><rect x="2.6" y="19.8" width="2.2" height="1.2" fill="#8a9099" opacity=".6"/><rect x="5.1" y="19.1" width="3.6" height="0.9" fill="#8a9099" opacity=".6"/><rect x="36.8" y="16.2" width="3.6" height="0.7" fill="#8a9099" opacity=".6"/><rect x="3.5" y="13.8" width="1.3" height="1.3" fill="#5a6a88" opacity=".6"/><rect x="5.4" y="16.2" width="1.7" height="0.6" fill="#8a9099" opacity=".6"/><rect x="0" y="21" width="51.39999999999999" height="7.800000000000001" fill="#71864a"/><rect x="33.5" y="26.3" width="1.8" height="1.2" fill="#9a8a5a" opacity=".75"/><rect x="24.0" y="21.8" width="2.9" height="0.9" fill="#64783f" opacity=".75"/><rect x="4.9" y="26.1" width="2.7" height="1.2" fill="#9a8a5a" opacity=".75"/><rect x="14.0" y="25.3" width="3.4" height="1.2" fill="#5f7a3f" opacity=".75"/><rect x="45.3" y="28.7" width="1.3" height="1.5" fill="#5f7a3f" opacity=".75"/><rect x="47.2" y="23.5" width="3.0" height="1.3" fill="#5f7a3f" opacity=".75"/><rect x="15.7" y="27.7" width="2.6" height="1.1" fill="#64783f" opacity=".75"/><rect x="47.2" y="25.5" width="2.3" height="1.1" fill="#a8946a" opacity=".75"/><rect x="23.5" y="24.2" width="2.8" height="0.9" fill="#64783f" opacity=".75"/><rect x="10.4" y="26.4" width="2.8" height="0.9" fill="#5f7a3f" opacity=".75"/><rect x="6.9" y="22.3" width="1.2" height="1.2" fill="#64783f" opacity=".75"/><rect x="23.8" y="26.3" width="3.0" height="1.3" fill="#a8946a" opacity=".75"/><rect x="29.8" y="23.0" width="1.9" height="0.9" fill="#64783f" opacity=".75"/><rect x="6.3" y="27.0" width="1.8" height="1.4" fill="#82944f" opacity=".75"/><rect x="45.0" y="25.1" width="2.5" height="1.4" fill="#9a8a5a" opacity=".75"/><rect x="45.1" y="22.0" width="2.1" height="1.2" fill="#5f7a3f" opacity=".75"/><rect x="14.9" y="22.5" width="3.4" height="0.8" fill="#82944f" opacity=".75"/><rect x="48.5" y="23.4" width="3.1" height="1.5" fill="#82944f" opacity=".75"/><rect x="42.2" y="25.6" width="2.2" height="1.7" fill="#64783f" opacity=".75"/><rect x="26.0" y="26.6" width="2.5" height="1.6" fill="#5f7a3f" opacity=".75"/><rect x="29.7" y="26.1" width="2.3" height="1.3" fill="#82944f" opacity=".75"/><rect x="43.0" y="21.3" width="2.3" height="1.3" fill="#9a8a5a" opacity=".75"/><rect x="37.9" y="22.3" width="1.4" height="1.3" fill="#82944f" opacity=".75"/><rect x="33.5" y="24.0" width="2.6" height="1.0" fill="#a8946a" opacity=".75"/><rect x="47.3" y="22.6" width="1.6" height="0.9" fill="#64783f" opacity=".75"/><rect x="19.2" y="25.5" width="1.6" height="0.9" fill="#64783f" opacity=".75"/><rect x="30.7" y="26.9" width="2.1" height="1.5" fill="#9a8a5a" opacity=".75"/><rect x="45.8" y="25.1" width="1.0" height="1.2" fill="#82944f" opacity=".75"/><rect x="0.7" y="27.0" width="1.3" height="1.3" fill="#82944f" opacity=".75"/><rect x="46.2" y="24.7" width="1.7" height="0.9" fill="#64783f" opacity=".75"/><rect x="32.0" y="27.5" width="2.5" height="1.5" fill="#64783f" opacity=".75"/><rect x="10.5" y="26.1" width="2.1" height="1.3" fill="#9a8a5a" opacity=".75"/><rect x="35.8" y="22.6" width="2.3" height="1.7" fill="#5f7a3f" opacity=".75"/><rect x="11.3" y="21.0" width="2.1" height="1.1" fill="#82944f" opacity=".75"/><rect x="20.1" y="27.0" width="1.3" height="1.2" fill="#5f7a3f" opacity=".75"/></g></svg><svg x="190.4" y="0" width="20.99999999999999" height="28.8" overflow="hidden"><rect x="0" y="0" width="20.99999999999999" height="13.0" fill="#dcdde0"/><g filter="url(#fcb)"><ellipse cx="4.6" cy="4.5" rx="4.8" ry="2.1" fill="#a6a9ae" opacity=".7"/><ellipse cx="0.6" cy="5.1" rx="6.1" ry="2.5" fill="#a6a9ae" opacity=".7"/><ellipse cx="18.1" cy="7.7" rx="6.1" ry="2.8" fill="#a6a9ae" opacity=".7"/><ellipse cx="19.3" cy="8.9" rx="4.7" ry="2.5" fill="#a6a9ae" opacity=".7"/><ellipse cx="13.8" cy="9.9" rx="5.9" ry="2.2" fill="#a6a9ae" opacity=".7"/><ellipse cx="4.0" cy="3.7" rx="4.0" ry="2.5" fill="#a6a9ae" opacity=".7"/></g><g filter="url(#fb)"><rect x="0" y="12.5" width="20.99999999999999" height="7.3" fill="#747b85"/><rect x="16.2" y="14.5" width="2.6" height="1.4" fill="#8a9099" opacity=".6"/><rect x="13.3" y="17.0" width="2.3" height="1.4" fill="#8a9099" opacity=".6"/><rect x="3.8" y="16.2" width="3.1" height="1.5" fill="#9ba1aa" opacity=".6"/><rect x="14.7" y="15.8" width="3.5" height="1.5" fill="#9ba1aa" opacity=".6"/><rect x="10.2" y="15.3" width="4.0" height="1.3" fill="#8a9099" opacity=".6"/><rect x="15.9" y="15.9" width="3.4" height="1.1" fill="#8a9099" opacity=".6"/><rect x="12.8" y="16.2" width="1.5" height="1.0" fill="#5a6a88" opacity=".6"/><rect x="20.5" y="13.6" width="2.4" height="0.7" fill="#9ba1aa" opacity=".6"/><rect x="16.3" y="15.9" width="1.2" height="1.3" fill="#8a9099" opacity=".6"/><rect x="2.0" y="17.2" width="2.2" height="0.9" fill="#9ba1aa" opacity=".6"/><rect x="0" y="19.5" width="20.99999999999999" height="9.3" fill="#71864a"/><rect x="6.5" y="25.8" width="1.3" height="1.3" fill="#9a8a5a" opacity=".75"/><rect x="16.1" y="27.6" width="2.7" height="0.9" fill="#82944f" opacity=".75"/><rect x="10.8" y="23.9" width="2.1" height="1.0" fill="#a8946a" opacity=".75"/><rect x="12.9" y="24.8" width="3.4" height="1.3" fill="#a8946a" opacity=".75"/><rect x="17.5" y="25.0" width="1.2" height="1.2" fill="#82944f" opacity=".75"/><rect x="2.0" y="22.7" width="3.4" height="0.9" fill="#a8946a" opacity=".75"/><rect x="18.3" y="22.8" width="1.3" height="1.1" fill="#82944f" opacity=".75"/><rect x="6.9" y="25.9" width="2.1" height="1.7" fill="#9a8a5a" opacity=".75"/><rect x="12.5" y="27.8" width="1.8" height="1.3" fill="#64783f" opacity=".75"/><rect x="11.0" y="24.3" width="1.2" height="1.3" fill="#82944f" opacity=".75"/><rect x="8.7" y="21.3" width="2.8" height="1.7" fill="#9a8a5a" opacity=".75"/><rect x="2.8" y="23.6" width="3.2" height="1.1" fill="#a8946a" opacity=".75"/><rect x="8.8" y="28.2" width="1.3" height="0.8" fill="#5f7a3f" opacity=".75"/><rect x="15.4" y="19.9" width="1.3" height="1.6" fill="#9a8a5a" opacity=".75"/></g></svg><g filter="url(#fb)"><rect x="0" y="14.5" width="37.5" height="2.8" fill="#5d7340"/><rect x="0" y="17" width="37.5" height="12" fill="#a29d76"/><rect x="2.5" y="18.0" width="2.3" height="1.0" fill="#7d7a55" opacity=".8"/><rect x="8.6" y="22.2" width="1.6" height="1.4" fill="#7d7a55" opacity=".8"/><rect x="25.7" y="23.1" width="2.7" height="1.5" fill="#7d7a55" opacity=".8"/><rect x="17.1" y="17.5" width="1.7" height="1.6" fill="#7d7a55" opacity=".8"/><rect x="3.3" y="22.3" width="1.5" height="1.5" fill="#b8ae88" opacity=".8"/><rect x="34.9" y="28.3" width="1.8" height="1.5" fill="#b8ae88" opacity=".8"/><rect x="4.8" y="26.0" width="2.5" height="1.2" fill="#b8ae88" opacity=".8"/><rect x="6.7" y="28.8" width="1.0" height="1.3" fill="#b8ae88" opacity=".8"/><rect x="9.4" y="24.4" width="1.9" height="1.3" fill="#b8ae88" opacity=".8"/><rect x="4.4" y="21.5" width="1.4" height="1.0" fill="#b8ae88" opacity=".8"/><rect x="9.0" y="23.0" width="2.2" height="1.2" fill="#8a9a5a" opacity=".8"/><rect x="28.8" y="20.7" width="1.7" height="1.3" fill="#8a9a5a" opacity=".8"/><rect x="31.3" y="17.2" width="1.4" height="0.8" fill="#b8ae88" opacity=".8"/><rect x="19.5" y="17.5" width="1.4" height="1.6" fill="#b8ae88" opacity=".8"/><rect x="8.2" y="22.5" width="1.1" height="0.9" fill="#8a9a5a" opacity=".8"/><rect x="4.0" y="25.3" width="1.2" height="1.5" fill="#7d7a55" opacity=".8"/><rect x="4.1" y="28.9" width="2.5" height="1.5" fill="#b8ae88" opacity=".8"/><rect x="29.0" y="20.1" width="1.3" height="1.0" fill="#8a9a5a" opacity=".8"/><rect x="14.5" y="19.9" width="2.9" height="1.5" fill="#b8ae88" opacity=".8"/><rect x="17.4" y="19.8" width="1.1" height="1.4" fill="#7d7a55" opacity=".8"/><rect x="8.1" y="25.0" width="1.2" height="1.2" fill="#7d7a55" opacity=".8"/><rect x="9.6" y="22.5" width="1.2" height="0.9" fill="#8a9a5a" opacity=".8"/><rect x="11.8" y="19.9" width="2.2" height="0.8" fill="#7d7a55" opacity=".8"/><rect x="27.5" y="24.1" width="1.6" height="1.1" fill="#b8ae88" opacity=".8"/><rect x="9.9" y="19.6" width="2.7" height="1.3" fill="#b8ae88" opacity=".8"/><rect x="5.5" y="17.1" width="2.2" height="1.0" fill="#8a9a5a" opacity=".8"/><rect x="20.9" y="18.1" width="1.5" height="1.1" fill="#7d7a55" opacity=".8"/><rect x="21.6" y="20.4" width="2.5" height="1.0" fill="#8a9a5a" opacity=".8"/><rect x="4.4" y="24.1" width="2.4" height="1.4" fill="#b8ae88" opacity=".8"/><rect x="8.2" y="22.3" width="1.6" height="1.0" fill="#7d7a55" opacity=".8"/><ellipse cx="35" cy="11.5" rx="1.6" ry="2" fill="#3a4538"/></g></svg>
<div class="t" style="left:602.8px;top:433.91px;font-size:7.9px;color:#b9c8df;font-weight:normal;letter-spacing:-0.15px;">IMG_1172</div>
<div class="a" style="left:811.9px;top:432.7px;width:14.200000000000045px;height:53.0px;background:#6d6d6d;border-radius:2.5px"></div>
<svg style="left:814.7px;top:435.0px;" width="9" height="8" viewBox="0 0 9 8"><path d="M.3 .3L4.3 3.6 8.3 .3v7.2L4.3 4.2.3 7.5z" fill="#f0f0f0"/></svg>
<div class="a" style="left:826.4px;top:432.7px;width:79.0px;height:53.0px;background:#1d365b;"></div>
<svg style="left:826.4px;top:471.8px;overflow:hidden" width="79.0" height="13.899999999999977" viewBox="0 0 79.0 13.899999999999977"><path d="M0.0 13.9V7.6M2.0 13.9V9.7M3.3 13.9V12.9M5.1 13.9V9.8M7.0 13.9V10.4M8.9 13.9V11.1M10.9 13.9V8.1M12.4 13.9V9.3M14.2 13.9V11.6M15.9 13.9V7.5M17.2 13.9V7.6M19.0 13.9V7.3M20.4 13.9V12.3M22.4 13.9V7.6M23.9 13.9V12.3M25.1 13.9V8.7M26.5 13.9V6.6M28.2 13.9V11.6M30.0 13.9V10.5M32.1 13.9V6.9M33.7 13.9V8.6M35.6 13.9V7.5M37.7 13.9V12.7M39.2 13.9V8.9M40.5 13.9V9.0M41.6 13.9V7.1M43.3 13.9V12.1M45.1 13.9V10.8M46.3 13.9V9.7M47.5 13.9V11.5M49.5 13.9V8.3M50.5 13.9V7.7M51.5 13.9V10.7M53.6 13.9V8.8M55.0 13.9V10.4M56.5 13.9V12.1M58.7 13.9V12.5M60.2 13.9V7.9M61.6 13.9V6.4M62.9 13.9V6.4M65.0 13.9V8.4M67.1 13.9V9.9M69.1 13.9V7.6M70.7 13.9V9.8M72.5 13.9V10.2M73.6 13.9V7.9M75.0 13.9V9.7M76.9 13.9V11.8M77.9 13.9V12.1" stroke="#22406a" stroke-width="1" fill="none" opacity=".15"/></svg>
<svg style="left:826.4px;top:443px;overflow:hidden" width="79.0" height="28.80000000000001" viewBox="0 0 79.0 28.80000000000001"><defs><filter id="stb6" x="-10%" y="-10%" width="120%" height="120%"><feGaussianBlur stdDeviation=".5"/></filter></defs><g filter="url(#stb6)"><svg x="0" y="0" width="18.8" height="28.8" overflow="hidden"><rect width="18.8" height="28.8" fill="#a9bfdc"/><ellipse cx="14.9" cy="4.7" rx="3.5" ry="1.3" fill="#f4f6f8"/><ellipse cx="0.0" cy="3.8" rx="3.4" ry="1.9" fill="#f4f6f8"/><ellipse cx="7.0" cy="4.4" rx="2.8" ry="2.0" fill="#f4f6f8"/><ellipse cx="13.7" cy="2.4" rx="3.6" ry="1.8" fill="#f4f6f8"/><path d="M0 1.4400000000000002 L18.8 0.0 L18.8 21.6 L0 21.6Z" fill="#c2bcb2"/><rect x="10.340000000000002" y="1.4400000000000002" width="8.46" height="17.28" fill="#d2cdc5"/><rect x="1.8800000000000001" y="8.64" width="6.58" height="2.3040000000000003" fill="#6f8a6a"/><rect x="1.8" y="12.4" width="2.6" height="0.8" fill="#6d6a66"/><rect x="7.6" y="14.7" width="2.7" height="0.9" fill="#6d6a66"/><rect x="0.9" y="16.7" width="2.6" height="1.0" fill="#6d6a66"/><rect x="0.9" y="6.3" width="2.3" height="0.9" fill="#6d6a66"/><rect x="8.9" y="13.1" width="1.4" height="1.2" fill="#6d6a66"/><rect x="3.4" y="19.0" width="2.8" height="1.1" fill="#6d6a66"/><rect x="6.1" y="14.9" width="2.6" height="1.5" fill="#6d6a66"/><rect x="0.3" y="9.1" width="2.2" height="0.9" fill="#6d6a66"/><path d="M0 22.464000000000002 L18.8 20.16 L18.8 28.8 L0 28.8Z" fill="#95928c"/><path d="M0 20.736 L18.8 28.224" stroke="#c8b86a" stroke-width=".7" opacity=".8"/></svg><svg x="18.5" y="0" width="17.2" height="28.8" overflow="hidden"><rect width="17.2" height="28.8" fill="#a9bfdc"/><ellipse cx="10.1" cy="0.5" rx="4.6" ry="1.6" fill="#f4f6f8"/><ellipse cx="2.0" cy="3.8" rx="2.9" ry="1.2" fill="#f4f6f8"/><ellipse cx="8.3" cy="0.8" rx="2.6" ry="2.0" fill="#f4f6f8"/><ellipse cx="12.0" cy="0.1" rx="4.3" ry="1.0" fill="#f4f6f8"/><path d="M0 5.2 L17.2 12.5 L17.2 20.736 L0 23.040000000000003Z" fill="#bab4aa"/><path d="M0 5.2 L4.3 6.2 L4.3 23.040000000000003 L0 23.040000000000003Z" fill="#9c978f"/><rect x="10.7" y="12.3" width="1.6" height="0.9" fill="#8a857d"/><rect x="2.2" y="17.3" width="1.1" height="0.9" fill="#8a857d"/><rect x="12.8" y="12.9" width="2.5" height="0.8" fill="#8a857d"/><rect x="16.8" y="16.5" width="2.0" height="1.3" fill="#8a857d"/><rect x="7.7" y="16.1" width="2.2" height="1.0" fill="#8a857d"/><rect x="8.1" y="15.2" width="1.6" height="0.7" fill="#8a857d"/><path d="M0 15.840000000000002 L17.2 14.976 L17.2 20.736 L0 22.464000000000002Z" fill="#5f78a3"/><ellipse cx="12.8" cy="17.4" rx="1.7" ry="1.4" fill="#3d5a9a" opacity=".8"/><ellipse cx="0.3" cy="18.6" rx="1.4" ry="1.4" fill="#3d5a9a" opacity=".8"/><ellipse cx="4.4" cy="18.2" rx="2.4" ry="1.0" fill="#8a4a6a" opacity=".8"/><ellipse cx="15.9" cy="18.1" rx="1.7" ry="1.3" fill="#8a4a6a" opacity=".8"/><ellipse cx="8.5" cy="19.5" rx="1.7" ry="1.3" fill="#8a4a6a" opacity=".8"/><path d="M0 22.464000000000002 L17.2 20.16 L17.2 28.8 L0 28.8Z" fill="#95928c"/><path d="M0 20.736 L17.2 28.224" stroke="#c8b86a" stroke-width=".7" opacity=".8"/></svg><svg x="35.4" y="0" width="16.3" height="28.8" overflow="hidden"><rect width="16.3" height="28.8" fill="#a9bfdc"/><ellipse cx="5.3" cy="3.8" rx="4.9" ry="2.1" fill="#f4f6f8"/><ellipse cx="6.1" cy="3.5" rx="3.0" ry="1.5" fill="#f4f6f8"/><ellipse cx="8.0" cy="4.6" rx="4.8" ry="1.3" fill="#f4f6f8"/><ellipse cx="0.1" cy="2.6" rx="2.2" ry="1.0" fill="#f4f6f8"/><path d="M0 7.5 L16.3 9.1 L16.3 20.736 L0 23.040000000000003Z" fill="#bab4aa"/><path d="M0 7.5 L4.075 8.5 L4.075 23.040000000000003 L0 23.040000000000003Z" fill="#9c978f"/><rect x="11.7" y="12.7" width="2.4" height="1.3" fill="#8a857d"/><rect x="1.0" y="11.5" width="2.4" height="1.1" fill="#8a857d"/><rect x="6.9" y="15.7" width="2.2" height="1.0" fill="#8a857d"/><rect x="7.6" y="10.8" width="1.5" height="0.7" fill="#8a857d"/><rect x="10.2" y="14.4" width="1.2" height="1.1" fill="#8a857d"/><rect x="1.6" y="10.8" width="2.0" height="1.0" fill="#8a857d"/><path d="M0 15.840000000000002 L16.3 14.976 L16.3 20.736 L0 22.464000000000002Z" fill="#5f78a3"/><ellipse cx="14.7" cy="19.0" rx="2.1" ry="0.9" fill="#b85a5a" opacity=".8"/><ellipse cx="2.6" cy="19.0" rx="1.4" ry="1.5" fill="#8a4a6a" opacity=".8"/><ellipse cx="8.1" cy="16.2" rx="2.0" ry="1.5" fill="#3d5a9a" opacity=".8"/><ellipse cx="14.8" cy="18.2" rx="2.2" ry="1.2" fill="#d6d6d6" opacity=".8"/><ellipse cx="7.8" cy="18.8" rx="2.2" ry="1.0" fill="#d6d6d6" opacity=".8"/><path d="M0 22.464000000000002 L16.3 20.16 L16.3 28.8 L0 28.8Z" fill="#95928c"/><path d="M0 20.736 L16.3 28.224" stroke="#c8b86a" stroke-width=".7" opacity=".8"/></svg><svg x="51.4" y="0" width="16.800000000000008" height="28.8" overflow="hidden"><rect width="16.800000000000008" height="28.8" fill="#a9bfdc"/><ellipse cx="4.8" cy="5.4" rx="2.3" ry="2.0" fill="#f4f6f8"/><ellipse cx="4.7" cy="5.6" rx="3.3" ry="2.1" fill="#f4f6f8"/><ellipse cx="0.5" cy="0.5" rx="4.4" ry="1.8" fill="#f4f6f8"/><ellipse cx="9.0" cy="0.2" rx="2.5" ry="1.4" fill="#f4f6f8"/><path d="M0 3.7 L16.800000000000008 12.9 L16.800000000000008 20.736 L0 23.040000000000003Z" fill="#bab4aa"/><path d="M0 3.7 L4.200000000000002 4.7 L4.200000000000002 23.040000000000003 L0 23.040000000000003Z" fill="#9c978f"/><rect x="12.9" y="16.9" width="2.1" height="0.9" fill="#8a857d"/><rect x="1.3" y="15.3" width="1.2" height="1.0" fill="#8a857d"/><rect x="7.8" y="13.6" width="1.1" height="0.7" fill="#8a857d"/><rect x="8.7" y="10.3" width="1.8" height="0.7" fill="#8a857d"/><rect x="4.7" y="11.2" width="1.9" height="0.9" fill="#8a857d"/><rect x="3.7" y="11.7" width="1.8" height="1.3" fill="#8a857d"/><path d="M0 15.840000000000002 L16.800000000000008 14.976 L16.800000000000008 20.736 L0 22.464000000000002Z" fill="#5f78a3"/><ellipse cx="7.0" cy="16.9" rx="1.5" ry="1.0" fill="#b85a5a" opacity=".8"/><ellipse cx="13.2" cy="18.7" rx="1.3" ry="1.1" fill="#8a4a6a" opacity=".8"/><ellipse cx="8.8" cy="16.2" rx="2.3" ry="1.2" fill="#3d5a9a" opacity=".8"/><ellipse cx="12.0" cy="19.1" rx="2.2" ry="1.1" fill="#3d5a9a" opacity=".8"/><ellipse cx="16.3" cy="16.9" rx="1.9" ry="1.1" fill="#b85a5a" opacity=".8"/><rect x="10.080000000000004" y="2.3040000000000003" width="6.720000000000003" height="18.720000000000002" fill="#9aa4b4"/><path d="M0 22.464000000000002 L16.800000000000008 20.16 L16.800000000000008 28.8 L0 28.8Z" fill="#95928c"/><path d="M0 20.736 L16.800000000000008 28.224" stroke="#c8b86a" stroke-width=".7" opacity=".8"/></svg><svg x="67.9" y="0" width="11.399999999999995" height="28.8" overflow="hidden"><rect width="11.399999999999995" height="28.8" fill="#a9bfdc"/><ellipse cx="0.1" cy="2.7" rx="2.2" ry="1.8" fill="#f4f6f8"/><ellipse cx="6.2" cy="3.9" rx="3.8" ry="1.1" fill="#f4f6f8"/><ellipse cx="2.6" cy="2.3" rx="4.3" ry="1.8" fill="#f4f6f8"/><ellipse cx="10.8" cy="0.5" rx="2.2" ry="1.7" fill="#f4f6f8"/><path d="M0 3.8 L11.399999999999995 12.5 L11.399999999999995 20.736 L0 23.040000000000003Z" fill="#bab4aa"/><path d="M0 3.8 L2.8499999999999988 4.8 L2.8499999999999988 23.040000000000003 L0 23.040000000000003Z" fill="#9c978f"/><rect x="5.0" y="17.0" width="2.1" height="0.7" fill="#8a857d"/><rect x="7.8" y="10.3" width="2.3" height="1.4" fill="#8a857d"/><rect x="4.8" y="15.2" width="1.4" height="0.8" fill="#8a857d"/><rect x="9.3" y="14.8" width="1.8" height="1.1" fill="#8a857d"/><rect x="3.2" y="10.2" width="1.8" height="1.2" fill="#8a857d"/><rect x="11.1" y="17.1" width="2.3" height="0.9" fill="#8a857d"/><path d="M0 15.840000000000002 L11.399999999999995 14.976 L11.399999999999995 20.736 L0 22.464000000000002Z" fill="#5f78a3"/><ellipse cx="5.9" cy="18.8" rx="2.0" ry="1.1" fill="#b85a5a" opacity=".8"/><ellipse cx="2.6" cy="19.6" rx="1.5" ry="1.4" fill="#d6d6d6" opacity=".8"/><ellipse cx="5.0" cy="20.0" rx="1.1" ry="0.9" fill="#b85a5a" opacity=".8"/><ellipse cx="3.8" cy="18.4" rx="1.7" ry="1.0" fill="#d6d6d6" opacity=".8"/><ellipse cx="2.6" cy="16.7" rx="1.8" ry="1.0" fill="#8a4a6a" opacity=".8"/><path d="M0 22.464000000000002 L11.399999999999995 20.16 L11.399999999999995 28.8 L0 28.8Z" fill="#95928c"/><path d="M0 20.736 L11.399999999999995 28.224" stroke="#c8b86a" stroke-width=".7" opacity=".8"/></svg></g></svg>
<div class="t" style="left:828.6999999999999px;top:433.91px;font-size:7.9px;color:#b9c8df;font-weight:normal;letter-spacing:-0.15px;">IMG_1233</div>
<div class="a" style="left:905.7px;top:432.7px;width:13.299999999999955px;height:53.0px;background:#6d6d6d;border-radius:2.5px"></div>
<div class="a" style="left:810.3px;top:364.75px;width:109.7px;height:61.75px;background:#3a3a3a;border-radius:4px"></div>
<div class="a" style="left:811.9px;top:371.9px;width:21.0px;height:53.400000000000034px;background:#6d6d6d;border-radius:2.5px"></div>
<svg style="left:818.1px;top:374.2px;" width="9" height="8" viewBox="0 0 9 8"><path d="M.3 .3L4.3 3.6 8.3 .3v7.2L4.3 4.2.3 7.5z" fill="#f0f0f0"/></svg>
<div class="a" style="left:833.5px;top:371.9px;width:71.89999999999998px;height:53.400000000000034px;background:#1d365b;"></div>
<svg style="left:833.5px;top:411.1px;overflow:hidden" width="71.89999999999998" height="14.199999999999989" viewBox="0 0 71.89999999999998 14.199999999999989"><path d="M0.0 14.2V11.0M1.2 14.2V8.8M2.3 14.2V9.6M3.7 14.2V12.8M5.3 14.2V12.9M6.8 14.2V12.7M7.9 14.2V10.3M9.9 14.2V12.4M11.2 14.2V8.9M13.3 14.2V9.3M14.8 14.2V6.6M15.9 14.2V7.4M17.2 14.2V12.2M18.4 14.2V11.1M20.3 14.2V12.0M22.0 14.2V8.8M23.5 14.2V9.5M24.6 14.2V12.8M25.8 14.2V8.6M27.3 14.2V11.1M29.0 14.2V10.1M30.4 14.2V7.8M32.2 14.2V11.5M33.9 14.2V9.6M36.0 14.2V8.2M37.3 14.2V6.5M38.5 14.2V10.4M40.4 14.2V12.2M41.9 14.2V12.9M43.7 14.2V8.0M45.4 14.2V7.2M46.8 14.2V8.5M48.5 14.2V9.3M50.1 14.2V7.5M52.2 14.2V10.0M54.0 14.2V12.8M55.8 14.2V8.8M58.0 14.2V7.6M59.4 14.2V10.6M61.2 14.2V13.0M62.7 14.2V12.1M63.9 14.2V12.8M65.8 14.2V12.3M67.1 14.2V10.5M69.1 14.2V12.7M70.7 14.2V9.5" stroke="#22406a" stroke-width="1" fill="none" opacity=".15"/></svg>
<svg style="left:833.5px;top:382.6px;overflow:hidden" width="71.89999999999998" height="28.5" viewBox="0 0 71.89999999999998 28.5"><defs><filter id="stb7" x="-10%" y="-10%" width="120%" height="120%"><feGaussianBlur stdDeviation=".5"/></filter></defs><g filter="url(#stb7)"><svg x="0" y="0" width="18.8" height="28.5" overflow="hidden"><rect width="18.8" height="28.5" fill="#a9bfdc"/><ellipse cx="6.1" cy="0.9" rx="4.0" ry="1.1" fill="#f4f6f8"/><ellipse cx="10.1" cy="2.1" rx="2.2" ry="1.6" fill="#f4f6f8"/><ellipse cx="0.7" cy="2.5" rx="2.2" ry="1.1" fill="#f4f6f8"/><ellipse cx="8.0" cy="4.7" rx="2.4" ry="1.3" fill="#f4f6f8"/><path d="M0 1.425 L18.8 0.0 L18.8 21.375 L0 21.375Z" fill="#c2bcb2"/><rect x="10.340000000000002" y="1.425" width="8.46" height="17.099999999999998" fill="#d2cdc5"/><rect x="1.8800000000000001" y="8.549999999999999" width="6.58" height="2.2800000000000002" fill="#6f8a6a"/><rect x="5.9" y="19.1" width="2.2" height="1.0" fill="#6d6a66"/><rect x="9.2" y="3.6" width="2.7" height="0.9" fill="#6d6a66"/><rect x="1.4" y="4.9" width="1.6" height="1.3" fill="#6d6a66"/><rect x="1.7" y="12.8" width="2.3" height="0.9" fill="#6d6a66"/><rect x="5.1" y="3.9" width="1.1" height="0.8" fill="#6d6a66"/><rect x="6.4" y="10.2" width="1.6" height="1.1" fill="#6d6a66"/><rect x="4.3" y="8.0" width="2.6" height="1.2" fill="#6d6a66"/><rect x="2.3" y="12.7" width="2.1" height="1.4" fill="#6d6a66"/><path d="M0 22.23 L18.8 19.95 L18.8 28.5 L0 28.5Z" fill="#95928c"/><path d="M0 20.52 L18.8 27.93" stroke="#c8b86a" stroke-width=".7" opacity=".8"/></svg><svg x="18.5" y="0" width="17.2" height="28.5" overflow="hidden"><rect width="17.2" height="28.5" fill="#a9bfdc"/><ellipse cx="12.5" cy="1.6" rx="4.9" ry="1.1" fill="#f4f6f8"/><ellipse cx="7.2" cy="4.3" rx="2.5" ry="1.6" fill="#f4f6f8"/><ellipse cx="0.7" cy="3.8" rx="4.3" ry="1.7" fill="#f4f6f8"/><ellipse cx="15.1" cy="1.8" rx="4.1" ry="1.7" fill="#f4f6f8"/><path d="M0 6.4 L17.2 10.5 L17.2 20.52 L0 22.8Z" fill="#bab4aa"/><path d="M0 6.4 L4.3 7.4 L4.3 22.8 L0 22.8Z" fill="#9c978f"/><rect x="14.4" y="16.7" width="1.7" height="1.1" fill="#8a857d"/><rect x="1.0" y="15.0" width="2.0" height="1.4" fill="#8a857d"/><rect x="14.1" y="12.0" width="1.6" height="1.1" fill="#8a857d"/><rect x="0.4" y="13.3" width="1.3" height="0.7" fill="#8a857d"/><rect x="1.0" y="15.4" width="1.2" height="0.8" fill="#8a857d"/><rect x="6.7" y="16.2" width="1.1" height="1.0" fill="#8a857d"/><path d="M0 15.675 L17.2 14.82 L17.2 20.52 L0 22.23Z" fill="#5f78a3"/><ellipse cx="9.5" cy="20.0" rx="2.2" ry="1.5" fill="#d6d6d6" opacity=".8"/><ellipse cx="12.2" cy="20.5" rx="2.0" ry="1.1" fill="#3d5a9a" opacity=".8"/><ellipse cx="2.6" cy="16.8" rx="1.3" ry="1.0" fill="#8a4a6a" opacity=".8"/><ellipse cx="14.3" cy="16.8" rx="1.4" ry="0.9" fill="#d6d6d6" opacity=".8"/><ellipse cx="10.5" cy="17.4" rx="1.2" ry="1.5" fill="#b85a5a" opacity=".8"/><path d="M0 22.23 L17.2 19.95 L17.2 28.5 L0 28.5Z" fill="#95928c"/><path d="M0 20.52 L17.2 27.93" stroke="#c8b86a" stroke-width=".7" opacity=".8"/></svg><svg x="35.4" y="0" width="16.3" height="28.5" overflow="hidden"><rect width="16.3" height="28.5" fill="#a9bfdc"/><ellipse cx="7.4" cy="5.0" rx="4.9" ry="1.8" fill="#f4f6f8"/><ellipse cx="9.1" cy="2.3" rx="3.2" ry="1.6" fill="#f4f6f8"/><ellipse cx="6.5" cy="1.1" rx="5.0" ry="1.5" fill="#f4f6f8"/><ellipse cx="1.8" cy="3.4" rx="2.3" ry="1.7" fill="#f4f6f8"/><path d="M0 6.2 L16.3 12.6 L16.3 20.52 L0 22.8Z" fill="#bab4aa"/><path d="M0 6.2 L4.075 7.2 L4.075 22.8 L0 22.8Z" fill="#9c978f"/><rect x="10.0" y="10.5" width="1.3" height="0.9" fill="#8a857d"/><rect x="10.3" y="16.8" width="1.9" height="1.0" fill="#8a857d"/><rect x="1.9" y="13.5" width="2.5" height="1.0" fill="#8a857d"/><rect x="5.1" y="11.0" width="2.1" height="1.2" fill="#8a857d"/><rect x="7.8" y="14.9" width="1.8" height="0.8" fill="#8a857d"/><rect x="15.5" y="12.6" width="2.0" height="1.3" fill="#8a857d"/><path d="M0 15.675 L16.3 14.82 L16.3 20.52 L0 22.23Z" fill="#5f78a3"/><ellipse cx="12.4" cy="17.3" rx="2.0" ry="0.9" fill="#d6d6d6" opacity=".8"/><ellipse cx="8.4" cy="20.1" rx="1.5" ry="1.0" fill="#d6d6d6" opacity=".8"/><ellipse cx="10.4" cy="18.8" rx="2.2" ry="1.4" fill="#3d5a9a" opacity=".8"/><ellipse cx="13.1" cy="19.7" rx="2.1" ry="1.0" fill="#8a4a6a" opacity=".8"/><ellipse cx="5.8" cy="16.1" rx="1.0" ry="1.0" fill="#d6d6d6" opacity=".8"/><path d="M0 22.23 L16.3 19.95 L16.3 28.5 L0 28.5Z" fill="#95928c"/><path d="M0 20.52 L16.3 27.93" stroke="#c8b86a" stroke-width=".7" opacity=".8"/></svg><svg x="51.4" y="0" width="16.800000000000008" height="28.5" overflow="hidden"><rect width="16.800000000000008" height="28.5" fill="#a9bfdc"/><ellipse cx="3.3" cy="3.4" rx="3.0" ry="2.0" fill="#f4f6f8"/><ellipse cx="12.1" cy="2.0" rx="4.9" ry="1.1" fill="#f4f6f8"/><ellipse cx="1.7" cy="2.7" rx="3.0" ry="1.6" fill="#f4f6f8"/><ellipse cx="16.6" cy="3.5" rx="2.0" ry="2.1" fill="#f4f6f8"/><path d="M0 5.2 L16.800000000000008 11.3 L16.800000000000008 20.52 L0 22.8Z" fill="#bab4aa"/><path d="M0 5.2 L4.200000000000002 6.2 L4.200000000000002 22.8 L0 22.8Z" fill="#9c978f"/><rect x="14.0" y="10.8" width="1.6" height="1.2" fill="#8a857d"/><rect x="3.3" y="16.3" width="1.7" height="1.1" fill="#8a857d"/><rect x="1.5" y="16.7" width="2.1" height="1.0" fill="#8a857d"/><rect x="12.5" y="10.6" width="1.2" height="1.4" fill="#8a857d"/><rect x="0.5" y="14.2" width="1.7" height="1.1" fill="#8a857d"/><rect x="10.3" y="14.2" width="1.7" height="1.3" fill="#8a857d"/><path d="M0 15.675 L16.800000000000008 14.82 L16.800000000000008 20.52 L0 22.23Z" fill="#5f78a3"/><ellipse cx="2.6" cy="18.5" rx="1.0" ry="1.4" fill="#b85a5a" opacity=".8"/><ellipse cx="8.8" cy="20.2" rx="1.7" ry="1.5" fill="#3d5a9a" opacity=".8"/><ellipse cx="0.5" cy="16.9" rx="1.8" ry="1.4" fill="#d6d6d6" opacity=".8"/><ellipse cx="4.4" cy="17.9" rx="1.2" ry="1.5" fill="#d6d6d6" opacity=".8"/><ellipse cx="15.1" cy="19.0" rx="2.2" ry="1.2" fill="#3d5a9a" opacity=".8"/><rect x="10.080000000000004" y="2.2800000000000002" width="6.720000000000003" height="18.525000000000002" fill="#9aa4b4"/><path d="M0 22.23 L16.800000000000008 19.95 L16.800000000000008 28.5 L0 28.5Z" fill="#95928c"/><path d="M0 20.52 L16.800000000000008 27.93" stroke="#c8b86a" stroke-width=".7" opacity=".8"/></svg><svg x="67.9" y="0" width="4.3" height="28.5" overflow="hidden"><rect width="4.3" height="28.5" fill="#a9bfdc"/><ellipse cx="2.3" cy="3.0" rx="2.1" ry="1.5" fill="#f4f6f8"/><ellipse cx="0.8" cy="0.0" rx="4.4" ry="1.2" fill="#f4f6f8"/><ellipse cx="2.0" cy="4.1" rx="3.7" ry="1.4" fill="#f4f6f8"/><ellipse cx="2.2" cy="3.2" rx="4.4" ry="1.1" fill="#f4f6f8"/><path d="M0 6.3 L4.3 9.6 L4.3 20.52 L0 22.8Z" fill="#bab4aa"/><path d="M0 6.3 L1.075 7.3 L1.075 22.8 L0 22.8Z" fill="#9c978f"/><rect x="1.2" y="15.5" width="1.8" height="1.0" fill="#8a857d"/><rect x="3.3" y="16.5" width="1.7" height="1.1" fill="#8a857d"/><rect x="2.2" y="13.6" width="2.0" height="1.0" fill="#8a857d"/><rect x="2.3" y="13.4" width="2.4" height="1.2" fill="#8a857d"/><rect x="3.8" y="16.7" width="1.4" height="1.0" fill="#8a857d"/><rect x="4.1" y="16.0" width="1.2" height="0.7" fill="#8a857d"/><path d="M0 15.675 L4.3 14.82 L4.3 20.52 L0 22.23Z" fill="#5f78a3"/><ellipse cx="1.9" cy="16.3" rx="1.4" ry="0.9" fill="#d6d6d6" opacity=".8"/><ellipse cx="3.4" cy="20.1" rx="1.2" ry="1.4" fill="#d6d6d6" opacity=".8"/><ellipse cx="0.6" cy="20.0" rx="2.5" ry="1.0" fill="#b85a5a" opacity=".8"/><ellipse cx="1.7" cy="18.2" rx="2.5" ry="1.5" fill="#3d5a9a" opacity=".8"/><ellipse cx="3.0" cy="20.5" rx="1.6" ry="1.1" fill="#d6d6d6" opacity=".8"/><path d="M0 22.23 L4.3 19.95 L4.3 28.5 L0 28.5Z" fill="#95928c"/><path d="M0 20.52 L4.3 27.93" stroke="#c8b86a" stroke-width=".7" opacity=".8"/></svg></g></svg>
<div class="t" style="left:835.8px;top:373.11px;font-size:7.9px;color:#b9c8df;font-weight:normal;letter-spacing:-0.15px;">IMG_1233</div>
<div class="a" style="left:905.7px;top:371.9px;width:13.299999999999955px;height:53.400000000000034px;background:#6d6d6d;border-radius:2.5px"></div>
<div class="a" style="left:810.3px;top:492.9px;width:110.3px;height:62.7px;background:#3a3a3a;border-radius:4px"></div>
<div class="a" style="left:811.7px;top:500.9px;width:17.699999999999932px;height:52.89999999999998px;background:#6d6d6d;border-radius:2.5px"></div>
<svg style="left:816.25px;top:503.2px;" width="9" height="8" viewBox="0 0 9 8"><path d="M.3 .3L4.3 3.6 8.3 .3v7.2L4.3 4.2.3 7.5z" fill="#f0f0f0"/></svg>
<div class="a" style="left:829.7px;top:500.9px;width:75.5px;height:52.89999999999998px;background:#1d365b;"></div>
<svg style="left:829.7px;top:540px;overflow:hidden" width="75.5" height="13.799999999999955" viewBox="0 0 75.5 13.799999999999955"><path d="M0.0 13.8V11.3M2.2 13.8V12.0M4.0 13.8V12.2M5.3 13.8V6.2M6.5 13.8V8.6M8.1 13.8V9.8M9.7 13.8V11.5M11.7 13.8V12.2M13.0 13.8V12.7M14.3 13.8V10.1M16.4 13.8V10.3M17.5 13.8V11.1M19.7 13.8V12.4M21.4 13.8V10.3M23.2 13.8V10.6M25.1 13.8V9.5M26.8 13.8V6.9M28.5 13.8V11.9M29.6 13.8V6.6M31.2 13.8V11.5M33.3 13.8V9.0M35.2 13.8V7.0M36.6 13.8V10.4M38.6 13.8V11.9M40.5 13.8V12.2M42.4 13.8V8.2M44.5 13.8V7.2M46.1 13.8V11.5M47.3 13.8V9.3M48.9 13.8V12.3M51.0 13.8V9.5M52.8 13.8V11.4M54.1 13.8V12.7M55.5 13.8V11.0M57.0 13.8V10.3M59.0 13.8V6.9M60.2 13.8V10.2M61.4 13.8V8.4M63.6 13.8V11.5M65.5 13.8V10.8M66.6 13.8V7.8M68.0 13.8V11.7M69.5 13.8V11.3M71.0 13.8V9.9M72.5 13.8V8.9M73.8 13.8V12.2" stroke="#22406a" stroke-width="1" fill="none" opacity=".15"/></svg>
<svg style="left:829.7px;top:511px;overflow:hidden" width="75.5" height="29" viewBox="0 0 75.5 29"><defs><filter id="stb8" x="-10%" y="-10%" width="120%" height="120%"><feGaussianBlur stdDeviation=".5"/></filter></defs><g filter="url(#stb8)"><svg x="0" y="0" width="28.3" height="29" overflow="hidden"><rect width="28.3" height="29" fill="#a9bfdc"/><ellipse cx="6.4" cy="5.6" rx="2.4" ry="1.8" fill="#f4f6f8"/><ellipse cx="2.4" cy="1.4" rx="5.0" ry="1.3" fill="#f4f6f8"/><ellipse cx="18.2" cy="2.7" rx="3.4" ry="1.6" fill="#f4f6f8"/><ellipse cx="5.4" cy="4.8" rx="2.3" ry="1.3" fill="#f4f6f8"/><path d="M0 1.4500000000000002 L28.3 0.0 L28.3 21.75 L0 21.75Z" fill="#c2bcb2"/><rect x="15.565000000000001" y="1.4500000000000002" width="12.735000000000001" height="17.4" fill="#d2cdc5"/><rect x="2.83" y="8.7" width="9.905" height="2.32" fill="#6f8a6a"/><rect x="0.3" y="7.5" width="1.8" height="1.4" fill="#6d6a66"/><rect x="5.4" y="4.9" width="1.5" height="1.5" fill="#6d6a66"/><rect x="0.9" y="13.7" width="1.8" height="1.2" fill="#6d6a66"/><rect x="4.8" y="14.9" width="2.0" height="1.2" fill="#6d6a66"/><rect x="12.8" y="13.0" width="1.3" height="0.7" fill="#6d6a66"/><rect x="13.4" y="11.4" width="1.4" height="1.5" fill="#6d6a66"/><rect x="8.2" y="15.6" width="2.8" height="0.9" fill="#6d6a66"/><rect x="5.0" y="18.2" width="1.3" height="1.3" fill="#6d6a66"/><path d="M0 22.62 L28.3 20.299999999999997 L28.3 29 L0 29Z" fill="#95928c"/><path d="M0 20.88 L28.3 28.419999999999998" stroke="#c8b86a" stroke-width=".7" opacity=".8"/></svg><svg x="28" y="0" width="15.8" height="29" overflow="hidden"><rect width="15.8" height="29" fill="#a9bfdc"/><ellipse cx="1.5" cy="4.0" rx="4.1" ry="2.1" fill="#f4f6f8"/><ellipse cx="13.3" cy="2.9" rx="2.6" ry="1.2" fill="#f4f6f8"/><ellipse cx="8.4" cy="3.0" rx="2.2" ry="2.1" fill="#f4f6f8"/><ellipse cx="8.0" cy="4.1" rx="2.7" ry="1.3" fill="#f4f6f8"/><path d="M0 3.5 L15.8 10.2 L15.8 20.88 L0 23.200000000000003Z" fill="#bab4aa"/><path d="M0 3.5 L3.95 4.5 L3.95 23.200000000000003 L0 23.200000000000003Z" fill="#9c978f"/><rect x="4.2" y="13.2" width="1.6" height="1.3" fill="#8a857d"/><rect x="14.1" y="11.4" width="1.6" height="0.7" fill="#8a857d"/><rect x="10.5" y="17.2" width="1.3" height="1.2" fill="#8a857d"/><rect x="4.7" y="10.2" width="2.1" height="0.9" fill="#8a857d"/><rect x="2.7" y="13.3" width="1.3" height="0.9" fill="#8a857d"/><rect x="7.0" y="13.2" width="1.9" height="0.8" fill="#8a857d"/><path d="M0 15.950000000000001 L15.8 15.08 L15.8 20.88 L0 22.62Z" fill="#5f78a3"/><ellipse cx="1.5" cy="16.6" rx="1.2" ry="1.2" fill="#d6d6d6" opacity=".8"/><ellipse cx="2.4" cy="20.6" rx="1.7" ry="0.9" fill="#b85a5a" opacity=".8"/><ellipse cx="3.0" cy="20.5" rx="1.5" ry="1.3" fill="#b85a5a" opacity=".8"/><ellipse cx="11.8" cy="17.9" rx="2.4" ry="0.8" fill="#8a4a6a" opacity=".8"/><ellipse cx="3.3" cy="20.3" rx="1.0" ry="1.6" fill="#3d5a9a" opacity=".8"/><path d="M0 22.62 L15.8 20.299999999999997 L15.8 29 L0 29Z" fill="#95928c"/><path d="M0 20.88 L15.8 28.419999999999998" stroke="#c8b86a" stroke-width=".7" opacity=".8"/></svg><svg x="43.5" y="0" width="17.8" height="29" overflow="hidden"><rect width="17.8" height="29" fill="#a9bfdc"/><ellipse cx="3.2" cy="5.6" rx="3.3" ry="1.1" fill="#f4f6f8"/><ellipse cx="10.8" cy="2.9" rx="3.4" ry="1.2" fill="#f4f6f8"/><ellipse cx="2.2" cy="3.4" rx="3.4" ry="1.2" fill="#f4f6f8"/><ellipse cx="7.8" cy="4.2" rx="4.1" ry="1.6" fill="#f4f6f8"/><path d="M0 5.5 L17.8 10.3 L17.8 20.88 L0 23.200000000000003Z" fill="#bab4aa"/><path d="M0 5.5 L4.45 6.5 L4.45 23.200000000000003 L0 23.200000000000003Z" fill="#9c978f"/><rect x="4.0" y="11.6" width="1.7" height="0.7" fill="#8a857d"/><rect x="12.9" y="15.3" width="1.9" height="0.6" fill="#8a857d"/><rect x="6.5" y="13.3" width="1.1" height="1.4" fill="#8a857d"/><rect x="13.5" y="13.8" width="2.1" height="0.8" fill="#8a857d"/><rect x="4.1" y="14.0" width="2.1" height="1.1" fill="#8a857d"/><rect x="0.1" y="14.6" width="2.4" height="1.2" fill="#8a857d"/><path d="M0 15.950000000000001 L17.8 15.08 L17.8 20.88 L0 22.62Z" fill="#5f78a3"/><ellipse cx="16.5" cy="20.8" rx="1.3" ry="1.0" fill="#8a4a6a" opacity=".8"/><ellipse cx="17.4" cy="18.0" rx="2.4" ry="1.5" fill="#d6d6d6" opacity=".8"/><ellipse cx="11.1" cy="20.7" rx="2.2" ry="1.0" fill="#b85a5a" opacity=".8"/><ellipse cx="3.5" cy="18.0" rx="2.4" ry="1.5" fill="#d6d6d6" opacity=".8"/><ellipse cx="3.7" cy="18.1" rx="1.6" ry="1.5" fill="#d6d6d6" opacity=".8"/><rect x="10.68" y="2.32" width="7.120000000000001" height="18.85" fill="#9aa4b4"/><path d="M0 22.62 L17.8 20.299999999999997 L17.8 29 L0 29Z" fill="#95928c"/><path d="M0 20.88 L17.8 28.419999999999998" stroke="#c8b86a" stroke-width=".7" opacity=".8"/></svg><svg x="61" y="0" width="14.8" height="29" overflow="hidden"><rect width="14.8" height="29" fill="#a9bfdc"/><ellipse cx="12.1" cy="3.5" rx="3.1" ry="1.5" fill="#f4f6f8"/><ellipse cx="7.3" cy="3.1" rx="4.5" ry="1.3" fill="#f4f6f8"/><ellipse cx="1.0" cy="4.3" rx="2.8" ry="1.5" fill="#f4f6f8"/><ellipse cx="1.7" cy="4.8" rx="2.8" ry="1.3" fill="#f4f6f8"/><path d="M0 7.7 L14.8 10.9 L14.8 20.88 L0 23.200000000000003Z" fill="#bab4aa"/><path d="M0 7.7 L3.7 8.7 L3.7 23.200000000000003 L0 23.200000000000003Z" fill="#9c978f"/><rect x="4.1" y="16.6" width="1.6" height="0.9" fill="#8a857d"/><rect x="14.3" y="15.9" width="2.1" height="0.8" fill="#8a857d"/><rect x="12.0" y="14.5" width="2.2" height="0.9" fill="#8a857d"/><rect x="11.6" y="15.9" width="1.6" height="1.1" fill="#8a857d"/><rect x="11.5" y="17.3" width="2.4" height="1.2" fill="#8a857d"/><rect x="2.0" y="14.6" width="2.0" height="0.7" fill="#8a857d"/><path d="M0 15.950000000000001 L14.8 15.08 L14.8 20.88 L0 22.62Z" fill="#5f78a3"/><ellipse cx="6.8" cy="20.3" rx="2.4" ry="1.5" fill="#b85a5a" opacity=".8"/><ellipse cx="1.9" cy="17.9" rx="2.5" ry="0.9" fill="#b85a5a" opacity=".8"/><ellipse cx="12.4" cy="16.6" rx="1.2" ry="1.4" fill="#b85a5a" opacity=".8"/><ellipse cx="12.1" cy="19.6" rx="1.9" ry="1.1" fill="#d6d6d6" opacity=".8"/><ellipse cx="11.0" cy="20.7" rx="1.1" ry="1.5" fill="#d6d6d6" opacity=".8"/><path d="M0 22.62 L14.8 20.299999999999997 L14.8 29 L0 29Z" fill="#95928c"/><path d="M0 20.88 L14.8 28.419999999999998" stroke="#c8b86a" stroke-width=".7" opacity=".8"/></svg></g></svg>
<div class="t" style="left:832.0px;top:502.11px;font-size:7.9px;color:#b9c8df;font-weight:normal;letter-spacing:-0.15px;">IMG_1233</div>
<div class="a" style="left:905.6px;top:500.9px;width:13.199999999999932px;height:52.89999999999998px;background:#6d6d6d;border-radius:2.5px"></div>
<div class="a" style="left:250px;top:430.7px;width:2px;height:1.7px;background:#e8e8e8;"></div>
<div class="a" style="left:826.7px;top:430px;width:2.4px;height:1.9px;background:#e8e8e8;"></div>
<div class="a" style="left:826.7px;top:486.5px;width:2.4px;height:1.7px;background:#e8e8e8;"></div>
<div class="a" style="left:3.2px;top:430.3px;width:1.6px;height:1.5px;background:#9a6cf0;"></div>
<div class="a" style="left:141px;top:430.3px;width:1.6px;height:1.5px;background:#9a6cf0;"></div>
<div class="a" style="left:446px;top:430.3px;width:1.8px;height:1.5px;background:#9a6cf0;"></div>
<div class="a" style="left:3.4px;top:486.9px;width:1.5px;height:1.5px;background:#e8e8e8;"></div>
<div class="a" style="left:0px;top:561px;width:922.4px;height:28px;background:#3a3a3a;border-radius:0 4px 0 0"></div>
<div class="a" style="left:3.5px;top:569px;width:13.100000000000001px;height:19px;background:#6d6d6d;border-radius:2px"></div>
<svg style="left:5.750000000000001px;top:571.3px;" width="9" height="8" viewBox="0 0 9 8"><path d="M.3 .3L4.3 3.6 8.3 .3v7.2L4.3 4.2.3 7.5z" fill="#f0f0f0"/></svg>
<div class="a" style="left:17px;top:569px;width:901.8px;height:20px;background:#1d365b;"></div>
<div class="a" style="left:919.8px;top:569.8px;width:1.4px;height:19px;background:#9a9a9a;"></div>
<div class="t" style="left:20.5px;top:570.31px;font-size:7.9px;color:#b9c8df;font-weight:normal;letter-spacing:-0.25px;">Central_Park</div>
<svg style="left:17px;top:569px;overflow:hidden" width="902" height="20" viewBox="0 0 902 20"><path d="M0 20 L0.0 14.01 L0.8 13.56 L1.6 14.72 L2.4 13.97 L3.2 14.28 L4.0 14.18 L4.8 14.43 L5.6 15.00 L6.4 13.98 L7.2 13.50 L8.0 14.90 L8.8 15.09 L9.6 14.75 L10.4 14.01 L11.2 13.22 L12.0 15.18 L12.8 14.12 L13.6 14.41 L14.4 13.92 L15.2 15.04 L16.0 14.78 L16.8 15.17 L17.6 13.50 L18.4 14.15 L19.2 13.36 L20.0 13.37 L20.8 13.21 L21.6 14.25 L22.4 13.56 L23.2 13.72 L24.0 14.73 L24.8 14.59 L25.6 13.46 L26.4 14.40 L27.2 14.42 L28.0 13.39 L28.8 13.55 L29.6 13.49 L30.4 14.32 L31.2 14.80 L32.0 13.43 L32.8 13.57 L33.6 13.78 L34.4 13.30 L35.2 14.00 L36.0 14.00 L36.8 13.94 L37.6 14.96 L38.4 14.64 L39.2 14.09 L40.0 14.51 L40.8 13.82 L41.6 14.64 L42.4 14.82 L43.2 13.70 L44.0 14.70 L44.8 14.08 L45.6 13.71 L46.4 15.01 L47.2 14.78 L48.0 15.06 L48.8 14.96 L49.6 14.52 L50.4 13.76 L51.2 14.41 L52.0 14.53 L52.8 13.96 L53.6 13.89 L54.4 14.59 L55.2 13.59 L56.0 13.54 L56.8 14.51 L57.6 14.93 L58.4 14.92 L59.2 14.00 L60.0 12.95 L60.8 14.54 L61.6 13.53 L62.4 14.09 L63.2 14.70 L64.0 14.14 L64.8 14.44 L65.6 14.73 L66.4 12.50 L67.2 13.82 L68.0 15.12 L68.8 13.94 L69.6 15.10 L70.4 13.79 L71.2 15.18 L72.0 14.00 L72.8 14.12 L73.6 13.46 L74.4 14.90 L75.2 14.04 L76.0 13.56 L76.8 13.75 L77.6 14.98 L78.4 14.85 L79.2 14.16 L80.0 14.98 L80.8 13.54 L81.6 13.68 L82.4 13.23 L83.2 14.19 L84.0 14.67 L84.8 14.27 L85.6 14.37 L86.4 13.53 L87.2 11.95 L88.0 13.66 L88.8 13.52 L89.6 14.59 L90.4 14.81 L91.2 13.54 L92.0 13.93 L92.8 13.60 L93.6 14.60 L94.4 14.83 L95.2 14.56 L96.0 14.85 L96.8 13.37 L97.6 14.49 L98.4 14.94 L99.2 14.43 L100.0 14.42 L100.8 13.31 L101.6 14.45 L102.4 13.56 L103.2 14.19 L104.0 13.28 L104.8 14.56 L105.6 14.79 L106.4 14.09 L107.2 14.95 L108.0 14.83 L108.8 14.88 L109.6 13.95 L110.4 13.29 L111.2 13.80 L112.0 15.09 L112.8 14.82 L113.6 13.45 L114.4 13.34 L115.2 14.41 L116.0 13.87 L116.8 13.04 L117.6 14.42 L118.4 12.72 L119.2 13.78 L120.0 14.22 L120.8 13.66 L121.6 15.18 L122.4 14.50 L123.2 14.33 L124.0 13.13 L124.8 15.00 L125.6 13.80 L126.4 13.71 L127.2 12.42 L128.0 14.21 L128.8 15.15 L129.6 14.38 L130.4 13.46 L131.2 13.38 L132.0 13.67 L132.8 13.62 L133.6 14.07 L134.4 14.80 L135.2 14.68 L136.0 14.88 L136.8 14.50 L137.6 14.21 L138.4 14.29 L139.2 14.25 L140.0 14.04 L140.8 13.34 L141.6 14.73 L142.4 13.58 L143.2 12.20 L144.0 12.29 L144.8 13.74 L145.6 13.71 L146.4 13.79 L147.2 13.43 L148.0 13.48 L148.8 13.72 L149.6 13.86 L150.4 14.42 L151.2 13.96 L152.0 13.84 L152.8 14.28 L153.6 13.24 L154.4 13.64 L155.2 14.72 L156.0 13.20 L156.8 14.07 L157.6 15.15 L158.4 14.05 L159.2 14.74 L160.0 13.73 L160.8 14.82 L161.6 13.69 L162.4 13.64 L163.2 13.40 L164.0 14.44 L164.8 14.08 L165.6 13.23 L166.4 13.36 L167.2 14.68 L168.0 14.73 L168.8 14.61 L169.6 15.06 L170.4 15.19 L171.2 14.27 L172.0 13.41 L172.8 14.75 L173.6 15.05 L174.4 14.18 L175.2 11.81 L176.0 14.47 L176.8 13.58 L177.6 14.52 L178.4 13.24 L179.2 13.64 L180.0 13.76 L180.8 15.08 L181.6 14.88 L182.4 14.58 L183.2 14.61 L184.0 14.88 L184.8 13.97 L185.6 13.74 L186.4 13.70 L187.2 13.52 L188.0 13.45 L188.8 14.86 L189.6 13.98 L190.4 14.40 L191.2 15.19 L192.0 13.81 L192.8 14.20 L193.6 14.12 L194.4 13.86 L195.2 14.20 L196.0 14.40 L196.8 14.31 L197.6 14.35 L198.4 14.77 L199.2 13.70 L200.0 14.12 L200.8 13.59 L201.6 14.75 L202.4 13.43 L203.2 14.62 L204.0 14.31 L204.8 13.38 L205.6 13.25 L206.4 13.80 L207.2 13.29 L208.0 13.70 L208.8 13.90 L209.6 13.29 L210.4 15.03 L211.2 15.03 L212.0 14.82 L212.8 14.41 L213.6 15.12 L214.4 14.31 L215.2 14.89 L216.0 13.24 L216.8 13.89 L217.6 13.29 L218.4 15.11 L219.2 14.87 L220.0 13.86 L220.8 14.58 L221.6 13.79 L222.4 13.89 L223.2 13.52 L224.0 13.38 L224.8 14.94 L225.6 13.95 L226.4 15.04 L227.2 15.04 L228.0 13.90 L228.8 14.56 L229.6 13.94 L230.4 13.67 L231.2 14.53 L232.0 15.07 L232.8 13.46 L233.6 15.16 L234.4 15.14 L235.2 14.74 L236.0 14.30 L236.8 13.48 L237.6 14.30 L238.4 14.07 L239.2 14.88 L240.0 14.99 L240.8 14.50 L241.6 13.80 L242.4 15.18 L243.2 14.82 L244.0 13.91 L244.8 15.13 L245.6 13.91 L246.4 15.15 L247.2 14.86 L248.0 15.06 L248.8 14.49 L249.6 14.19 L250.4 12.41 L251.2 15.17 L252.0 14.98 L252.8 15.03 L253.6 13.78 L254.4 14.74 L255.2 12.23 L256.0 13.70 L256.8 13.94 L257.6 14.73 L258.4 13.90 L259.2 13.25 L260.0 14.85 L260.8 13.60 L261.6 14.55 L262.4 13.71 L263.2 13.98 L264.0 15.18 L264.8 12.63 L265.6 15.15 L266.4 13.66 L267.2 14.95 L268.0 13.24 L268.8 13.64 L269.6 13.99 L270.4 14.97 L271.2 13.53 L272.0 14.13 L272.8 14.88 L273.6 14.66 L274.4 14.33 L275.2 13.30 L276.0 14.54 L276.8 15.11 L277.6 13.44 L278.4 15.17 L279.2 14.26 L280.0 13.63 L280.8 13.65 L281.6 13.69 L282.4 13.51 L283.2 14.02 L284.0 13.88 L284.8 14.65 L285.6 14.14 L286.4 15.15 L287.2 14.21 L288.0 14.50 L288.8 14.06 L289.6 14.07 L290.4 15.12 L291.2 13.49 L292.0 14.58 L292.8 14.17 L293.6 13.57 L294.4 14.17 L295.2 14.27 L296.0 14.76 L296.8 15.13 L297.6 14.11 L298.4 14.18 L299.2 14.98 L300.0 13.32 L300.8 14.96 L301.6 15.02 L302.4 13.48 L303.2 14.13 L304.0 13.58 L304.8 14.31 L305.6 12.91 L306.4 14.35 L307.2 12.71 L308.0 13.61 L308.8 11.97 L309.6 13.35 L310.4 13.09 L311.2 11.44 L312.0 12.73 L312.8 14.04 L313.6 12.83 L314.4 14.23 L315.2 14.03 L316.0 12.77 L316.8 13.07 L317.6 13.69 L318.4 10.89 L319.2 12.58 L320.0 14.27 L320.8 13.82 L321.6 13.78 L322.4 12.41 L323.2 13.13 L324.0 12.94 L324.8 13.89 L325.6 14.24 L326.4 13.61 L327.2 13.02 L328.0 13.48 L328.8 13.36 L329.6 13.76 L330.4 13.18 L331.2 12.84 L332.0 14.08 L332.8 14.01 L333.6 12.74 L334.4 12.78 L335.2 13.87 L336.0 14.16 L336.8 13.09 L337.6 12.47 L338.4 12.05 L339.2 13.11 L340.0 13.03 L340.8 12.90 L341.6 12.63 L342.4 14.01 L343.2 13.67 L344.0 13.03 L344.8 12.68 L345.6 14.36 L346.4 12.83 L347.2 13.42 L348.0 14.33 L348.8 13.29 L349.6 13.91 L350.4 13.83 L351.2 14.34 L352.0 12.81 L352.8 13.84 L353.6 14.38 L354.4 13.01 L355.2 12.43 L356.0 12.55 L356.8 13.85 L357.6 13.99 L358.4 13.96 L359.2 11.99 L360.0 12.79 L360.8 14.25 L361.6 13.78 L362.4 11.80 L363.2 12.80 L364.0 13.03 L364.8 13.62 L365.6 14.12 L366.4 11.34 L367.2 12.64 L368.0 12.80 L368.8 13.25 L369.6 14.22 L370.4 12.56 L371.2 14.07 L372.0 13.47 L372.8 13.28 L373.6 13.64 L374.4 14.34 L375.2 12.66 L376.0 14.35 L376.8 14.27 L377.6 13.90 L378.4 13.62 L379.2 12.67 L380.0 13.68 L380.8 12.87 L381.6 12.65 L382.4 13.92 L383.2 12.43 L384.0 13.74 L384.8 13.60 L385.6 12.80 L386.4 12.90 L387.2 12.71 L388.0 13.10 L388.8 14.31 L389.6 13.75 L390.4 12.96 L391.2 13.41 L392.0 14.01 L392.8 12.65 L393.6 12.91 L394.4 14.20 L395.2 13.64 L396.0 13.44 L396.8 12.16 L397.6 13.91 L398.4 12.94 L399.2 13.18 L400.0 13.55 L400.8 13.14 L401.6 12.45 L402.4 13.36 L403.2 13.27 L404.0 14.29 L404.8 13.57 L405.6 12.29 L406.4 13.56 L407.2 13.14 L408.0 12.61 L408.8 13.69 L409.6 12.72 L410.4 12.97 L411.2 13.99 L412.0 13.98 L412.8 13.17 L413.6 14.08 L414.4 13.84 L415.2 13.58 L416.0 12.77 L416.8 13.65 L417.6 13.25 L418.4 12.61 L419.2 14.06 L420.0 12.69 L420.8 14.26 L421.6 12.89 L422.4 12.80 L423.2 13.86 L424.0 14.19 L424.8 13.86 L425.6 13.89 L426.4 13.33 L427.2 13.15 L428.0 12.55 L428.8 12.83 L429.6 13.47 L430.4 14.15 L431.2 13.75 L432.0 13.28 L432.8 12.00 L433.6 12.90 L434.4 12.74 L435.2 13.03 L436.0 14.21 L436.8 13.79 L437.6 13.54 L438.4 13.91 L439.2 13.21 L440.0 12.58 L440.8 13.04 L441.6 12.64 L442.4 13.32 L443.2 13.18 L444.0 13.88 L444.8 12.46 L445.6 14.34 L446.4 13.45 L447.2 13.03 L448.0 13.33 L448.8 13.88 L449.6 12.71 L450.4 13.67 L451.2 12.79 L452.0 13.36 L452.8 12.26 L453.6 12.57 L454.4 12.83 L455.2 13.35 L456.0 13.40 L456.8 13.82 L457.6 14.40 L458.4 12.52 L459.2 13.18 L460.0 12.91 L460.8 12.67 L461.6 12.91 L462.4 14.02 L463.2 13.53 L464.0 12.59 L464.8 13.67 L465.6 12.51 L466.4 13.69 L467.2 12.42 L468.0 12.67 L468.8 13.08 L469.6 14.09 L470.4 13.84 L471.2 14.14 L472.0 12.53 L472.8 12.73 L473.6 13.92 L474.4 13.49 L475.2 13.05 L476.0 14.17 L476.8 12.56 L477.6 12.97 L478.4 13.63 L479.2 12.61 L480.0 14.21 L480.8 12.71 L481.6 14.33 L482.4 13.05 L483.2 14.17 L484.0 12.83 L484.8 13.58 L485.6 12.77 L486.4 13.48 L487.2 14.40 L488.0 13.66 L488.8 10.85 L489.6 13.09 L490.4 12.83 L491.2 13.89 L492.0 13.29 L492.8 13.61 L493.6 13.98 L494.4 12.40 L495.2 13.08 L496.0 12.88 L496.8 12.58 L497.6 12.50 L498.4 14.25 L499.2 14.09 L500.0 13.83 L500.8 12.82 L501.6 12.82 L502.4 13.26 L503.2 13.14 L504.0 13.96 L504.8 14.08 L505.6 13.73 L506.4 12.61 L507.2 12.40 L508.0 13.62 L508.8 14.23 L509.6 12.76 L510.4 14.33 L511.2 13.83 L512.0 13.28 L512.8 12.65 L513.6 13.30 L514.4 13.95 L515.2 13.38 L516.0 13.60 L516.8 13.86 L517.6 13.50 L518.4 13.56 L519.2 13.24 L520.0 12.93 L520.8 13.00 L521.6 12.81 L522.4 10.64 L523.2 13.75 L524.0 13.30 L524.8 12.64 L525.6 12.59 L526.4 11.76 L527.2 13.57 L528.0 12.56 L528.8 13.38 L529.6 13.01 L530.4 13.81 L531.2 14.05 L532.0 12.64 L532.8 14.18 L533.6 12.16 L534.4 14.12 L535.2 13.83 L536.0 12.99 L536.8 12.59 L537.6 12.63 L538.4 13.13 L539.2 14.23 L540.0 13.65 L540.8 13.17 L541.6 12.57 L542.4 12.59 L543.2 13.40 L544.0 12.61 L544.8 12.77 L545.6 13.33 L546.4 12.77 L547.2 13.04 L548.0 14.26 L548.8 13.57 L549.6 14.12 L550.4 14.38 L551.2 14.23 L552.0 14.20 L552.8 12.63 L553.6 11.95 L554.4 12.41 L555.2 14.05 L556.0 13.72 L556.8 13.67 L557.6 12.65 L558.4 14.07 L559.2 12.72 L560.0 13.22 L560.8 13.20 L561.6 12.84 L562.4 13.68 L563.2 13.90 L564.0 12.64 L564.8 12.43 L565.6 13.74 L566.4 13.61 L567.2 13.29 L568.0 13.49 L568.8 12.62 L569.6 14.01 L570.4 14.15 L571.2 14.10 L572.0 14.37 L572.8 13.05 L573.6 12.90 L574.4 12.17 L575.2 14.26 L576.0 12.63 L576.8 13.03 L577.6 11.05 L578.4 12.97 L579.2 12.54 L580.0 13.71 L580.8 14.29 L581.6 12.80 L582.4 13.89 L583.2 12.43 L584.0 13.23 L584.8 12.45 L585.6 14.23 L586.4 13.19 L587.2 12.67 L588.0 13.23 L588.8 12.59 L589.6 14.08 L590.4 12.86 L591.2 12.88 L592.0 13.62 L592.8 14.21 L593.6 13.41 L594.4 13.01 L595.2 12.48 L596.0 12.47 L596.8 13.03 L597.6 12.81 L598.4 11.66 L599.2 12.77 L600.0 14.33 L600.8 13.37 L601.6 13.26 L602.4 13.98 L603.2 12.70 L604.0 14.14 L604.8 13.78 L605.6 13.96 L606.4 14.14 L607.2 12.88 L608.0 11.87 L608.8 14.15 L609.6 12.89 L610.4 13.32 L611.2 13.33 L612.0 13.83 L612.8 13.28 L613.6 14.09 L614.4 13.14 L615.2 12.57 L616.0 13.05 L616.8 13.29 L617.6 13.77 L618.4 13.28 L619.2 12.95 L620.0 12.67 L620.8 13.74 L621.6 13.80 L622.4 13.92 L623.2 14.25 L624.0 12.55 L624.8 11.40 L625.6 14.18 L626.4 13.25 L627.2 14.13 L628.0 13.80 L628.8 12.98 L629.6 14.02 L630.4 13.29 L631.2 13.86 L632.0 13.86 L632.8 11.72 L633.6 13.17 L634.4 13.00 L635.2 11.72 L636.0 12.82 L636.8 12.43 L637.6 14.20 L638.4 13.20 L639.2 12.80 L640.0 12.53 L640.8 14.19 L641.6 14.06 L642.4 13.10 L643.2 13.84 L644.0 14.24 L644.8 13.05 L645.6 12.88 L646.4 13.02 L647.2 12.53 L648.0 14.19 L648.8 12.94 L649.6 13.31 L650.4 13.62 L651.2 12.83 L652.0 14.15 L652.8 12.95 L653.6 12.73 L654.4 13.36 L655.2 13.58 L656.0 13.68 L656.8 12.51 L657.6 13.03 L658.4 12.74 L659.2 12.83 L660.0 13.97 L660.8 12.92 L661.6 12.48 L662.4 13.96 L663.2 13.45 L664.0 13.12 L664.8 13.74 L665.6 12.46 L666.4 12.88 L667.2 11.49 L668.0 14.01 L668.8 14.03 L669.6 13.09 L670.4 14.18 L671.2 12.85 L672.0 13.81 L672.8 14.33 L673.6 13.34 L674.4 12.45 L675.2 12.64 L676.0 13.52 L676.8 13.91 L677.6 13.26 L678.4 10.82 L679.2 12.58 L680.0 12.76 L680.8 13.72 L681.6 13.00 L682.4 12.51 L683.2 14.50 L684.0 14.55 L684.8 15.07 L685.6 13.40 L686.4 14.93 L687.2 14.21 L688.0 14.19 L688.8 15.18 L689.6 14.55 L690.4 13.63 L691.2 13.71 L692.0 14.06 L692.8 14.00 L693.6 13.22 L694.4 13.66 L695.2 14.56 L696.0 13.71 L696.8 14.96 L697.6 15.05 L698.4 14.62 L699.2 13.59 L700.0 14.86 L700.8 14.27 L701.6 14.44 L702.4 14.10 L703.2 13.55 L704.0 13.41 L704.8 14.40 L705.6 14.01 L706.4 14.30 L707.2 14.35 L708.0 11.84 L708.8 12.14 L709.6 13.11 L710.4 12.11 L711.2 11.65 L712.0 12.02 L712.8 12.09 L713.6 13.37 L714.4 12.29 L715.2 13.51 L716.0 11.97 L716.8 12.42 L717.6 12.41 L718.4 11.60 L719.2 11.72 L720.0 11.64 L720.8 12.59 L721.6 13.40 L722.4 11.97 L723.2 12.37 L724.0 11.96 L724.8 12.59 L725.6 12.64 L726.4 13.52 L727.2 13.34 L728.0 13.24 L728.8 12.47 L729.6 12.00 L730.4 13.11 L731.2 11.83 L732.0 12.07 L732.8 13.51 L733.6 13.04 L734.4 12.07 L735.2 12.66 L736.0 12.24 L736.8 12.10 L737.6 11.81 L738.4 12.94 L739.2 13.17 L740.0 12.52 L740.8 12.69 L741.6 12.23 L742.4 11.78 L743.2 11.83 L744.0 11.86 L744.8 12.21 L745.6 11.70 L746.4 12.26 L747.2 12.91 L748.0 11.90 L748.8 13.18 L749.6 13.12 L750.4 12.93 L751.2 13.18 L752.0 12.07 L752.8 14.25 L753.6 14.31 L754.4 13.39 L755.2 13.48 L756.0 14.86 L756.8 14.86 L757.6 13.60 L758.4 14.09 L759.2 13.33 L760.0 14.09 L760.8 14.28 L761.6 14.18 L762.4 15.10 L763.2 13.71 L764.0 14.09 L764.8 13.32 L765.6 13.77 L766.4 14.88 L767.2 14.14 L768.0 14.29 L768.8 14.63 L769.6 14.59 L770.4 15.15 L771.2 14.26 L772.0 13.86 L772.8 14.15 L773.6 11.65 L774.4 14.84 L775.2 14.41 L776.0 13.95 L776.8 14.26 L777.6 13.59 L778.4 12.00 L779.2 11.68 L780.0 11.97 L780.8 12.86 L781.6 11.96 L782.4 12.42 L783.2 11.76 L784.0 13.00 L784.8 12.07 L785.6 13.23 L786.4 13.00 L787.2 13.25 L788.0 12.31 L788.8 12.62 L789.6 12.33 L790.4 13.35 L791.2 11.95 L792.0 11.92 L792.8 11.87 L793.6 13.59 L794.4 13.11 L795.2 13.04 L796.0 13.35 L796.8 11.68 L797.6 12.05 L798.4 11.70 L799.2 12.52 L800.0 10.61 L800.8 12.73 L801.6 11.41 L802.4 12.33 L803.2 11.62 L804.0 11.68 L804.8 11.95 L805.6 10.42 L806.4 12.88 L807.2 13.53 L808.0 13.40 L808.8 12.23 L809.6 12.00 L810.4 13.41 L811.2 12.55 L812.0 11.89 L812.8 12.20 L813.6 13.53 L814.4 13.57 L815.2 12.39 L816.0 12.87 L816.8 12.02 L817.6 13.58 L818.4 12.99 L819.2 12.48 L820.0 13.38 L820.8 13.09 L821.6 12.15 L822.4 13.13 L823.2 13.45 L824.0 10.53 L824.8 12.65 L825.6 13.14 L826.4 12.51 L827.2 12.21 L828.0 11.96 L828.8 11.70 L829.6 12.91 L830.4 13.13 L831.2 12.61 L832.0 13.41 L832.8 12.50 L833.6 11.98 L834.4 12.48 L835.2 12.03 L836.0 12.53 L836.8 12.09 L837.6 12.78 L838.4 12.47 L839.2 9.63 L840.0 12.14 L840.8 13.57 L841.6 11.94 L842.4 12.61 L843.2 13.46 L844.0 13.32 L844.8 11.80 L845.6 12.20 L846.4 11.79 L847.2 12.23 L848.0 13.04 L848.8 13.15 L849.6 12.50 L850.4 13.05 L851.2 12.19 L852.0 12.40 L852.8 12.65 L853.6 13.35 L854.4 13.46 L855.2 10.19 L856.0 12.37 L856.8 11.72 L857.6 12.47 L858.4 12.89 L859.2 13.59 L860.0 13.48 L860.8 11.94 L861.6 13.05 L862.4 11.76 L863.2 13.57 L864.0 11.64 L864.8 12.60 L865.6 13.32 L866.4 12.13 L867.2 13.20 L868.0 11.94 L868.8 13.19 L869.6 12.97 L870.4 12.24 L871.2 12.48 L872.0 12.26 L872.8 14.66 L873.6 14.11 L874.4 15.17 L875.2 13.29 L876.0 14.62 L876.8 12.43 L877.6 13.44 L878.4 14.96 L879.2 14.96 L880.0 14.89 L880 14 L888 18 L892 20Z" fill="#6580ac"/><rect x="66.4" y="12.50" width="1.3" height="1.1" fill="#cdb13e"/><rect x="87.2" y="11.95" width="1.3" height="1.1" fill="#e08a38"/><rect x="144.0" y="12.29" width="1.3" height="1.1" fill="#cdb13e"/><rect x="250.4" y="12.41" width="1.3" height="1.1" fill="#cdb13e"/><rect x="255.2" y="12.23" width="1.3" height="1.1" fill="#cdb13e"/><rect x="264.8" y="12.63" width="1.3" height="1.1" fill="#cdb13e"/><rect x="311.2" y="11.44" width="1.3" height="1.1" fill="#cdb13e"/><rect x="318.4" y="10.89" width="1.3" height="1.1" fill="#cdb13e"/><rect x="319.2" y="12.58" width="1.3" height="1.1" fill="#cdb13e"/><rect x="341.6" y="12.63" width="1.3" height="1.1" fill="#cdb13e"/><rect x="344.8" y="12.68" width="1.3" height="1.1" fill="#e08a38"/><rect x="355.2" y="12.43" width="1.3" height="1.1" fill="#cdb13e"/><rect x="359.2" y="11.99" width="1.3" height="1.1" fill="#cdb13e"/><rect x="362.4" y="11.80" width="1.3" height="1.1" fill="#cdb13e"/><rect x="366.4" y="11.34" width="1.3" height="1.1" fill="#cdb13e"/><rect x="367.2" y="12.64" width="1.3" height="1.1" fill="#e08a38"/><rect x="379.2" y="12.67" width="1.3" height="1.1" fill="#cdb13e"/><rect x="392.8" y="12.65" width="1.3" height="1.1" fill="#e08a38"/><rect x="396.8" y="12.16" width="1.3" height="1.1" fill="#cdb13e"/><rect x="401.6" y="12.45" width="1.3" height="1.1" fill="#cdb13e"/><rect x="453.6" y="12.57" width="1.3" height="1.1" fill="#cdb13e"/><rect x="458.4" y="12.52" width="1.3" height="1.1" fill="#cdb13e"/><rect x="460.8" y="12.67" width="1.3" height="1.1" fill="#e08a38"/><rect x="464.0" y="12.59" width="1.3" height="1.1" fill="#e08a38"/><rect x="467.2" y="12.42" width="1.3" height="1.1" fill="#cdb13e"/><rect x="472.0" y="12.53" width="1.3" height="1.1" fill="#cdb13e"/><rect x="488.8" y="10.85" width="1.3" height="1.1" fill="#cdb13e"/><rect x="494.4" y="12.40" width="1.3" height="1.1" fill="#cdb13e"/><rect x="506.4" y="12.61" width="1.3" height="1.1" fill="#cdb13e"/><rect x="507.2" y="12.40" width="1.3" height="1.1" fill="#e08a38"/><rect x="512.8" y="12.65" width="1.3" height="1.1" fill="#cdb13e"/><rect x="522.4" y="10.64" width="1.3" height="1.1" fill="#cdb13e"/><rect x="528.0" y="12.56" width="1.3" height="1.1" fill="#cdb13e"/><rect x="533.6" y="12.16" width="1.3" height="1.1" fill="#cdb13e"/><rect x="537.6" y="12.63" width="1.3" height="1.1" fill="#e08a38"/><rect x="541.6" y="12.57" width="1.3" height="1.1" fill="#cdb13e"/><rect x="542.4" y="12.59" width="1.3" height="1.1" fill="#cdb13e"/><rect x="544.0" y="12.61" width="1.3" height="1.1" fill="#cdb13e"/><rect x="552.8" y="12.63" width="1.3" height="1.1" fill="#cdb13e"/><rect x="553.6" y="11.95" width="1.3" height="1.1" fill="#e08a38"/><rect x="557.6" y="12.65" width="1.3" height="1.1" fill="#cdb13e"/><rect x="574.4" y="12.17" width="1.3" height="1.1" fill="#e08a38"/><rect x="576.0" y="12.63" width="1.3" height="1.1" fill="#e08a38"/><rect x="579.2" y="12.54" width="1.3" height="1.1" fill="#cdb13e"/><rect x="583.2" y="12.43" width="1.3" height="1.1" fill="#cdb13e"/><rect x="584.8" y="12.45" width="1.3" height="1.1" fill="#cdb13e"/><rect x="587.2" y="12.67" width="1.3" height="1.1" fill="#cdb13e"/><rect x="596.0" y="12.47" width="1.3" height="1.1" fill="#cdb13e"/><rect x="608.0" y="11.87" width="1.3" height="1.1" fill="#e08a38"/><rect x="620.0" y="12.67" width="1.3" height="1.1" fill="#cdb13e"/><rect x="632.8" y="11.72" width="1.3" height="1.1" fill="#cdb13e"/><rect x="635.2" y="11.72" width="1.3" height="1.1" fill="#cdb13e"/><rect x="636.8" y="12.43" width="1.3" height="1.1" fill="#cdb13e"/><rect x="647.2" y="12.53" width="1.3" height="1.1" fill="#cdb13e"/><rect x="656.8" y="12.51" width="1.3" height="1.1" fill="#cdb13e"/><rect x="661.6" y="12.48" width="1.3" height="1.1" fill="#e08a38"/><rect x="708.8" y="12.14" width="1.3" height="1.1" fill="#cdb13e"/><rect x="710.4" y="12.11" width="1.3" height="1.1" fill="#cdb13e"/><rect x="711.2" y="11.65" width="1.3" height="1.1" fill="#e08a38"/><rect x="714.4" y="12.29" width="1.3" height="1.1" fill="#cdb13e"/><rect x="716.0" y="11.97" width="1.3" height="1.1" fill="#e08a38"/><rect x="718.4" y="11.60" width="1.3" height="1.1" fill="#e08a38"/><rect x="719.2" y="11.72" width="1.3" height="1.1" fill="#cdb13e"/><rect x="723.2" y="12.37" width="1.3" height="1.1" fill="#cdb13e"/><rect x="724.8" y="12.59" width="1.3" height="1.1" fill="#cdb13e"/><rect x="729.6" y="12.00" width="1.3" height="1.1" fill="#cdb13e"/><rect x="731.2" y="11.83" width="1.3" height="1.1" fill="#cdb13e"/><rect x="732.0" y="12.07" width="1.3" height="1.1" fill="#cdb13e"/><rect x="734.4" y="12.07" width="1.3" height="1.1" fill="#cdb13e"/><rect x="735.2" y="12.66" width="1.3" height="1.1" fill="#e08a38"/><rect x="736.0" y="12.24" width="1.3" height="1.1" fill="#cdb13e"/><rect x="740.0" y="12.52" width="1.3" height="1.1" fill="#cdb13e"/><rect x="741.6" y="12.23" width="1.3" height="1.1" fill="#cdb13e"/><rect x="745.6" y="11.70" width="1.3" height="1.1" fill="#cdb13e"/><rect x="746.4" y="12.26" width="1.3" height="1.1" fill="#e08a38"/><rect x="752.0" y="12.07" width="1.3" height="1.1" fill="#cdb13e"/><rect x="773.6" y="11.65" width="1.3" height="1.1" fill="#cdb13e"/><rect x="778.4" y="12.00" width="1.3" height="1.1" fill="#cdb13e"/><rect x="780.0" y="11.97" width="1.3" height="1.1" fill="#e08a38"/><rect x="781.6" y="11.96" width="1.3" height="1.1" fill="#e08a38"/><rect x="782.4" y="12.42" width="1.3" height="1.1" fill="#cdb13e"/><rect x="788.8" y="12.62" width="1.3" height="1.1" fill="#e08a38"/><rect x="789.6" y="12.33" width="1.3" height="1.1" fill="#cdb13e"/><rect x="791.2" y="11.95" width="1.3" height="1.1" fill="#e08a38"/><rect x="792.8" y="11.87" width="1.3" height="1.1" fill="#cdb13e"/><rect x="796.8" y="11.68" width="1.3" height="1.1" fill="#e08a38"/><rect x="798.4" y="11.70" width="1.3" height="1.1" fill="#e08a38"/><rect x="799.2" y="12.52" width="1.3" height="1.1" fill="#e08a38"/><rect x="802.4" y="12.33" width="1.3" height="1.1" fill="#cdb13e"/><rect x="803.2" y="11.62" width="1.3" height="1.1" fill="#e08a38"/><rect x="804.0" y="11.68" width="1.3" height="1.1" fill="#e08a38"/><rect x="804.8" y="11.95" width="1.3" height="1.1" fill="#e08a38"/><rect x="808.8" y="12.23" width="1.3" height="1.1" fill="#cdb13e"/><rect x="812.0" y="11.89" width="1.3" height="1.1" fill="#e08a38"/><rect x="815.2" y="12.39" width="1.3" height="1.1" fill="#cdb13e"/><rect x="816.8" y="12.02" width="1.3" height="1.1" fill="#e08a38"/><rect x="824.8" y="12.65" width="1.3" height="1.1" fill="#e08a38"/><rect x="826.4" y="12.51" width="1.3" height="1.1" fill="#e08a38"/><rect x="831.2" y="12.61" width="1.3" height="1.1" fill="#e08a38"/><rect x="832.8" y="12.50" width="1.3" height="1.1" fill="#e08a38"/><rect x="833.6" y="11.98" width="1.3" height="1.1" fill="#e08a38"/><rect x="834.4" y="12.48" width="1.3" height="1.1" fill="#e08a38"/><rect x="835.2" y="12.03" width="1.3" height="1.1" fill="#e08a38"/><rect x="836.8" y="12.09" width="1.3" height="1.1" fill="#e08a38"/><rect x="839.2" y="9.63" width="1.3" height="1.1" fill="#e08a38"/><rect x="840.0" y="12.14" width="1.3" height="1.1" fill="#e08a38"/><rect x="841.6" y="11.94" width="1.3" height="1.1" fill="#e08a38"/><rect x="842.4" y="12.61" width="1.3" height="1.1" fill="#e08a38"/><rect x="844.8" y="11.80" width="1.3" height="1.1" fill="#e08a38"/><rect x="845.6" y="12.20" width="1.3" height="1.1" fill="#cdb13e"/><rect x="847.2" y="12.23" width="1.3" height="1.1" fill="#e08a38"/><rect x="852.0" y="12.40" width="1.3" height="1.1" fill="#e08a38"/><rect x="852.8" y="12.65" width="1.3" height="1.1" fill="#e08a38"/><rect x="855.2" y="10.19" width="1.3" height="1.1" fill="#e08a38"/><rect x="856.0" y="12.37" width="1.3" height="1.1" fill="#cdb13e"/><rect x="856.8" y="11.72" width="1.3" height="1.1" fill="#e08a38"/><rect x="860.8" y="11.94" width="1.3" height="1.1" fill="#e08a38"/><rect x="862.4" y="11.76" width="1.3" height="1.1" fill="#e08a38"/><rect x="864.0" y="11.64" width="1.3" height="1.1" fill="#e08a38"/><rect x="864.8" y="12.60" width="1.3" height="1.1" fill="#e08a38"/><rect x="870.4" y="12.24" width="1.3" height="1.1" fill="#e08a38"/><rect x="872.0" y="12.26" width="1.3" height="1.1" fill="#e08a38"/><rect x="876.8" y="12.43" width="1.3" height="1.1" fill="#cdb13e"/><rect x="0" y="18" width="902" height="2" fill="#3a3a3a"/></svg>
<svg style="left:3.5px;top:578px;" width="13" height="10" viewBox="0 0 13 10"><path d="M0 10V6l2-1 1 1 2-2 1 2 2-1 2 1 1-1 2 1v4z" fill="#8a8a8a" opacity=".5"/></svg>
<svg style="left:0px;top:588px;overflow:hidden" width="1022" height="1" viewBox="0 0 1022 1"><rect x="0" y="0" width="2.9" height="2" fill="#1e2a40"/><rect x="4.283177479479939" y="0" width="3.8" height="2" fill="#25344e"/><rect x="8.724395901309276" y="0" width="3.3" height="2" fill="#2f4060"/><rect x="12.49580683728851" y="0" width="3.7" height="2" fill="#25344e"/><rect x="15.297083581756585" y="0" width="3.6" height="2" fill="#3a4a66"/><rect x="18.70024658908234" y="0" width="2.7" height="2" fill="#25344e"/><rect x="22.759389597810326" y="0" width="2.2" height="2" fill="#2f4060"/><rect x="27.46659839914026" y="0" width="3.3" height="2" fill="#2f4060"/><rect x="31.63333739572061" y="0" width="1.2" height="2" fill="#3a4a66"/><rect x="33.57678470964655" y="0" width="1.0" height="2" fill="#25344e"/><rect x="35.809882048379464" y="0" width="1.6" height="2" fill="#2f4060"/><rect x="40.36330922740827" y="0" width="1.9" height="2" fill="#2f4060"/><rect x="43.750591368456114" y="0" width="3.0" height="2" fill="#2f4060"/><rect x="45.88643170836573" y="0" width="3.9" height="2" fill="#2f4060"/><rect x="50.76940680147591" y="0" width="3.7" height="2" fill="#1e2a40"/><rect x="52.34490253080434" y="0" width="2.2" height="2" fill="#2f4060"/><rect x="54.76824431712924" y="0" width="2.0" height="2" fill="#25344e"/><rect x="58.35417064403569" y="0" width="3.1" height="2" fill="#25344e"/><rect x="60.93902340464664" y="0" width="3.5" height="2" fill="#3a4a66"/><rect x="64.87649273139068" y="0" width="1.6" height="2" fill="#3a4a66"/><rect x="68.84283470088387" y="0" width="1.2" height="2" fill="#25344e"/><rect x="73.66510636923071" y="0" width="2.1" height="2" fill="#3a4a66"/><rect x="75.22834274305556" y="0" width="3.4" height="2" fill="#1e2a40"/><rect x="78.04562168719636" y="0" width="3.5" height="2" fill="#3a4a66"/><rect x="79.70916660264265" y="0" width="1.5" height="2" fill="#2f4060"/><rect x="81.62573855240086" y="0" width="1.7" height="2" fill="#3a4a66"/><rect x="84.3310748980864" y="0" width="2.1" height="2" fill="#1e2a40"/><rect x="88.54568544953288" y="0" width="1.3" height="2" fill="#1e2a40"/><rect x="93.0546155666894" y="0" width="1.1" height="2" fill="#25344e"/><rect x="95.2843074423602" y="0" width="2.5" height="2" fill="#1e2a40"/><rect x="99.99761259172679" y="0" width="2.0" height="2" fill="#25344e"/><rect x="102.59118888442697" y="0" width="2.0" height="2" fill="#2f4060"/><rect x="106.88689654439933" y="0" width="2.9" height="2" fill="#1e2a40"/><rect x="111.87544039527779" y="0" width="1.5" height="2" fill="#25344e"/><rect x="113.65879420792352" y="0" width="2.8" height="2" fill="#3a4a66"/><rect x="115.27018689839343" y="0" width="3.2" height="2" fill="#1e2a40"/><rect x="119.66222118968862" y="0" width="2.4" height="2" fill="#3a4a66"/><rect x="121.67192275604933" y="0" width="3.9" height="2" fill="#25344e"/><rect x="125.9777482631498" y="0" width="2.0" height="2" fill="#2f4060"/><rect x="127.93474965818572" y="0" width="3.2" height="2" fill="#2f4060"/><rect x="131.6411471851781" y="0" width="3.4" height="2" fill="#25344e"/><rect x="133.732020199516" y="0" width="2.1" height="2" fill="#25344e"/><rect x="138.18858883903476" y="0" width="1.9" height="2" fill="#3a4a66"/><rect x="142.9156005419713" y="0" width="2.9" height="2" fill="#2f4060"/><rect x="147.83162703608448" y="0" width="2.4" height="2" fill="#3a4a66"/><rect x="151.742563697546" y="0" width="2.0" height="2" fill="#1e2a40"/><rect x="154.2611428575604" y="0" width="2.2" height="2" fill="#2f4060"/><rect x="156.15510408092058" y="0" width="3.5" height="2" fill="#2f4060"/><rect x="159.84948147926252" y="0" width="2.5" height="2" fill="#1e2a40"/><rect x="161.979902520304" y="0" width="2.5" height="2" fill="#1e2a40"/><rect x="163.70078329509315" y="0" width="3.4" height="2" fill="#1e2a40"/><rect x="167.63187191817127" y="0" width="3.0" height="2" fill="#1e2a40"/><rect x="170.40388308988176" y="0" width="3.1" height="2" fill="#1e2a40"/><rect x="174.8271967873085" y="0" width="1.8" height="2" fill="#1e2a40"/><rect x="179.6762957812165" y="0" width="2.0" height="2" fill="#2f4060"/><rect x="183.20860867345513" y="0" width="1.0" height="2" fill="#1e2a40"/><rect x="185.84927593948686" y="0" width="1.8" height="2" fill="#1e2a40"/><rect x="190.20765477638105" y="0" width="2.9" height="2" fill="#1e2a40"/><rect x="192.925250554478" y="0" width="2.9" height="2" fill="#3a4a66"/><rect x="195.65040858448253" y="0" width="3.5" height="2" fill="#3a4a66"/><rect x="200.5668362435393" y="0" width="3.9" height="2" fill="#2f4060"/><rect x="203.9195265262322" y="0" width="1.5" height="2" fill="#1e2a40"/><rect x="208.70036244522862" y="0" width="2.4" height="2" fill="#25344e"/><rect x="212.71926511096294" y="0" width="3.2" height="2" fill="#2f4060"/><rect x="216.37799668874155" y="0" width="3.8" height="2" fill="#3a4a66"/><rect x="218.93732802150765" y="0" width="2.7" height="2" fill="#1e2a40"/><rect x="222.95877868252657" y="0" width="1.1" height="2" fill="#2f4060"/><rect x="226.51134744634695" y="0" width="2.9" height="2" fill="#2f4060"/><rect x="228.77798102143242" y="0" width="3.1" height="2" fill="#25344e"/><rect x="233.7306203974361" y="0" width="3.9" height="2" fill="#2f4060"/><rect x="235.42012093510974" y="0" width="1.4" height="2" fill="#1e2a40"/><rect x="240.3080527300468" y="0" width="2.4" height="2" fill="#25344e"/><rect x="243.2622669388334" y="0" width="2.1" height="2" fill="#25344e"/><rect x="246.82784234639269" y="0" width="1.7" height="2" fill="#1e2a40"/><rect x="248.33015450166045" y="0" width="2.2" height="2" fill="#1e2a40"/><rect x="252.82564603192347" y="0" width="3.6" height="2" fill="#1e2a40"/><rect x="257.7009433706343" y="0" width="2.6" height="2" fill="#1e2a40"/><rect x="259.532819194322" y="0" width="2.6" height="2" fill="#1e2a40"/><rect x="264.36167937688396" y="0" width="1.9" height="2" fill="#1e2a40"/><rect x="268.72650637613145" y="0" width="2.3" height="2" fill="#1e2a40"/><rect x="271.8626593252962" y="0" width="1.5" height="2" fill="#3a4a66"/><rect x="275.33616630992947" y="0" width="3.9" height="2" fill="#2f4060"/><rect x="278.9663009357958" y="0" width="2.1" height="2" fill="#25344e"/><rect x="281.802789304737" y="0" width="2.0" height="2" fill="#2f4060"/><rect x="284.4418286066323" y="0" width="3.6" height="2" fill="#3a4a66"/><rect x="287.44403172476956" y="0" width="3.9" height="2" fill="#3a4a66"/><rect x="289.9642627607063" y="0" width="3.9" height="2" fill="#3a4a66"/><rect x="292.80788316801926" y="0" width="3.6" height="2" fill="#2f4060"/><rect x="296.3932180917249" y="0" width="1.8" height="2" fill="#1e2a40"/><rect x="299.63028735860104" y="0" width="2.2" height="2" fill="#1e2a40"/><rect x="304.4384035855794" y="0" width="1.9" height="2" fill="#1e2a40"/><rect x="306.43992354626056" y="0" width="1.1" height="2" fill="#3a4a66"/><rect x="308.7991746172209" y="0" width="1.1" height="2" fill="#2f4060"/><rect x="313.19299318099036" y="0" width="1.0" height="2" fill="#1e2a40"/><rect x="315.54514424909206" y="0" width="2.4" height="2" fill="#25344e"/><rect x="317.90495488614454" y="0" width="1.8" height="2" fill="#2f4060"/><rect x="321.930051898373" y="0" width="1.9" height="2" fill="#3a4a66"/><rect x="325.55818346660885" y="0" width="2.4" height="2" fill="#25344e"/><rect x="327.11478814375994" y="0" width="1.4" height="2" fill="#1e2a40"/><rect x="330.48203086357483" y="0" width="2.0" height="2" fill="#1e2a40"/><rect x="334.5414967923569" y="0" width="1.1" height="2" fill="#1e2a40"/><rect x="337.30513463225657" y="0" width="3.2" height="2" fill="#2f4060"/><rect x="338.9326358294898" y="0" width="1.8" height="2" fill="#3a4a66"/><rect x="342.83270092899744" y="0" width="1.3" height="2" fill="#2f4060"/><rect x="344.3836627363963" y="0" width="3.3" height="2" fill="#3a4a66"/><rect x="347.9657850214252" y="0" width="3.1" height="2" fill="#3a4a66"/><rect x="352.4712101146811" y="0" width="3.5" height="2" fill="#3a4a66"/><rect x="355.34274003201176" y="0" width="3.6" height="2" fill="#2f4060"/><rect x="359.988880138314" y="0" width="2.4" height="2" fill="#25344e"/><rect x="362.55165560063574" y="0" width="1.0" height="2" fill="#3a4a66"/><rect x="366.0890497182166" y="0" width="2.9" height="2" fill="#3a4a66"/><rect x="370.7764143790781" y="0" width="1.4" height="2" fill="#3a4a66"/><rect x="374.7097290669995" y="0" width="3.7" height="2" fill="#1e2a40"/><rect x="378.092535744649" y="0" width="2.3" height="2" fill="#25344e"/><rect x="379.83200333990004" y="0" width="1.7" height="2" fill="#25344e"/><rect x="384.10313011102386" y="0" width="3.0" height="2" fill="#25344e"/><rect x="386.76881070225767" y="0" width="2.3" height="2" fill="#25344e"/><rect x="391.7629813748413" y="0" width="3.1" height="2" fill="#25344e"/><rect x="393.6947939700241" y="0" width="1.4" height="2" fill="#25344e"/><rect x="397.6883457505457" y="0" width="1.4" height="2" fill="#1e2a40"/><rect x="401.65855446778005" y="0" width="2.3" height="2" fill="#2f4060"/><rect x="405.29569625540216" y="0" width="2.2" height="2" fill="#2f4060"/><rect x="407.0309940260396" y="0" width="1.6" height="2" fill="#25344e"/><rect x="410.84173497620077" y="0" width="3.2" height="2" fill="#1e2a40"/><rect x="412.5431993349095" y="0" width="2.7" height="2" fill="#3a4a66"/><rect x="417.1177992505259" y="0" width="1.4" height="2" fill="#3a4a66"/><rect x="418.93783146043626" y="0" width="3.1" height="2" fill="#3a4a66"/><rect x="422.15136062803555" y="0" width="3.8" height="2" fill="#1e2a40"/><rect x="426.8531425692045" y="0" width="1.4" height="2" fill="#1e2a40"/><rect x="428.88202479697003" y="0" width="2.9" height="2" fill="#1e2a40"/><rect x="433.5685036896607" y="0" width="2.7" height="2" fill="#2f4060"/><rect x="435.9898672201263" y="0" width="2.7" height="2" fill="#1e2a40"/><rect x="440.40399497698286" y="0" width="1.9" height="2" fill="#2f4060"/><rect x="444.73209586929175" y="0" width="3.6" height="2" fill="#3a4a66"/><rect x="448.8107309946096" y="0" width="1.5" height="2" fill="#25344e"/><rect x="452.60327909373717" y="0" width="1.3" height="2" fill="#25344e"/><rect x="454.4224030549314" y="0" width="1.4" height="2" fill="#3a4a66"/><rect x="456.7574508875432" y="0" width="3.6" height="2" fill="#3a4a66"/><rect x="461.62900281570205" y="0" width="1.3" height="2" fill="#25344e"/><rect x="465.026355772217" y="0" width="2.2" height="2" fill="#2f4060"/><rect x="469.8325240440577" y="0" width="2.3" height="2" fill="#2f4060"/><rect x="473.9561504394194" y="0" width="1.3" height="2" fill="#3a4a66"/><rect x="478.3282370779315" y="0" width="1.4" height="2" fill="#3a4a66"/><rect x="481.06828099690887" y="0" width="1.7" height="2" fill="#1e2a40"/><rect x="485.8251710230025" y="0" width="3.1" height="2" fill="#3a4a66"/><rect x="488.64865712371704" y="0" width="3.2" height="2" fill="#1e2a40"/><rect x="492.4162710676492" y="0" width="3.4" height="2" fill="#3a4a66"/><rect x="497.28063675323517" y="0" width="2.1" height="2" fill="#25344e"/><rect x="500.85483058831295" y="0" width="2.7" height="2" fill="#2f4060"/><rect x="503.7391152352821" y="0" width="1.3" height="2" fill="#25344e"/><rect x="505.89131133122874" y="0" width="1.6" height="2" fill="#3a4a66"/><rect x="510.503712416426" y="0" width="2.4" height="2" fill="#1e2a40"/><rect x="512.005251128916" y="0" width="2.4" height="2" fill="#3a4a66"/><rect x="514.6366558016989" y="0" width="2.4" height="2" fill="#2f4060"/><rect x="516.6780122146668" y="0" width="1.5" height="2" fill="#1e2a40"/><rect x="521.2197473969953" y="0" width="3.6" height="2" fill="#3a4a66"/><rect x="523.2521461121056" y="0" width="1.8" height="2" fill="#1e2a40"/><rect x="527.6166367445605" y="0" width="3.3" height="2" fill="#2f4060"/><rect x="529.2326724569749" y="0" width="3.7" height="2" fill="#1e2a40"/><rect x="533.9684918796669" y="0" width="2.1" height="2" fill="#25344e"/><rect x="537.8754917513686" y="0" width="3.0" height="2" fill="#3a4a66"/><rect x="542.346284486803" y="0" width="1.5" height="2" fill="#1e2a40"/><rect x="544.8651368293831" y="0" width="3.0" height="2" fill="#2f4060"/><rect x="546.4824992817082" y="0" width="3.1" height="2" fill="#2f4060"/><rect x="550.2801416525708" y="0" width="2.9" height="2" fill="#1e2a40"/><rect x="554.1619789430324" y="0" width="1.6" height="2" fill="#1e2a40"/><rect x="556.6529801707843" y="0" width="3.2" height="2" fill="#3a4a66"/><rect x="558.7247164075611" y="0" width="1.7" height="2" fill="#2f4060"/><rect x="563.5164026716418" y="0" width="2.9" height="2" fill="#3a4a66"/><rect x="567.5588805730262" y="0" width="1.8" height="2" fill="#3a4a66"/><rect x="569.2719145776371" y="0" width="3.3" height="2" fill="#3a4a66"/><rect x="571.3660655690569" y="0" width="1.1" height="2" fill="#1e2a40"/><rect x="576.1543319099113" y="0" width="3.1" height="2" fill="#2f4060"/><rect x="580.8001037695808" y="0" width="2.5" height="2" fill="#3a4a66"/><rect x="582.4882689752217" y="0" width="1.7" height="2" fill="#25344e"/><rect x="585.7292320944201" y="0" width="3.3" height="2" fill="#25344e"/><rect x="588.1232372657563" y="0" width="2.2" height="2" fill="#1e2a40"/><rect x="591.8649646900179" y="0" width="3.6" height="2" fill="#2f4060"/><rect x="593.9928172374479" y="0" width="2.5" height="2" fill="#3a4a66"/><rect x="596.1510232373258" y="0" width="1.7" height="2" fill="#1e2a40"/><rect x="600.418820024781" y="0" width="1.3" height="2" fill="#2f4060"/><rect x="604.0128228100449" y="0" width="3.6" height="2" fill="#2f4060"/><rect x="607.700141731588" y="0" width="2.3" height="2" fill="#1e2a40"/><rect x="610.9030318369929" y="0" width="2.7" height="2" fill="#3a4a66"/><rect x="614.2311386925035" y="0" width="1.4" height="2" fill="#25344e"/><rect x="618.9266340792725" y="0" width="1.9" height="2" fill="#3a4a66"/><rect x="623.5469152756019" y="0" width="4.0" height="2" fill="#25344e"/><rect x="625.532423125884" y="0" width="2.4" height="2" fill="#1e2a40"/><rect x="629.9004549995057" y="0" width="1.9" height="2" fill="#2f4060"/><rect x="633.2791130802544" y="0" width="2.4" height="2" fill="#25344e"/><rect x="637.5749449803465" y="0" width="3.9" height="2" fill="#2f4060"/><rect x="640.0403590850692" y="0" width="2.5" height="2" fill="#2f4060"/><rect x="641.7084679764863" y="0" width="1.6" height="2" fill="#1e2a40"/><rect x="646.2977768441507" y="0" width="3.7" height="2" fill="#25344e"/><rect x="649.2697997701616" y="0" width="1.9" height="2" fill="#25344e"/><rect x="653.9061147024237" y="0" width="3.0" height="2" fill="#2f4060"/><rect x="657.4176659529345" y="0" width="2.3" height="2" fill="#25344e"/><rect x="661.4657365972624" y="0" width="3.1" height="2" fill="#1e2a40"/><rect x="663.3386167941487" y="0" width="3.4" height="2" fill="#2f4060"/><rect x="665.9630901553037" y="0" width="1.9" height="2" fill="#2f4060"/><rect x="668.3821622039828" y="0" width="3.0" height="2" fill="#1e2a40"/><rect x="670.0012872514753" y="0" width="2.6" height="2" fill="#25344e"/><rect x="671.5974402345284" y="0" width="1.2" height="2" fill="#2f4060"/><rect x="675.9900989170686" y="0" width="2.3" height="2" fill="#1e2a40"/><rect x="680.8123680351251" y="0" width="2.8" height="2" fill="#2f4060"/><rect x="684.1583999244532" y="0" width="1.4" height="2" fill="#2f4060"/><rect x="686.814702084134" y="0" width="1.0" height="2" fill="#2f4060"/><rect x="690.8586181340337" y="0" width="1.3" height="2" fill="#2f4060"/><rect x="694.5656056750761" y="0" width="1.4" height="2" fill="#3a4a66"/><rect x="698.8473206174054" y="0" width="1.4" height="2" fill="#1e2a40"/><rect x="701.9077257019146" y="0" width="1.7" height="2" fill="#3a4a66"/><rect x="704.0080692686377" y="0" width="1.1" height="2" fill="#2f4060"/><rect x="707.3721732985955" y="0" width="3.9" height="2" fill="#25344e"/><rect x="709.2346439697134" y="0" width="3.4" height="2" fill="#3a4a66"/><rect x="713.1338875680187" y="0" width="1.6" height="2" fill="#25344e"/><rect x="714.7489347373569" y="0" width="2.7" height="2" fill="#3a4a66"/><rect x="718.7166334871544" y="0" width="2.1" height="2" fill="#3a4a66"/><rect x="720.9713027489128" y="0" width="1.8" height="2" fill="#2f4060"/><rect x="723.5325956205111" y="0" width="2.5" height="2" fill="#2f4060"/><rect x="726.3158700306635" y="0" width="3.4" height="2" fill="#25344e"/><rect x="729.9794097363149" y="0" width="2.2" height="2" fill="#2f4060"/><rect x="731.9793012999008" y="0" width="1.7" height="2" fill="#3a4a66"/><rect x="733.6114053303623" y="0" width="1.5" height="2" fill="#25344e"/><rect x="737.7490356291848" y="0" width="1.8" height="2" fill="#2f4060"/><rect x="742.0366883473833" y="0" width="3.3" height="2" fill="#3a4a66"/><rect x="745.9268507605447" y="0" width="3.6" height="2" fill="#25344e"/><rect x="750.2281480615721" y="0" width="2.1" height="2" fill="#25344e"/><rect x="752.0905322191337" y="0" width="2.8" height="2" fill="#2f4060"/><rect x="756.4369506919738" y="0" width="1.1" height="2" fill="#25344e"/><rect x="760.0727948376315" y="0" width="2.5" height="2" fill="#3a4a66"/><rect x="763.4825873723532" y="0" width="3.1" height="2" fill="#3a4a66"/><rect x="768.4209432187333" y="0" width="3.4" height="2" fill="#25344e"/><rect x="771.7994579817994" y="0" width="3.4" height="2" fill="#1e2a40"/><rect x="776.6535447726102" y="0" width="1.1" height="2" fill="#2f4060"/><rect x="779.1481474267572" y="0" width="1.2" height="2" fill="#25344e"/><rect x="783.3562270348812" y="0" width="2.8" height="2" fill="#3a4a66"/><rect x="785.9300008018621" y="0" width="3.8" height="2" fill="#1e2a40"/><rect x="790.6822034319516" y="0" width="1.7" height="2" fill="#25344e"/><rect x="794.8190806096756" y="0" width="3.0" height="2" fill="#1e2a40"/><rect x="799.4591136590348" y="0" width="3.1" height="2" fill="#2f4060"/><rect x="802.649918913974" y="0" width="1.3" height="2" fill="#25344e"/><rect x="804.9867186525067" y="0" width="3.9" height="2" fill="#3a4a66"/><rect x="807.8636527292908" y="0" width="1.0" height="2" fill="#3a4a66"/><rect x="810.6865819039187" y="0" width="3.3" height="2" fill="#2f4060"/><rect x="815.372193806624" y="0" width="2.8" height="2" fill="#3a4a66"/><rect x="818.0069525762044" y="0" width="3.5" height="2" fill="#1e2a40"/><rect x="820.3784996091247" y="0" width="1.3" height="2" fill="#1e2a40"/><rect x="822.9480289435126" y="0" width="1.8" height="2" fill="#25344e"/><rect x="827.5884417161584" y="0" width="1.5" height="2" fill="#3a4a66"/><rect x="831.771148967387" y="0" width="1.7" height="2" fill="#25344e"/><rect x="835.2658707151775" y="0" width="2.9" height="2" fill="#3a4a66"/><rect x="838.2248421247342" y="0" width="2.3" height="2" fill="#2f4060"/><rect x="840.7829740390515" y="0" width="1.8" height="2" fill="#1e2a40"/><rect x="842.9382935954692" y="0" width="1.1" height="2" fill="#25344e"/><rect x="845.4730890732246" y="0" width="2.7" height="2" fill="#2f4060"/><rect x="848.4914908462451" y="0" width="2.0" height="2" fill="#25344e"/><rect x="852.2537459468056" y="0" width="3.1" height="2" fill="#25344e"/><rect x="853.9686183691211" y="0" width="2.5" height="2" fill="#25344e"/><rect x="856.5831804012155" y="0" width="3.6" height="2" fill="#3a4a66"/><rect x="861.3266775319123" y="0" width="1.7" height="2" fill="#3a4a66"/><rect x="865.7663631102048" y="0" width="1.0" height="2" fill="#2f4060"/><rect x="867.6569671168894" y="0" width="2.0" height="2" fill="#1e2a40"/><rect x="871.3120296035786" y="0" width="1.3" height="2" fill="#3a4a66"/><rect x="875.3887863985502" y="0" width="3.4" height="2" fill="#2f4060"/><rect x="879.3846343660244" y="0" width="3.8" height="2" fill="#25344e"/><rect x="882.1633132925526" y="0" width="3.4" height="2" fill="#2f4060"/><rect x="884.3857769534977" y="0" width="2.1" height="2" fill="#3a4a66"/><rect x="889.0039113022012" y="0" width="4.0" height="2" fill="#25344e"/><rect x="891.3644036949153" y="0" width="3.8" height="2" fill="#3a4a66"/><rect x="894.1775404440314" y="0" width="1.4" height="2" fill="#1e2a40"/><rect x="896.142147015177" y="0" width="1.0" height="2" fill="#3a4a66"/><rect x="901.0115893901745" y="0" width="3.8" height="2" fill="#25344e"/><rect x="904.2289939282641" y="0" width="3.8" height="2" fill="#1e2a40"/><rect x="905.7844036086378" y="0" width="3.4" height="2" fill="#1e2a40"/><rect x="909.912677077703" y="0" width="1.6" height="2" fill="#1e2a40"/><rect x="912.7500042413373" y="0" width="1.9" height="2" fill="#3a4a66"/><rect x="916.4987001434093" y="0" width="3.3" height="2" fill="#25344e"/><rect x="920.0135824761263" y="0" width="1.9" height="2" fill="#1e2a40"/><rect x="924.8143360581572" y="0" width="1.2" height="2" fill="#3a4a66"/><rect x="926.4907176407094" y="0" width="2.3" height="2" fill="#2f4060"/><rect x="928.9394261625201" y="0" width="3.2" height="2" fill="#2f4060"/><rect x="931.3880668919038" y="0" width="1.3" height="2" fill="#3a4a66"/><rect x="934.4016298054873" y="0" width="1.5" height="2" fill="#3a4a66"/><rect x="938.895825712072" y="0" width="1.7" height="2" fill="#3a4a66"/><rect x="941.6410188094515" y="0" width="3.4" height="2" fill="#25344e"/><rect x="946.003947000135" y="0" width="1.4" height="2" fill="#25344e"/><rect x="947.5784798582533" y="0" width="2.7" height="2" fill="#3a4a66"/><rect x="952.1170073082835" y="0" width="1.2" height="2" fill="#2f4060"/><rect x="954.2954398653453" y="0" width="3.4" height="2" fill="#25344e"/><rect x="957.4470518626608" y="0" width="1.3" height="2" fill="#1e2a40"/><rect x="961.041260653333" y="0" width="3.5" height="2" fill="#3a4a66"/><rect x="964.3186066465445" y="0" width="1.2" height="2" fill="#3a4a66"/><rect x="968.5166581343817" y="0" width="2.5" height="2" fill="#25344e"/><rect x="970.7712462658644" y="0" width="2.3" height="2" fill="#3a4a66"/><rect x="975.1149054362813" y="0" width="3.5" height="2" fill="#3a4a66"/><rect x="979.8186499046989" y="0" width="2.1" height="2" fill="#2f4060"/><rect x="984.4398774237973" y="0" width="1.4" height="2" fill="#2f4060"/><rect x="987.4173488865814" y="0" width="3.9" height="2" fill="#1e2a40"/><rect x="989.6757889182703" y="0" width="2.3" height="2" fill="#1e2a40"/><rect x="991.663180812167" y="0" width="2.1" height="2" fill="#25344e"/><rect x="995.495953836136" y="0" width="1.4" height="2" fill="#2f4060"/><rect x="999.6490967026418" y="0" width="1.2" height="2" fill="#3a4a66"/><rect x="1001.2747986862197" y="0" width="2.2" height="2" fill="#2f4060"/><rect x="1003.462652318853" y="0" width="1.1" height="2" fill="#3a4a66"/><rect x="1008.3253699742421" y="0" width="2.8" height="2" fill="#2f4060"/><rect x="1011.4639184924225" y="0" width="1.2" height="2" fill="#1e2a40"/><rect x="1016.2453965522081" y="0" width="1.1" height="2" fill="#2f4060"/><rect x="1020.588754312679" y="0" width="1.3" height="2" fill="#2f4060"/></svg>
<svg style="left:0px;top:333.5px;" width="6" height="9" viewBox="0 0 6 9"><path d="M.2 0h5.4v4.2L2.9 8 .2 4.2z" fill="#8a8a8a"/></svg>
<div class="a" style="left:1.8px;top:341px;width:1.2px;height:248px;background:#787878;"></div>
</body></html>
